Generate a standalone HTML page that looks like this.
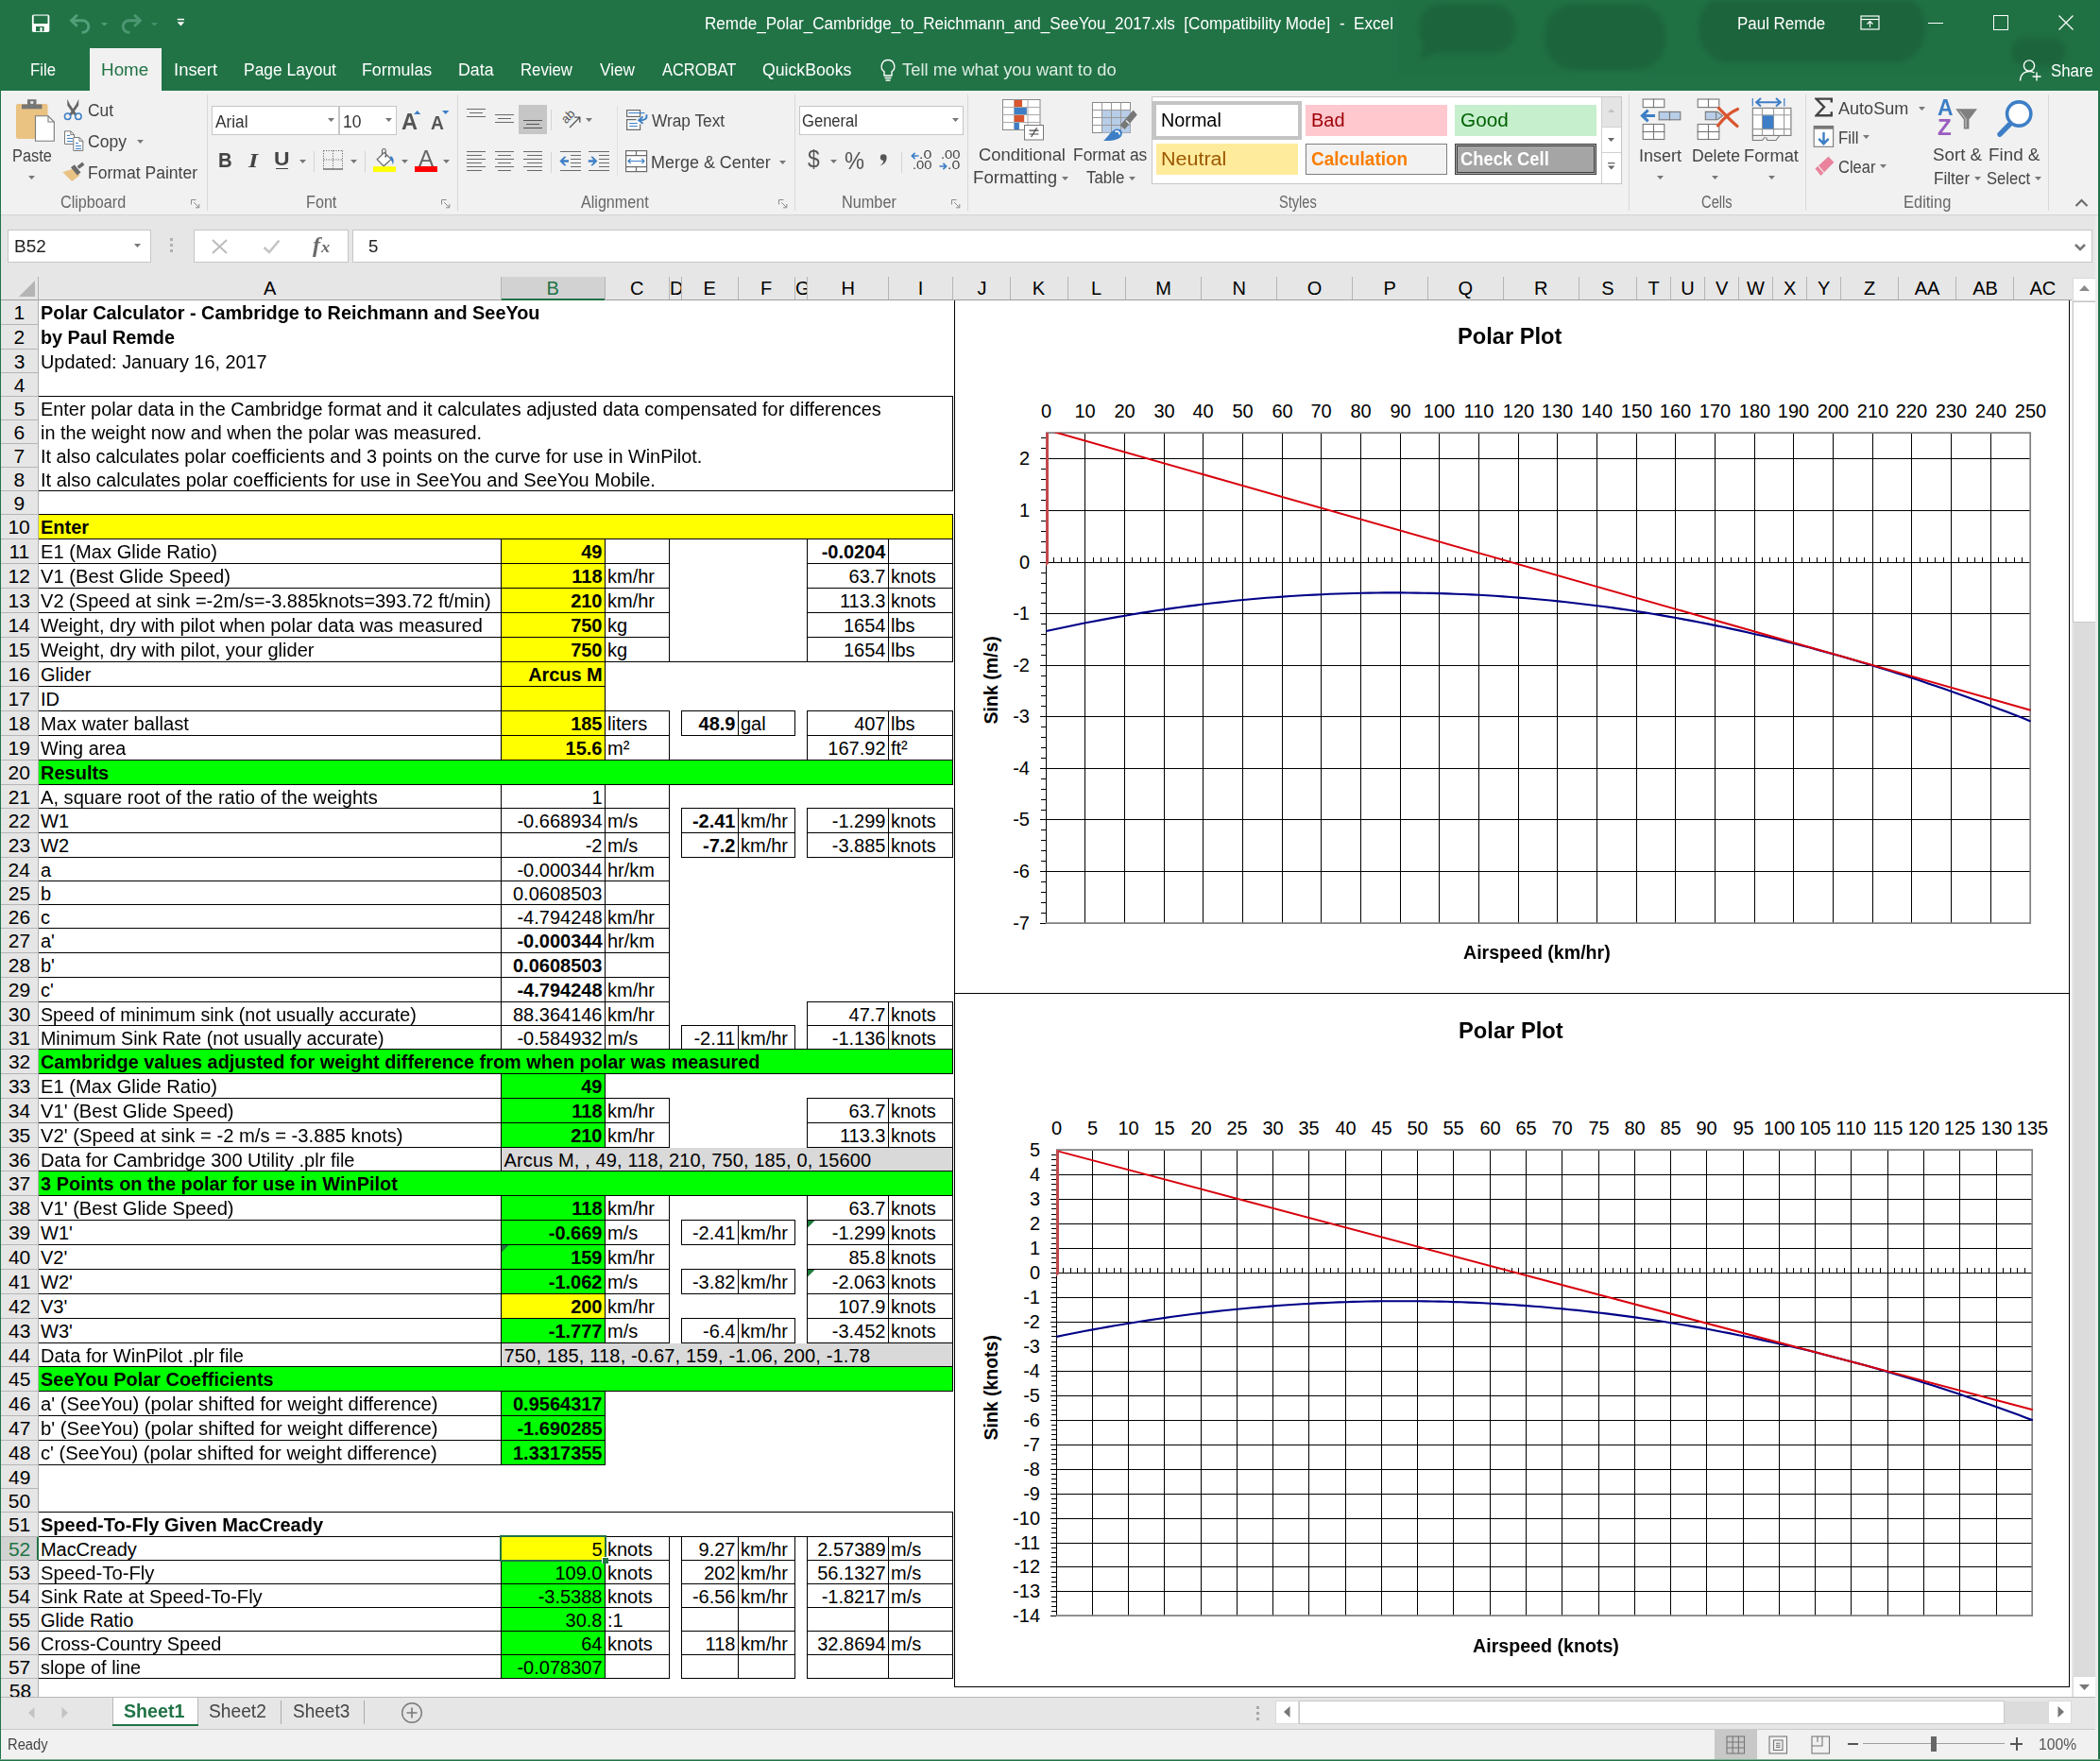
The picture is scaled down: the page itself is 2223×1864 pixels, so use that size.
<!DOCTYPE html><html><head><meta charset="utf-8"><title>Excel</title><style>html,body{margin:0;padding:0;background:#fff;}body{width:2223px;height:1864px;position:relative;overflow:hidden;font-family:'Liberation Sans',sans-serif;}body div,body span,body svg{position:absolute;display:block;}span{white-space:pre;}</style></head><body><div style="left:0px;top:0px;width:2223px;height:96px;background:#217346;"></div>
<svg style="left:1480px;top:0px;filter:blur(2.5px)" width="743" height="96" viewBox="0 0 743 96"><rect x="0" y="0" width="743" height="78" fill="#1d6a40" opacity="0.35"/><g fill="#1b5e38" opacity="0.6"><rect x="22" y="4" width="102" height="52" rx="24"/><path d="M30 40 L22 62 L55 52 Z"/><rect x="155" y="4" width="128" height="70" rx="32"/><rect x="318" y="-6" width="240" height="72" rx="34"/><rect x="650" y="40" width="56" height="30" rx="14"/></g></svg>
<div style="left:95px;top:51px;width:76px;height:46px;background:#f1f1f1;"></div>
<svg style="left:32px;top:14px;" width="22" height="21" viewBox="0 0 22 21"><rect x="1.9" y="1.5" width="18.4" height="18.4" rx="1.6" fill="#fff"/><rect x="3.7" y="2.6" width="14.8" height="8.4" fill="#217346"/><rect x="6" y="14" width="8.6" height="5.2" fill="#217346"/><rect x="10.4" y="15" width="2.2" height="4.2" fill="#fff"/></svg>
<svg style="left:72px;top:14px;" width="26" height="24" viewBox="0 0 26 24"><path d="M6 7.8 H15.5 a6.3 6.3 0 0 1 0 12.6 H14.6" fill="none" stroke="#52a07a" stroke-width="2.9"/><path d="M9.8 1.8 L3.6 7.8 L9.8 13.8" fill="none" stroke="#52a07a" stroke-width="2.9"/></svg>
<svg style="left:107px;top:23.5px;" width="7" height="3.8" viewBox="0 0 7 3.8"><path d="M0 0 L7 0 L3.5 3.8 Z" fill="#4f9b76"/></svg>
<svg style="left:126px;top:14px;" width="26" height="24" viewBox="0 0 26 24"><g transform="translate(26,0) scale(-1,1)"><path d="M6 7.8 H15.5 a6.3 6.3 0 0 1 0 12.6 H14.6" fill="none" stroke="#4d9873" stroke-width="2.9"/><path d="M9.8 1.8 L3.6 7.8 L9.8 13.8" fill="none" stroke="#4d9873" stroke-width="2.9"/></g></svg>
<svg style="left:160px;top:23.5px;" width="7" height="3.8" viewBox="0 0 7 3.8"><path d="M0 0 L7 0 L3.5 3.8 Z" fill="#468f6b"/></svg>
<svg style="left:187px;top:19px;" width="9" height="10" viewBox="0 0 9 10"><rect x="0.8" y="0.8" width="7.2" height="1.5" fill="#fff"/><path d="M0.6 4.3 H8.2 L4.4 8.5 Z" fill="#fff"/></svg>
<span style="top:17px;font:normal normal 17.6px/17.6px 'Liberation Sans',sans-serif;color:#fff;left:745.54px;transform:scaleX(0.9726);transform-origin:0 0;">Remde_Polar_Cambridge_to_Reichmann_and_SeeYou_2017.xls  [Compatibility Mode]  -  Excel</span>
<span style="top:17px;font:normal normal 17.6px/17.6px 'Liberation Sans',sans-serif;color:#fff;left:1838.56px;transform:scaleX(0.9630);transform-origin:0 0;">Paul Remde</span>
<svg style="left:1969px;top:16px;" width="21" height="16" viewBox="0 0 21 16"><rect x="1" y="1" width="19" height="14" fill="none" stroke="#fff" stroke-width="1.2"/><line x1="1" y1="4.5" x2="20" y2="4.5" stroke="#fff" stroke-width="1.2"/><path d="M10.5 13 V7 M7.5 9.5 L10.5 6.5 L13.5 9.5" fill="none" stroke="#fff" stroke-width="1.2"/></svg>
<div style="left:2041px;top:24px;width:16px;height:1px;background:#fff;"></div>
<div style="left:2110px;top:16px;width:14px;height:14px;border:1px solid #fff"></div>
<svg style="left:2178px;top:15px;" width="18" height="18" viewBox="0 0 18 18"><path d="M1.5 1.5 L16.5 16.5 M16.5 1.5 L1.5 16.5" stroke="#fff" stroke-width="1.3"/></svg>
<span style="top:66px;font:normal normal 17.6px/17.6px 'Liberation Sans',sans-serif;color:#fff;left:31.57px;transform:scaleX(0.9500);transform-origin:0 0;">File</span>
<span style="top:66px;font:normal normal 17.6px/17.6px 'Liberation Sans',sans-serif;color:#fff;left:184.43px;transform:scaleX(1.0485);transform-origin:0 0;">Insert</span>
<span style="top:66px;font:normal normal 17.6px/17.6px 'Liberation Sans',sans-serif;color:#fff;left:257.81px;transform:scaleX(0.9913);transform-origin:0 0;">Page Layout</span>
<span style="top:66px;font:normal normal 17.6px/17.6px 'Liberation Sans',sans-serif;color:#fff;left:382.68px;transform:scaleX(1.0119);transform-origin:0 0;">Formulas</span>
<span style="top:66px;font:normal normal 17.6px/17.6px 'Liberation Sans',sans-serif;color:#fff;left:484.88px;transform:scaleX(1.0126);transform-origin:0 0;">Data</span>
<span style="top:66px;font:normal normal 17.6px/17.6px 'Liberation Sans',sans-serif;color:#fff;left:550.97px;transform:scaleX(0.9529);transform-origin:0 0;">Review</span>
<span style="top:66px;font:normal normal 17.6px/17.6px 'Liberation Sans',sans-serif;color:#fff;left:635.00px;transform:scaleX(0.9775);transform-origin:0 0;">View</span>
<span style="top:66px;font:normal normal 17.6px/17.6px 'Liberation Sans',sans-serif;color:#fff;left:701.20px;transform:scaleX(0.9345);transform-origin:0 0;">ACROBAT</span>
<span style="top:66px;font:normal normal 17.6px/17.6px 'Liberation Sans',sans-serif;color:#fff;left:807.25px;transform:scaleX(1.0054);transform-origin:0 0;">QuickBooks</span>
<span style="top:66px;font:normal normal 17.6px/17.6px 'Liberation Sans',sans-serif;color:#217346;left:107.19px;transform:scaleX(1.0726);transform-origin:0 0;">Home</span>
<svg style="left:931px;top:62px;" width="18" height="26" viewBox="0 0 18 26"><path d="M9 1.5 a6.8 6.8 0 0 1 4 12.3 V18 H5 V13.8 A6.8 6.8 0 0 1 9 1.5 Z" fill="none" stroke="#fff" stroke-width="1.4"/><path d="M5.5 20.5 H12.5 M6.5 23 H11.5" stroke="#fff" stroke-width="1.4"/></svg>
<span style="top:66px;font:normal normal 17.6px/17.6px 'Liberation Sans',sans-serif;color:#dcebe2;left:955.24px;transform:scaleX(1.0440);transform-origin:0 0;">Tell me what you want to do</span>
<svg style="left:2137px;top:62px;" width="26" height="25" viewBox="0 0 26 25"><circle cx="11" cy="7.5" r="5.6" fill="none" stroke="#fff" stroke-width="1.4"/><path d="M1.5 23.5 C2 15 8 13.5 11 13.5 C13 13.5 15 14 16.5 15" fill="none" stroke="#fff" stroke-width="1.4"/><path d="M19 14.5 V23.5 M14.5 19 H23.5" stroke="#fff" stroke-width="1.4"/></svg>
<span style="top:67px;font:normal normal 17.6px/17.6px 'Liberation Sans',sans-serif;color:#fff;left:2170.78px;transform:scaleX(0.9560);transform-origin:0 0;">Share</span>
<div style="left:1px;top:96px;width:2221px;height:131px;background:#f1f1f1;"></div>
<div style="left:1px;top:227px;width:2221px;height:1px;background:#d4d4d4"></div>
<div style="left:219px;top:100px;width:1px;height:123px;background:#d8d8d8"></div>
<div style="left:484px;top:100px;width:1px;height:123px;background:#d8d8d8"></div>
<div style="left:841px;top:100px;width:1px;height:123px;background:#d8d8d8"></div>
<div style="left:1024px;top:100px;width:1px;height:123px;background:#d8d8d8"></div>
<div style="left:1724px;top:100px;width:1px;height:123px;background:#d8d8d8"></div>
<div style="left:1911px;top:100px;width:1px;height:123px;background:#d8d8d8"></div>
<div style="left:2168px;top:100px;width:1px;height:123px;background:#d8d8d8"></div>
<span style="top:206px;font:normal normal 17.6px/17.6px 'Liberation Sans',sans-serif;color:#666666;left:63.81px;transform:scaleX(0.9188);transform-origin:0 0;">Clipboard</span>
<span style="top:206px;font:normal normal 17.6px/17.6px 'Liberation Sans',sans-serif;color:#666666;left:324.12px;transform:scaleX(0.9194);transform-origin:0 0;">Font</span>
<span style="top:206px;font:normal normal 17.6px/17.6px 'Liberation Sans',sans-serif;color:#666666;left:615.40px;transform:scaleX(0.9154);transform-origin:0 0;">Alignment</span>
<span style="top:206px;font:normal normal 17.6px/17.6px 'Liberation Sans',sans-serif;color:#666666;left:891.41px;transform:scaleX(0.9251);transform-origin:0 0;">Number</span>
<span style="top:206px;font:normal normal 17.6px/17.6px 'Liberation Sans',sans-serif;color:#666666;left:1353.88px;transform:scaleX(0.8299);transform-origin:0 0;">Styles</span>
<span style="top:206px;font:normal normal 17.6px/17.6px 'Liberation Sans',sans-serif;color:#666666;left:1800.77px;transform:scaleX(0.8371);transform-origin:0 0;">Cells</span>
<span style="top:206px;font:normal normal 17.6px/17.6px 'Liberation Sans',sans-serif;color:#666666;left:2014.90px;transform:scaleX(0.9353);transform-origin:0 0;">Editing</span>
<svg style="left:202px;top:211px;" width="10" height="10" viewBox="0 0 10 10"><path d="M0.5 5.5 V0.5 H5.5" fill="none" stroke="#8a8a8a" stroke-width="1"/><path d="M3.2 3.2 L8.4 8.4 M8.8 5 V8.8 H5" fill="none" stroke="#8a8a8a" stroke-width="1"/></svg>
<svg style="left:467px;top:211px;" width="10" height="10" viewBox="0 0 10 10"><path d="M0.5 5.5 V0.5 H5.5" fill="none" stroke="#8a8a8a" stroke-width="1"/><path d="M3.2 3.2 L8.4 8.4 M8.8 5 V8.8 H5" fill="none" stroke="#8a8a8a" stroke-width="1"/></svg>
<svg style="left:824px;top:211px;" width="10" height="10" viewBox="0 0 10 10"><path d="M0.5 5.5 V0.5 H5.5" fill="none" stroke="#8a8a8a" stroke-width="1"/><path d="M3.2 3.2 L8.4 8.4 M8.8 5 V8.8 H5" fill="none" stroke="#8a8a8a" stroke-width="1"/></svg>
<svg style="left:1007px;top:211px;" width="10" height="10" viewBox="0 0 10 10"><path d="M0.5 5.5 V0.5 H5.5" fill="none" stroke="#8a8a8a" stroke-width="1"/><path d="M3.2 3.2 L8.4 8.4 M8.8 5 V8.8 H5" fill="none" stroke="#8a8a8a" stroke-width="1"/></svg>
<svg style="left:2196px;top:210px;" width="15" height="10" viewBox="0 0 15 10"><path d="M1.5 8 L7.5 2 L13.5 8" fill="none" stroke="#666" stroke-width="2"/></svg>
<svg style="left:16px;top:103px;" width="44" height="48" viewBox="0 0 44 48"><rect x="1" y="7" width="33.5" height="37" rx="2" fill="#eac282"/><path d="M7 7.5 H28.5 V12.3 H7 Z" fill="#767676"/><path d="M13 2.2 H22.5 V8 H13 Z" fill="#767676"/><rect x="16.3" y="4.2" width="3" height="2.6" fill="#f1f1f1"/><path d="M21.5 19.8 H35 L41.3 26 V46.2 H21.5 Z" fill="#fff" stroke="#7a7a7a" stroke-width="1.1"/><path d="M35 19.8 V26 H41.3" fill="none" stroke="#7a7a7a" stroke-width="1.1"/></svg>
<span style="top:156.5px;font:normal normal 17.6px/17.6px 'Liberation Sans',sans-serif;color:#444444;left:12.80px;transform:scaleX(0.9310);transform-origin:0 0;">Paste</span>
<svg style="left:30px;top:186px;" width="7" height="4" viewBox="0 0 7 4"><path d="M0 0 L7 0 L3.5 4 Z" fill="#777"/></svg>
<svg style="left:66px;top:104px;" width="24" height="25" viewBox="0 0 24 25"><path d="M5.2 0.8 L8 6.6 L15.6 17.4 L12.5 17.9 L5.3 7.6 Z" fill="#666"/><path d="M17.3 0.8 L14.5 6.6 L6.9 17.4 L10 17.9 L17.2 7.6 Z" fill="#666"/><circle cx="5.6" cy="19.3" r="3.2" fill="none" stroke="#3d7ec6" stroke-width="1.5"/><circle cx="16.9" cy="19.3" r="3.2" fill="none" stroke="#3d7ec6" stroke-width="1.5"/></svg>
<span style="top:108.8px;font:normal normal 17.6px/17.6px 'Liberation Sans',sans-serif;color:#444444;left:93.06px;transform:scaleX(0.9887);transform-origin:0 0;">Cut</span>
<svg style="left:66px;top:136px;" width="24" height="26" viewBox="0 0 24 26"><path d="M2.5 2.8 H8.8 L12.6 6.6 V16.5 H2.5 Z" fill="#fff" stroke="#777" stroke-width="1"/><path d="M8.8 2.8 V6.6 H12.6" fill="none" stroke="#777" stroke-width="1"/><path d="M4.5 7.5 H8 M4.5 10.5 H10.5 M4.5 13.5 H10.5" stroke="#3d7ec6" stroke-width="1" shape-rendering="crispEdges"/><path d="M11.8 9.5 H18 L21.8 13.3 V23.5 H11.8 Z" fill="#fff" stroke="#777" stroke-width="1"/><path d="M18 9.5 V13.3 H21.8" fill="none" stroke="#777" stroke-width="1"/><path d="M13.8 15.5 H17 M13.8 18.5 H19.8 M13.8 21.5 H19.8" stroke="#3d7ec6" stroke-width="1" shape-rendering="crispEdges"/></svg>
<span style="top:141.8px;font:normal normal 17.6px/17.6px 'Liberation Sans',sans-serif;color:#444444;left:93.05px;transform:scaleX(0.9963);transform-origin:0 0;">Copy</span>
<svg style="left:145.2px;top:148px;" width="7" height="4" viewBox="0 0 7 4"><path d="M0 0 L7 0 L3.5 4 Z" fill="#777"/></svg>
<svg style="left:65px;top:170px;" width="26" height="24" viewBox="0 0 26 24"><path d="M1.3 12.2 L12 8.8 L19.5 15.5 L11.2 22 Z" fill="#eac282"/><path d="M10 7.2 L13.8 4.2 L20.5 12.6 L16.8 15.6 Z" fill="#6a6a6a"/><path d="M16.6 6 L22.2 1.6 L24.4 4.4 L18.8 8.8 Z" fill="#6a6a6a"/></svg>
<span style="top:174.6px;font:normal normal 17.6px/17.6px 'Liberation Sans',sans-serif;color:#444444;left:92.50px;transform:scaleX(0.9974);transform-origin:0 0;">Format Painter</span>
<div style="left:224px;top:112px;width:133px;height:29px;border:1px solid #c6c6c6;background:#fff"></div>
<div style="left:359px;top:112px;width:59px;height:29px;border:1px solid #c6c6c6;background:#fff"></div>
<span style="top:120.69999999999999px;font:normal normal 17.6px/17.6px 'Liberation Sans',sans-serif;color:#333;left:228.00px;transform:scaleX(0.9824);transform-origin:0 0;">Arial</span>
<svg style="left:347px;top:125px;" width="7" height="4" viewBox="0 0 7 4"><path d="M0 0 L7 0 L3.5 4 Z" fill="#777"/></svg>
<span style="top:120.69999999999999px;font:normal normal 17.6px/17.6px 'Liberation Sans',sans-serif;color:#333;left:362.76px;transform:scaleX(0.9943);transform-origin:0 0;">10</span>
<svg style="left:408px;top:125px;" width="7" height="4" viewBox="0 0 7 4"><path d="M0 0 L7 0 L3.5 4 Z" fill="#777"/></svg>
<span style="top:117.6px;font:normal bold 23.5px/23.5px 'Liberation Sans',sans-serif;color:#555;left:424.80px;transform:scaleX(1.0032);transform-origin:0 0;">A</span>
<svg style="left:438px;top:117px;" width="8" height="4" viewBox="0 0 8 4"><path d="M0 4 L3.7 0 L7.4 4 Z" fill="#3d7ec6"/></svg>
<span style="top:120.6px;font:normal bold 19.5px/19.5px 'Liberation Sans',sans-serif;color:#555;left:455.51px;transform:scaleX(0.9846);transform-origin:0 0;">A</span>
<svg style="left:468px;top:117px;" width="8" height="4" viewBox="0 0 8 4"><path d="M0 0 L7.4 0 L3.7 4 Z" fill="#3d7ec6"/></svg>
<span style="top:158.9px;font:normal bold 22.5px/22.5px 'Liberation Sans',sans-serif;color:#444;left:231.25px;transform:scaleX(0.9018);transform-origin:0 0;">B</span>
<span style="top:158.9px;font:italic bold 22px/22px 'Liberation Serif',serif;color:#444;left:262.70px;transform:scaleX(1.1895);transform-origin:0 0;">I</span>
<span style="top:159px;font:normal bold 19.5px/19.5px 'Liberation Sans',sans-serif;color:#444;left:290.23px;transform:scaleX(1.1745);transform-origin:0 0;">U</span>
<div style="left:292px;top:177.5px;width:13px;height:1.5px;background:#444"></div>
<svg style="left:317px;top:169px;" width="7" height="4" viewBox="0 0 7 4"><path d="M0 0 L7 0 L3.5 4 Z" fill="#777"/></svg>
<div style="left:332px;top:160px;width:1px;height:22px;background:#d4d4d4"></div>
<svg style="left:341px;top:158px;" width="24" height="23" viewBox="0 0 24 23"><g stroke="#555" stroke-width="1" stroke-dasharray="1 1.6"><path d="M1.5 1.5 H21.5 M1.5 11 H21.5 M1.5 1.5 V20.5 M11.5 1.5 V20.5 M21.5 1.5 V20.5"/></g><path d="M1 21 H22" stroke="#666" stroke-width="1.4"/></svg>
<svg style="left:371px;top:169px;" width="7" height="4" viewBox="0 0 7 4"><path d="M0 0 L7 0 L3.5 4 Z" fill="#777"/></svg>
<div style="left:386px;top:160px;width:1px;height:22px;background:#d4d4d4"></div>
<svg style="left:394px;top:156px;" width="28" height="27" viewBox="0 0 28 27"><path d="M5.2 12.8 L12.8 5.4 L20 12.6 L12.2 19.8 Z" fill="#fff" stroke="#666" stroke-width="1.2"/><path d="M10.5 7.5 V3.4 a1.9 1.9 0 0 1 3.8 0 V9.2" fill="none" stroke="#666" stroke-width="1.1"/><circle cx="14.3" cy="9.6" r="1.1" fill="#666"/><path d="M19.6 9 C22.5 10.5 23.6 14 21.8 18.2 C21.3 15 20.2 13.4 18.8 12.2 Z" fill="#3d7ec6"/><rect x="1" y="20.2" width="24" height="5.7" fill="#ffff00"/></svg>
<svg style="left:425px;top:169px;" width="7" height="4" viewBox="0 0 7 4"><path d="M0 0 L7 0 L3.5 4 Z" fill="#777"/></svg>
<span style="top:157px;font:normal normal 23.5px/23.5px 'Liberation Sans',sans-serif;color:#666;left:443.00px;transform:scaleX(1.0258);transform-origin:0 0;">A</span>
<div style="left:439px;top:176.2px;width:24px;height:5.7px;background:#ff0000;"></div>
<svg style="left:469px;top:169px;" width="7" height="4" viewBox="0 0 7 4"><path d="M0 0 L7 0 L3.5 4 Z" fill="#777"/></svg>
<div style="left:494px;top:115px;width:20px;height:1px;background:#6a6a6a"></div>
<div style="left:497px;top:119px;width:14px;height:1px;background:#6a6a6a"></div>
<div style="left:494px;top:123px;width:20px;height:1px;background:#6a6a6a"></div>
<div style="left:524px;top:121px;width:20px;height:1px;background:#6a6a6a"></div>
<div style="left:527px;top:125px;width:14px;height:1px;background:#6a6a6a"></div>
<div style="left:524px;top:129px;width:20px;height:1px;background:#6a6a6a"></div>
<div style="left:549px;top:111px;width:30px;height:31px;background:#c6c6c6;"></div>
<div style="left:554px;top:127px;width:20px;height:1px;background:#555"></div>
<div style="left:557px;top:131px;width:14px;height:1px;background:#555"></div>
<div style="left:554px;top:135px;width:20px;height:1px;background:#555"></div>
<div style="left:583px;top:116px;width:1px;height:22px;background:#d4d4d4"></div>
<svg style="left:592px;top:114px;" width="26" height="26" viewBox="0 0 26 26"><g transform="translate(7.2,17.4) rotate(-45)"><text x="0" y="0" font-family="Liberation Sans" font-size="13" fill="#555">ab</text></g><path d="M11 21 L21.5 10.5 M16.2 10.2 H21.8 V15.8" fill="none" stroke="#555" stroke-width="1.3"/></svg>
<svg style="left:620px;top:125px;" width="7" height="4" viewBox="0 0 7 4"><path d="M0 0 L7 0 L3.5 4 Z" fill="#777"/></svg>
<div style="left:653px;top:112px;width:1px;height:75px;background:#dedede"></div>
<svg style="left:662px;top:115px;" width="26" height="24" viewBox="0 0 26 24"><rect x="1.6" y="1.6" width="14" height="6.8" fill="#fff" stroke="#6a6a6a" stroke-width="1.2"/><path d="M11.5 11.6 H1.6 V22.4 H15.6 V16.5" fill="#fff" stroke="#6a6a6a" stroke-width="1.2"/><path d="M4.2 15.5 H12.8 M4.2 18.5 H12.8" stroke="#3d7ec6" stroke-width="1.2"/><path d="M3.4 4.6 H20.5" stroke="#3d7ec6" stroke-width="1.1"/><path d="M22.3 6.2 C23.4 10.8 20.5 12.4 15 12.2" fill="none" stroke="#3d7ec6" stroke-width="1.9"/><path d="M18.6 8.4 L14.2 12.2 L18.6 15.8" fill="none" stroke="#3d7ec6" stroke-width="1.9"/></svg>
<span style="top:119.80000000000001px;font:normal normal 17.6px/17.6px 'Liberation Sans',sans-serif;color:#444444;left:689.90px;transform:scaleX(0.9822);transform-origin:0 0;">Wrap Text</span>
<div style="left:494px;top:160px;width:20px;height:1px;background:#6a6a6a"></div>
<div style="left:494px;top:164px;width:16px;height:1px;background:#6a6a6a"></div>
<div style="left:494px;top:168px;width:20px;height:1px;background:#6a6a6a"></div>
<div style="left:494px;top:172px;width:16px;height:1px;background:#6a6a6a"></div>
<div style="left:494px;top:176px;width:20px;height:1px;background:#6a6a6a"></div>
<div style="left:494px;top:180px;width:16px;height:1px;background:#6a6a6a"></div>
<div style="left:524px;top:160px;width:20px;height:1px;background:#6a6a6a"></div>
<div style="left:527px;top:164px;width:14px;height:1px;background:#6a6a6a"></div>
<div style="left:524px;top:168px;width:20px;height:1px;background:#6a6a6a"></div>
<div style="left:527px;top:172px;width:14px;height:1px;background:#6a6a6a"></div>
<div style="left:524px;top:176px;width:20px;height:1px;background:#6a6a6a"></div>
<div style="left:527px;top:180px;width:14px;height:1px;background:#6a6a6a"></div>
<div style="left:554px;top:160px;width:20px;height:1px;background:#6a6a6a"></div>
<div style="left:558px;top:164px;width:16px;height:1px;background:#6a6a6a"></div>
<div style="left:554px;top:168px;width:20px;height:1px;background:#6a6a6a"></div>
<div style="left:558px;top:172px;width:16px;height:1px;background:#6a6a6a"></div>
<div style="left:554px;top:176px;width:20px;height:1px;background:#6a6a6a"></div>
<div style="left:558px;top:180px;width:16px;height:1px;background:#6a6a6a"></div>
<div style="left:583px;top:161px;width:1px;height:22px;background:#d4d4d4"></div>
<div style="left:593px;top:160px;width:22px;height:1px;background:#6a6a6a"></div>
<div style="left:604px;top:164px;width:11px;height:1px;background:#6a6a6a"></div>
<div style="left:604px;top:168px;width:11px;height:1px;background:#6a6a6a"></div>
<div style="left:604px;top:172px;width:11px;height:1px;background:#6a6a6a"></div>
<div style="left:604px;top:176px;width:11px;height:1px;background:#6a6a6a"></div>
<div style="left:593px;top:180px;width:22px;height:1px;background:#6a6a6a"></div>
<svg style="left:592px;top:165px;" width="11" height="11" viewBox="0 0 11 11"><path d="M0.4 5.5 L5.2 0.8 H7.6 L4.4 4.2 H10 V6.8 H4.4 L7.6 10.2 H5.2 Z" fill="#3d7ec6"/></svg>
<div style="left:623px;top:160px;width:22px;height:1px;background:#6a6a6a"></div>
<div style="left:634px;top:164px;width:11px;height:1px;background:#6a6a6a"></div>
<div style="left:634px;top:168px;width:11px;height:1px;background:#6a6a6a"></div>
<div style="left:634px;top:172px;width:11px;height:1px;background:#6a6a6a"></div>
<div style="left:634px;top:176px;width:11px;height:1px;background:#6a6a6a"></div>
<div style="left:623px;top:180px;width:22px;height:1px;background:#6a6a6a"></div>
<svg style="left:622px;top:165px;" width="11" height="11" viewBox="0 0 11 11"><path d="M10.4 5.5 L5.6 0.8 H3.2 L6.4 4.2 H0.8 V6.8 H6.4 L3.2 10.2 H5.6 Z" fill="#3d7ec6"/></svg>
<svg style="left:661px;top:158px;" width="26" height="26" viewBox="0 0 26 26"><rect x="1.6" y="1.6" width="22" height="22" fill="#fff" stroke="#6a6a6a" stroke-width="1.2"/><path d="M1.6 6.6 H23.6 M1.6 18.6 H23.6 M12.5 1.6 V6.6 M12.5 18.6 V23.6" stroke="#6a6a6a" stroke-width="1.2"/><path d="M4 12.5 H21 M6.6 10 L4 12.5 L6.6 15 M18.4 10 L21 12.5 L18.4 15" fill="none" stroke="#3d7ec6" stroke-width="1.2"/></svg>
<span style="top:163.5px;font:normal normal 17.6px/17.6px 'Liberation Sans',sans-serif;color:#444444;left:688.67px;transform:scaleX(1.0209);transform-origin:0 0;">Merge &amp; Center</span>
<svg style="left:825px;top:170px;" width="7" height="4" viewBox="0 0 7 4"><path d="M0 0 L7 0 L3.5 4 Z" fill="#777"/></svg>
<div style="left:846px;top:112px;width:172px;height:29px;border:1px solid #c6c6c6;background:#fff"></div>
<span style="top:120.4px;font:normal normal 17.6px/17.6px 'Liberation Sans',sans-serif;color:#333;left:849.29px;transform:scaleX(0.9432);transform-origin:0 0;">General</span>
<svg style="left:1008px;top:125px;" width="7" height="4" viewBox="0 0 7 4"><path d="M0 0 L7 0 L3.5 4 Z" fill="#777"/></svg>
<span style="top:156.3px;font:normal normal 25px/25px 'Liberation Sans',sans-serif;color:#555;left:855.17px;transform:scaleX(0.9132);transform-origin:0 0;">$</span>
<svg style="left:879px;top:169px;" width="7" height="4" viewBox="0 0 7 4"><path d="M0 0 L7 0 L3.5 4 Z" fill="#777"/></svg>
<span style="top:158px;font:normal normal 25px/25px 'Liberation Sans',sans-serif;color:#555;left:894.49px;transform:scaleX(0.9463);transform-origin:0 0;">%</span>
<svg style="left:929px;top:162px;" width="12" height="15" viewBox="0 0 12 15"><path d="M6.2 1.2 a3.4 3.4 0 0 1 3.4 3.6 C9.6 9.5 6.5 12.5 2.2 13.6 C5 11.8 6.2 10 6.2 8 a3.4 3.4 0 0 1 0 -6.8 Z" fill="#555"/></svg>
<div style="left:954px;top:161px;width:1px;height:22px;background:#d4d4d4"></div>
<svg style="left:964px;top:161px;" width="9" height="8" viewBox="0 0 9 8"><path d="M8.5 4 H1.5 M4.6 0.8 L1.4 4 L4.6 7.2" fill="none" stroke="#3d7ec6" stroke-width="1.7"/></svg>
<span style="top:157px;font:normal normal 13px/13px 'Liberation Sans',sans-serif;color:#444;left:972.97px;transform:scaleX(1.2222);transform-origin:0 0;">.0</span>
<span style="top:168.3px;font:normal normal 13px/13px 'Liberation Sans',sans-serif;color:#444;left:965.58px;transform:scaleX(1.1385);transform-origin:0 0;">.00</span>
<span style="top:157px;font:normal normal 13px/13px 'Liberation Sans',sans-serif;color:#444;left:995.58px;transform:scaleX(1.1385);transform-origin:0 0;">.00</span>
<svg style="left:993.5px;top:172.3px;" width="9" height="8" viewBox="0 0 9 8"><path d="M0.5 4 H7.5 M4.4 0.8 L7.6 4 L4.4 7.2" fill="none" stroke="#3d7ec6" stroke-width="1.7"/></svg>
<span style="top:168.3px;font:normal normal 13px/13px 'Liberation Sans',sans-serif;color:#444;left:1002.97px;transform:scaleX(1.2222);transform-origin:0 0;">.0</span>
<svg style="left:1061px;top:105px;" width="46" height="45" viewBox="0 0 46 45"><rect x="0.5" y="0.5" width="39.5" height="32" fill="#fff" stroke="#888" stroke-width="1"/><path d="M12.7 0.5 V32.5" stroke="#aaa" stroke-width="1"/><path d="M27 0.5 V32.5" stroke="#aaa" stroke-width="1"/><path d="M0.5 8.5 H40" stroke="#aaa" stroke-width="1"/><path d="M0.5 16.5 H40" stroke="#aaa" stroke-width="1"/><path d="M0.5 24.5 H40" stroke="#aaa" stroke-width="1"/><rect x="12.7" y="1" width="8.3" height="7" fill="#d9552f"/><rect x="12.7" y="9" width="13.2" height="7" fill="#3d7ec6"/><rect x="12.7" y="17" width="10.5" height="7" fill="#d9552f"/><rect x="12.7" y="25" width="5.2" height="7" fill="#3d7ec6"/><rect x="23.5" y="27.5" width="20" height="15.5" fill="#fff" stroke="#777" stroke-width="1"/><path d="M28.5 33.2 H38.5 M28.5 37 H38.5 M36.6 30.2 L30.6 40" stroke="#444" stroke-width="1.2"/></svg>
<span style="top:156.2px;font:normal normal 17.6px/17.6px 'Liberation Sans',sans-serif;color:#444444;left:1035.92px;transform:scaleX(1.0446);transform-origin:0 0;">Conditional</span>
<span style="top:180.1px;font:normal normal 17.6px/17.6px 'Liberation Sans',sans-serif;color:#444444;left:1030.21px;transform:scaleX(1.0585);transform-origin:0 0;">Formatting</span>
<svg style="left:1124.2px;top:186.5px;" width="7" height="4" viewBox="0 0 7 4"><path d="M0 0 L7 0 L3.5 4 Z" fill="#777"/></svg>
<svg style="left:1156px;top:108px;" width="48" height="43" viewBox="0 0 48 43"><rect x="0.5" y="0.5" width="40" height="32" fill="#fff" stroke="#888" stroke-width="1"/><rect x="10.5" y="8.5" width="30" height="24" fill="#b7cde8"/><path d="M10.5 0.5 V32.5" stroke="#999" stroke-width="1"/><path d="M20.5 0.5 V32.5" stroke="#999" stroke-width="1"/><path d="M30.5 0.5 V32.5" stroke="#999" stroke-width="1"/><path d="M0.5 8.5 H40.5" stroke="#999" stroke-width="1"/><path d="M0.5 16.5 H40.5" stroke="#999" stroke-width="1"/><path d="M0.5 24.5 H40.5" stroke="#999" stroke-width="1"/><path d="M43.6 8.6 L47.8 13.6 L34.6 29 L29.6 24.6 Z" fill="#777"/><path d="M36 19.5 L39.5 23" stroke="#f1f1f1" stroke-width="1.3"/><path d="M12 41 C17 37 20 30 26 28.5 C30 28 33 31 31.5 35 C30 39.5 22 41.5 12 41 Z" fill="#3d7ec6"/><path d="M24.5 31.5 C27 30 29.5 31.5 29 34.5" fill="none" stroke="#fff" stroke-width="1.6"/></svg>
<span style="top:156.2px;font:normal normal 17.6px/17.6px 'Liberation Sans',sans-serif;color:#444444;left:1135.82px;transform:scaleX(0.9890);transform-origin:0 0;">Format as</span>
<span style="top:180.1px;font:normal normal 17.6px/17.6px 'Liberation Sans',sans-serif;color:#444444;left:1150.06px;transform:scaleX(0.9585);transform-origin:0 0;">Table</span>
<svg style="left:1195px;top:186.5px;" width="7" height="4" viewBox="0 0 7 4"><path d="M0 0 L7 0 L3.5 4 Z" fill="#777"/></svg>
<div style="left:1219px;top:102px;width:496px;height:91px;border:1px solid #c6c6c6;background:#fff"></div>
<div style="left:1696px;top:103px;width:20px;height:31px;background:#e4e4e4;"></div>
<div style="left:1695px;top:103px;width:1px;height:91px;background:#d0d0d0"></div>
<div style="left:1696px;top:134px;width:20px;height:1px;background:#d0d0d0"></div>
<div style="left:1696px;top:161px;width:20px;height:1px;background:#d0d0d0"></div>
<svg style="left:1702px;top:115px;" width="8" height="4" viewBox="0 0 8 4"><path d="M0 4 L3.7 0.3 L7.4 4 Z" fill="#c3c3c3"/></svg>
<svg style="left:1702px;top:146px;" width="7" height="4" viewBox="0 0 7 4"><path d="M0 0 L7 0 L3.5 4 Z" fill="#666"/></svg>
<svg style="left:1702px;top:172px;" width="8" height="9" viewBox="0 0 8 9"><rect x="0" y="0" width="7.4" height="1.3" fill="#666"/><path d="M0 3.5 H7.4 L3.7 7.5 Z" fill="#666"/></svg>
<div style="left:1220px;top:107px;width:150px;height:33px;border:4px solid #c4c4c4;background:#fff"></div>
<span style="top:117px;font:normal normal 20px/20px 'Liberation Sans',sans-serif;color:#000;left:1229.12px;transform:scaleX(0.9895);transform-origin:0 0;">Normal</span>
<div style="left:1382px;top:111px;width:150px;height:33px;background:#ffc7ce;"></div>
<span style="top:117px;font:normal normal 20px/20px 'Liberation Sans',sans-serif;color:#9c0006;left:1387.80px;transform:scaleX(0.9985);transform-origin:0 0;">Bad</span>
<div style="left:1540px;top:111px;width:150px;height:33px;background:#c6efce;"></div>
<span style="top:117px;font:normal normal 20px/20px 'Liberation Sans',sans-serif;color:#006100;left:1545.76px;transform:scaleX(1.0366);transform-origin:0 0;">Good</span>
<div style="left:1224px;top:152px;width:150px;height:33px;background:#ffeb9c;"></div>
<span style="top:157.5px;font:normal normal 20px/20px 'Liberation Sans',sans-serif;color:#9c5700;left:1229.39px;transform:scaleX(1.0753);transform-origin:0 0;">Neutral</span>
<div style="left:1382px;top:152px;width:148px;height:31px;border:1px solid #7f7f7f;background:#f2f2f2"></div>
<span style="top:157.5px;font:normal bold 20px/20px 'Liberation Sans',sans-serif;color:#fa7d00;left:1388.09px;transform:scaleX(0.9475);transform-origin:0 0;">Calculation</span>
<div style="left:1540px;top:152px;width:144px;height:27px;border:3px double #3f3f3f;background:#a5a5a5"></div>
<span style="top:157.5px;font:normal bold 20px/20px 'Liberation Sans',sans-serif;color:#fff;left:1546.11px;transform:scaleX(0.9167);transform-origin:0 0;">Check Cell</span>
<svg style="left:1736px;top:104px;" width="46" height="46" viewBox="0 0 46 46"><rect x="3.2" y="1" width="11.3" height="8.6" fill="#fff" stroke="#777" stroke-width="1.1"/><rect x="14.5" y="1" width="11.3" height="8.6" fill="#fff" stroke="#777" stroke-width="1.1"/><rect x="20.2" y="14.4" width="11.3" height="8.4" fill="#b7cde8" stroke="#777" stroke-width="1.1"/><rect x="31.5" y="14.4" width="11.3" height="8.4" fill="#b7cde8" stroke="#777" stroke-width="1.1"/><rect x="3.2" y="27.5" width="11.3" height="8" fill="#fff" stroke="#777" stroke-width="1.1"/><rect x="14.5" y="27.5" width="11.3" height="8" fill="#fff" stroke="#777" stroke-width="1.1"/><rect x="3.2" y="35.5" width="11.3" height="8" fill="#fff" stroke="#777" stroke-width="1.1"/><rect x="14.5" y="35.5" width="11.3" height="8" fill="#fff" stroke="#777" stroke-width="1.1"/><path d="M16 18.4 H3 M8.6 12.6 L2.4 18.4 L8.6 24.4" fill="none" stroke="#3d7ec6" stroke-width="3"/></svg>
<span style="top:156.7px;font:normal normal 17.6px/17.6px 'Liberation Sans',sans-serif;color:#444444;left:1735.27px;transform:scaleX(1.0225);transform-origin:0 0;">Insert</span>
<svg style="left:1754.2px;top:185.8px;" width="7" height="4" viewBox="0 0 7 4"><path d="M0 0 L7 0 L3.5 4 Z" fill="#777"/></svg>
<svg style="left:1796px;top:104px;" width="46" height="46" viewBox="0 0 46 46"><rect x="1.2" y="1" width="11.3" height="8.6" fill="#fff" stroke="#777" stroke-width="1.1"/><rect x="12.5" y="1" width="11.3" height="8.6" fill="#fff" stroke="#777" stroke-width="1.1"/><path d="M9.3 14.4 H22 L27.5 18.6 L22 22.8 H9.3 Z" fill="#b7cde8" stroke="#777" stroke-width="1.1"/><path d="M20.6 14.4 V22.8" stroke="#777" stroke-width="1.1"/><rect x="1.2" y="27.5" width="11.3" height="8" fill="#fff" stroke="#777" stroke-width="1.1"/><rect x="12.5" y="27.5" width="11.3" height="8" fill="#fff" stroke="#777" stroke-width="1.1"/><rect x="1.2" y="35.5" width="11.3" height="8" fill="#fff" stroke="#777" stroke-width="1.1"/><rect x="12.5" y="35.5" width="11.3" height="8" fill="#fff" stroke="#777" stroke-width="1.1"/><path d="M23.5 10.5 C28 15 36 24 43 29.5 M43.5 11.5 C35 15 28 22 22.5 29" fill="none" stroke="#d9552f" stroke-width="3.2" stroke-linecap="round"/></svg>
<span style="top:156.7px;font:normal normal 17.6px/17.6px 'Liberation Sans',sans-serif;color:#444444;left:1790.59px;transform:scaleX(1.0041);transform-origin:0 0;">Delete</span>
<svg style="left:1812px;top:185.8px;" width="7" height="4" viewBox="0 0 7 4"><path d="M0 0 L7 0 L3.5 4 Z" fill="#777"/></svg>
<svg style="left:1854px;top:103px;" width="44" height="48" viewBox="0 0 44 48"><path d="M1.3 1 V9.4 M34.8 1 V9.4" stroke="#3d7ec6" stroke-width="1.2"/><path d="M5.5 5.2 H30.5 M10 1 L5.2 5.2 L10 9.4 M26 1 L30.8 5.2 L26 9.4" fill="none" stroke="#3d7ec6" stroke-width="2"/><rect x="1.3" y="11.4" width="40.6" height="29" fill="#fff" stroke="#777" stroke-width="1.1"/><path d="M11.5 11.4 V40.4 M23.5 11.4 V40.4 M34.6 11.4 V40.4 M1.3 18.8 H41.9 M1.3 33.6 H41.9" stroke="#999" stroke-width="1.1"/><rect x="12" y="19.2" width="11.2" height="14" fill="#3d7ec6"/><path d="M1.3 40.4 V45.5 H11.5 L14.4 42 M15.5 42.5 L16.8 45.5 H26 L29.5 41" fill="none" stroke="#777" stroke-width="1.1"/></svg>
<span style="top:156.7px;font:normal normal 17.6px/17.6px 'Liberation Sans',sans-serif;color:#444444;left:1846.34px;transform:scaleX(1.0389);transform-origin:0 0;">Format</span>
<svg style="left:1872px;top:185.8px;" width="7" height="4" viewBox="0 0 7 4"><path d="M0 0 L7 0 L3.5 4 Z" fill="#777"/></svg>
<svg style="left:1921px;top:103px;" width="20" height="21" viewBox="0 0 20 21"><path d="M17.8 5.5 V1.6 H1.6 L10 10.2 L1.6 19.2 H17.8 V15.2" fill="none" stroke="#444" stroke-width="2.4" stroke-linejoin="miter"/></svg>
<span style="top:106.5px;font:normal normal 17.6px/17.6px 'Liberation Sans',sans-serif;color:#444444;left:1946.40px;transform:scaleX(1.0260);transform-origin:0 0;">AutoSum</span>
<svg style="left:2031px;top:113px;" width="7" height="4" viewBox="0 0 7 4"><path d="M0 0 L7 0 L3.5 4 Z" fill="#777"/></svg>
<svg style="left:1919px;top:132px;" width="23" height="25" viewBox="0 0 23 25"><rect x="1.2" y="1.5" width="20.4" height="21.8" fill="#fff" stroke="#777" stroke-width="1.1"/><rect x="1.2" y="1.5" width="20.4" height="3.2" fill="#777"/><path d="M11.5 8 V20 M6.3 14.8 L11.5 20.2 L16.7 14.8" fill="none" stroke="#3d7ec6" stroke-width="2.4"/></svg>
<span style="top:137.5px;font:normal normal 17.6px/17.6px 'Liberation Sans',sans-serif;color:#444444;left:1945.86px;transform:scaleX(0.9570);transform-origin:0 0;">Fill</span>
<svg style="left:1972.3px;top:143px;" width="7" height="4" viewBox="0 0 7 4"><path d="M0 0 L7 0 L3.5 4 Z" fill="#777"/></svg>
<svg style="left:1920px;top:164px;" width="24" height="24" viewBox="0 0 24 24"><path d="M1.5 14.5 L15.5 1.8 L21.4 7.8 L7.5 22 Z" fill="#e8839b"/><path d="M4.8 11.6 L10.6 18.6" stroke="#f1f1f1" stroke-width="1.1"/></svg>
<span style="top:168.6px;font:normal normal 17.6px/17.6px 'Liberation Sans',sans-serif;color:#444444;left:1946.20px;transform:scaleX(0.9366);transform-origin:0 0;">Clear</span>
<svg style="left:1990.3px;top:174px;" width="7" height="4" viewBox="0 0 7 4"><path d="M0 0 L7 0 L3.5 4 Z" fill="#777"/></svg>
<span style="top:101.5px;font:normal bold 24px/24px 'Liberation Sans',sans-serif;color:#3d7ec6;left:2050.82px;transform:scaleX(0.9538);transform-origin:0 0;">A</span>
<span style="top:122.6px;font:normal bold 24px/24px 'Liberation Sans',sans-serif;color:#9a5cc0;left:2051.25px;transform:scaleX(1.0038);transform-origin:0 0;">Z</span>
<svg style="left:2069px;top:113px;" width="26" height="26" viewBox="0 0 26 26"><path d="M1.2 2.2 H24 L15.4 13.4 V23.6 H9.8 V13.4 Z" fill="#808080"/><path d="M5.5 4.5 L12 12.8 V22" fill="none" stroke="#cfcfcf" stroke-width="1"/></svg>
<span style="top:156.4px;font:normal normal 17.6px/17.6px 'Liberation Sans',sans-serif;color:#444444;left:2046.20px;transform:scaleX(1.0646);transform-origin:0 0;">Sort &amp;</span>
<span style="top:180.6px;font:normal normal 17.6px/17.6px 'Liberation Sans',sans-serif;color:#444444;left:2046.74px;transform:scaleX(0.9745);transform-origin:0 0;">Filter</span>
<svg style="left:2090.3px;top:186.5px;" width="7" height="4" viewBox="0 0 7 4"><path d="M0 0 L7 0 L3.5 4 Z" fill="#777"/></svg>
<svg style="left:2110px;top:104px;" width="44" height="44" viewBox="0 0 44 44"><path d="M17.5 27.5 L7 38.2" stroke="#3d7ec6" stroke-width="5.4" stroke-linecap="round"/><circle cx="27.2" cy="16.5" r="12.6" fill="#fff" stroke="#3d7ec6" stroke-width="3.6"/></svg>
<span style="top:156.4px;font:normal normal 17.6px/17.6px 'Liberation Sans',sans-serif;color:#444444;left:2105.00px;transform:scaleX(1.0694);transform-origin:0 0;">Find &amp;</span>
<span style="top:180.6px;font:normal normal 17.6px/17.6px 'Liberation Sans',sans-serif;color:#444444;left:2103.19px;transform:scaleX(0.9417);transform-origin:0 0;">Select</span>
<svg style="left:2154.3px;top:186.5px;" width="7" height="4" viewBox="0 0 7 4"><path d="M0 0 L7 0 L3.5 4 Z" fill="#777"/></svg>
<div style="left:41px;top:318px;width:2153px;height:1478px;background:#fff;"></div>
<div style="left:1px;top:228px;width:2221px;height:90px;background:#e6e6e6;"></div>
<div style="left:1px;top:318px;width:40px;height:1478px;background:#e6e6e6;"></div>
<div style="left:531px;top:293px;width:109px;height:24px;background:#d2d2d2;"></div>
<div style="left:1px;top:317px;width:2192px;height:1px;background:#9f9f9f"></div>
<div style="left:531px;top:316px;width:109px;height:2px;background:#217346"></div>
<div style="left:530px;top:293px;width:1px;height:24px;background:#b5b5b5"></div>
<div style="left:640px;top:293px;width:1px;height:24px;background:#b5b5b5"></div>
<div style="left:708px;top:293px;width:1px;height:24px;background:#b5b5b5"></div>
<div style="left:721px;top:293px;width:1px;height:24px;background:#b5b5b5"></div>
<div style="left:781px;top:293px;width:1px;height:24px;background:#b5b5b5"></div>
<div style="left:841px;top:293px;width:1px;height:24px;background:#b5b5b5"></div>
<div style="left:854px;top:293px;width:1px;height:24px;background:#b5b5b5"></div>
<div style="left:940px;top:293px;width:1px;height:24px;background:#b5b5b5"></div>
<div style="left:1008px;top:293px;width:1px;height:24px;background:#b5b5b5"></div>
<div style="left:1069px;top:293px;width:1px;height:24px;background:#b5b5b5"></div>
<div style="left:1130px;top:293px;width:1px;height:24px;background:#b5b5b5"></div>
<div style="left:1191px;top:293px;width:1px;height:24px;background:#b5b5b5"></div>
<div style="left:1271px;top:293px;width:1px;height:24px;background:#b5b5b5"></div>
<div style="left:1351px;top:293px;width:1px;height:24px;background:#b5b5b5"></div>
<div style="left:1431px;top:293px;width:1px;height:24px;background:#b5b5b5"></div>
<div style="left:1511px;top:293px;width:1px;height:24px;background:#b5b5b5"></div>
<div style="left:1591px;top:293px;width:1px;height:24px;background:#b5b5b5"></div>
<div style="left:1671px;top:293px;width:1px;height:24px;background:#b5b5b5"></div>
<div style="left:1732px;top:293px;width:1px;height:24px;background:#b5b5b5"></div>
<div style="left:1768px;top:293px;width:1px;height:24px;background:#b5b5b5"></div>
<div style="left:1804px;top:293px;width:1px;height:24px;background:#b5b5b5"></div>
<div style="left:1840px;top:293px;width:1px;height:24px;background:#b5b5b5"></div>
<div style="left:1876px;top:293px;width:1px;height:24px;background:#b5b5b5"></div>
<div style="left:1912px;top:293px;width:1px;height:24px;background:#b5b5b5"></div>
<div style="left:1948px;top:293px;width:1px;height:24px;background:#b5b5b5"></div>
<div style="left:2009px;top:293px;width:1px;height:24px;background:#b5b5b5"></div>
<div style="left:2070px;top:293px;width:1px;height:24px;background:#b5b5b5"></div>
<div style="left:2131px;top:293px;width:1px;height:24px;background:#b5b5b5"></div>
<div style="left:40px;top:293px;width:1px;height:1503px;background:#b0b0b0"></div>
<span style="top:295px;font:normal normal 20px/20px 'Liberation Sans',sans-serif;color:#000;left:278.88px;">A</span>
<span style="top:295px;font:normal normal 20px/20px 'Liberation Sans',sans-serif;color:#217346;left:578.62px;">B</span>
<span style="top:295px;font:normal normal 20px/20px 'Liberation Sans',sans-serif;color:#000;left:667.12px;">C</span>
<div style="left:709px;top:294px;width:12px;height:23px;overflow:hidden"><span style="left:0px;top:1px;font:20px/20px 'Liberation Sans',sans-serif;color:#000">D</span></div>
<span style="top:295px;font:normal normal 20px/20px 'Liberation Sans',sans-serif;color:#000;left:744.50px;">E</span>
<span style="top:295px;font:normal normal 20px/20px 'Liberation Sans',sans-serif;color:#000;left:805.00px;">F</span>
<div style="left:842px;top:294px;width:12px;height:23px;overflow:hidden"><span style="left:0px;top:1px;font:20px/20px 'Liberation Sans',sans-serif;color:#000">G</span></div>
<span style="top:295px;font:normal normal 20px/20px 'Liberation Sans',sans-serif;color:#000;left:890.38px;">H</span>
<span style="top:295px;font:normal normal 20px/20px 'Liberation Sans',sans-serif;color:#000;left:971.75px;">I</span>
<span style="top:295px;font:normal normal 20px/20px 'Liberation Sans',sans-serif;color:#000;left:1034.62px;">J</span>
<span style="top:295px;font:normal normal 20px/20px 'Liberation Sans',sans-serif;color:#000;left:1092.75px;">K</span>
<span style="top:295px;font:normal normal 20px/20px 'Liberation Sans',sans-serif;color:#000;left:1155.00px;">L</span>
<span style="top:295px;font:normal normal 20px/20px 'Liberation Sans',sans-serif;color:#000;left:1223.25px;">M</span>
<span style="top:295px;font:normal normal 20px/20px 'Liberation Sans',sans-serif;color:#000;left:1304.38px;">N</span>
<span style="top:295px;font:normal normal 20px/20px 'Liberation Sans',sans-serif;color:#000;left:1383.75px;">O</span>
<span style="top:295px;font:normal normal 20px/20px 'Liberation Sans',sans-serif;color:#000;left:1464.62px;">P</span>
<span style="top:295px;font:normal normal 20px/20px 'Liberation Sans',sans-serif;color:#000;left:1543.62px;">Q</span>
<span style="top:295px;font:normal normal 20px/20px 'Liberation Sans',sans-serif;color:#000;left:1624.00px;">R</span>
<span style="top:295px;font:normal normal 20px/20px 'Liberation Sans',sans-serif;color:#000;left:1695.25px;">S</span>
<span style="top:295px;font:normal normal 20px/20px 'Liberation Sans',sans-serif;color:#000;left:1744.38px;">T</span>
<span style="top:295px;font:normal normal 20px/20px 'Liberation Sans',sans-serif;color:#000;left:1779.25px;">U</span>
<span style="top:295px;font:normal normal 20px/20px 'Liberation Sans',sans-serif;color:#000;left:1815.88px;">V</span>
<span style="top:295px;font:normal normal 20px/20px 'Liberation Sans',sans-serif;color:#000;left:1849.12px;">W</span>
<span style="top:295px;font:normal normal 20px/20px 'Liberation Sans',sans-serif;color:#000;left:1887.88px;">X</span>
<span style="top:295px;font:normal normal 20px/20px 'Liberation Sans',sans-serif;color:#000;left:1923.88px;">Y</span>
<span style="top:295px;font:normal normal 20px/20px 'Liberation Sans',sans-serif;color:#000;left:1973.00px;">Z</span>
<span style="top:295px;font:normal normal 20px/20px 'Liberation Sans',sans-serif;color:#000;left:2026.75px;">AA</span>
<span style="top:295px;font:normal normal 20px/20px 'Liberation Sans',sans-serif;color:#000;left:2088.25px;">AB</span>
<span style="top:295px;font:normal normal 20px/20px 'Liberation Sans',sans-serif;color:#000;left:2148.50px;">AC</span>
<svg style="left:20px;top:297px;" width="18" height="18" viewBox="0 0 18 18"><path d="M17 0 L17 17 L0 17 Z" fill="#b4b4b4"/></svg>
<div style="left:1px;top:343px;width:39px;height:1px;background:#b5b5b5"></div>
<span style="top:320px;font:normal normal 21px/21px 'Liberation Sans',sans-serif;color:#000;left:14.38px;">1</span>
<div style="left:1px;top:369px;width:39px;height:1px;background:#b5b5b5"></div>
<span style="top:346px;font:normal normal 21px/21px 'Liberation Sans',sans-serif;color:#000;left:14.62px;">2</span>
<div style="left:1px;top:394px;width:39px;height:1px;background:#b5b5b5"></div>
<span style="top:372px;font:normal normal 21px/21px 'Liberation Sans',sans-serif;color:#000;left:14.75px;">3</span>
<div style="left:1px;top:419px;width:39px;height:1px;background:#b5b5b5"></div>
<span style="top:397px;font:normal normal 21px/21px 'Liberation Sans',sans-serif;color:#000;left:14.75px;">4</span>
<div style="left:1px;top:444px;width:39px;height:1px;background:#b5b5b5"></div>
<span style="top:422px;font:normal normal 21px/21px 'Liberation Sans',sans-serif;color:#000;left:14.75px;">5</span>
<div style="left:1px;top:469px;width:39px;height:1px;background:#b5b5b5"></div>
<span style="top:447px;font:normal normal 21px/21px 'Liberation Sans',sans-serif;color:#000;left:14.62px;">6</span>
<div style="left:1px;top:494px;width:39px;height:1px;background:#b5b5b5"></div>
<span style="top:472px;font:normal normal 21px/21px 'Liberation Sans',sans-serif;color:#000;left:14.62px;">7</span>
<div style="left:1px;top:519px;width:39px;height:1px;background:#b5b5b5"></div>
<span style="top:497px;font:normal normal 21px/21px 'Liberation Sans',sans-serif;color:#000;left:14.62px;">8</span>
<div style="left:1px;top:544px;width:39px;height:1px;background:#b5b5b5"></div>
<span style="top:522px;font:normal normal 21px/21px 'Liberation Sans',sans-serif;color:#000;left:14.62px;">9</span>
<div style="left:1px;top:570px;width:39px;height:1px;background:#b5b5b5"></div>
<span style="top:547px;font:normal normal 21px/21px 'Liberation Sans',sans-serif;color:#000;left:8.38px;">10</span>
<div style="left:1px;top:596px;width:39px;height:1px;background:#b5b5b5"></div>
<span style="top:573px;font:normal normal 21px/21px 'Liberation Sans',sans-serif;color:#000;left:9.38px;">11</span>
<div style="left:1px;top:622px;width:39px;height:1px;background:#b5b5b5"></div>
<span style="top:599px;font:normal normal 21px/21px 'Liberation Sans',sans-serif;color:#000;left:8.50px;">12</span>
<div style="left:1px;top:648px;width:39px;height:1px;background:#b5b5b5"></div>
<span style="top:625px;font:normal normal 21px/21px 'Liberation Sans',sans-serif;color:#000;left:8.50px;">13</span>
<div style="left:1px;top:674px;width:39px;height:1px;background:#b5b5b5"></div>
<span style="top:651px;font:normal normal 21px/21px 'Liberation Sans',sans-serif;color:#000;left:8.38px;">14</span>
<div style="left:1px;top:700px;width:39px;height:1px;background:#b5b5b5"></div>
<span style="top:677px;font:normal normal 21px/21px 'Liberation Sans',sans-serif;color:#000;left:8.50px;">15</span>
<div style="left:1px;top:726px;width:39px;height:1px;background:#b5b5b5"></div>
<span style="top:703px;font:normal normal 21px/21px 'Liberation Sans',sans-serif;color:#000;left:8.50px;">16</span>
<div style="left:1px;top:752px;width:39px;height:1px;background:#b5b5b5"></div>
<span style="top:729px;font:normal normal 21px/21px 'Liberation Sans',sans-serif;color:#000;left:8.50px;">17</span>
<div style="left:1px;top:778px;width:39px;height:1px;background:#b5b5b5"></div>
<span style="top:755px;font:normal normal 21px/21px 'Liberation Sans',sans-serif;color:#000;left:8.50px;">18</span>
<div style="left:1px;top:804px;width:39px;height:1px;background:#b5b5b5"></div>
<span style="top:781px;font:normal normal 21px/21px 'Liberation Sans',sans-serif;color:#000;left:8.50px;">19</span>
<div style="left:1px;top:830px;width:39px;height:1px;background:#b5b5b5"></div>
<span style="top:807px;font:normal normal 21px/21px 'Liberation Sans',sans-serif;color:#000;left:8.62px;">20</span>
<div style="left:1px;top:855px;width:39px;height:1px;background:#b5b5b5"></div>
<span style="top:833px;font:normal normal 21px/21px 'Liberation Sans',sans-serif;color:#000;left:8.75px;">21</span>
<div style="left:1px;top:881px;width:39px;height:1px;background:#b5b5b5"></div>
<span style="top:858px;font:normal normal 21px/21px 'Liberation Sans',sans-serif;color:#000;left:8.75px;">22</span>
<div style="left:1px;top:907px;width:39px;height:1px;background:#b5b5b5"></div>
<span style="top:884px;font:normal normal 21px/21px 'Liberation Sans',sans-serif;color:#000;left:8.75px;">23</span>
<div style="left:1px;top:932px;width:39px;height:1px;background:#b5b5b5"></div>
<span style="top:910px;font:normal normal 21px/21px 'Liberation Sans',sans-serif;color:#000;left:8.62px;">24</span>
<div style="left:1px;top:957px;width:39px;height:1px;background:#b5b5b5"></div>
<span style="top:935px;font:normal normal 21px/21px 'Liberation Sans',sans-serif;color:#000;left:8.75px;">25</span>
<div style="left:1px;top:982px;width:39px;height:1px;background:#b5b5b5"></div>
<span style="top:960px;font:normal normal 21px/21px 'Liberation Sans',sans-serif;color:#000;left:8.75px;">26</span>
<div style="left:1px;top:1008px;width:39px;height:1px;background:#b5b5b5"></div>
<span style="top:985px;font:normal normal 21px/21px 'Liberation Sans',sans-serif;color:#000;left:8.75px;">27</span>
<div style="left:1px;top:1034px;width:39px;height:1px;background:#b5b5b5"></div>
<span style="top:1011px;font:normal normal 21px/21px 'Liberation Sans',sans-serif;color:#000;left:8.75px;">28</span>
<div style="left:1px;top:1060px;width:39px;height:1px;background:#b5b5b5"></div>
<span style="top:1037px;font:normal normal 21px/21px 'Liberation Sans',sans-serif;color:#000;left:8.75px;">29</span>
<div style="left:1px;top:1085px;width:39px;height:1px;background:#b5b5b5"></div>
<span style="top:1063px;font:normal normal 21px/21px 'Liberation Sans',sans-serif;color:#000;left:8.75px;">30</span>
<div style="left:1px;top:1110px;width:39px;height:1px;background:#b5b5b5"></div>
<span style="top:1088px;font:normal normal 21px/21px 'Liberation Sans',sans-serif;color:#000;left:8.88px;">31</span>
<div style="left:1px;top:1136px;width:39px;height:1px;background:#b5b5b5"></div>
<span style="top:1113px;font:normal normal 21px/21px 'Liberation Sans',sans-serif;color:#000;left:8.88px;">32</span>
<div style="left:1px;top:1162px;width:39px;height:1px;background:#b5b5b5"></div>
<span style="top:1139px;font:normal normal 21px/21px 'Liberation Sans',sans-serif;color:#000;left:8.88px;">33</span>
<div style="left:1px;top:1188px;width:39px;height:1px;background:#b5b5b5"></div>
<span style="top:1165px;font:normal normal 21px/21px 'Liberation Sans',sans-serif;color:#000;left:8.75px;">34</span>
<div style="left:1px;top:1214px;width:39px;height:1px;background:#b5b5b5"></div>
<span style="top:1191px;font:normal normal 21px/21px 'Liberation Sans',sans-serif;color:#000;left:8.88px;">35</span>
<div style="left:1px;top:1239px;width:39px;height:1px;background:#b5b5b5"></div>
<span style="top:1217px;font:normal normal 21px/21px 'Liberation Sans',sans-serif;color:#000;left:8.88px;">36</span>
<div style="left:1px;top:1265px;width:39px;height:1px;background:#b5b5b5"></div>
<span style="top:1242px;font:normal normal 21px/21px 'Liberation Sans',sans-serif;color:#000;left:8.88px;">37</span>
<div style="left:1px;top:1291px;width:39px;height:1px;background:#b5b5b5"></div>
<span style="top:1268px;font:normal normal 21px/21px 'Liberation Sans',sans-serif;color:#000;left:8.88px;">38</span>
<div style="left:1px;top:1317px;width:39px;height:1px;background:#b5b5b5"></div>
<span style="top:1294px;font:normal normal 21px/21px 'Liberation Sans',sans-serif;color:#000;left:8.88px;">39</span>
<div style="left:1px;top:1343px;width:39px;height:1px;background:#b5b5b5"></div>
<span style="top:1320px;font:normal normal 21px/21px 'Liberation Sans',sans-serif;color:#000;left:8.88px;">40</span>
<div style="left:1px;top:1369px;width:39px;height:1px;background:#b5b5b5"></div>
<span style="top:1346px;font:normal normal 21px/21px 'Liberation Sans',sans-serif;color:#000;left:9.00px;">41</span>
<div style="left:1px;top:1395px;width:39px;height:1px;background:#b5b5b5"></div>
<span style="top:1372px;font:normal normal 21px/21px 'Liberation Sans',sans-serif;color:#000;left:9.00px;">42</span>
<div style="left:1px;top:1421px;width:39px;height:1px;background:#b5b5b5"></div>
<span style="top:1398px;font:normal normal 21px/21px 'Liberation Sans',sans-serif;color:#000;left:9.00px;">43</span>
<div style="left:1px;top:1446px;width:39px;height:1px;background:#b5b5b5"></div>
<span style="top:1424px;font:normal normal 21px/21px 'Liberation Sans',sans-serif;color:#000;left:8.88px;">44</span>
<div style="left:1px;top:1472px;width:39px;height:1px;background:#b5b5b5"></div>
<span style="top:1449px;font:normal normal 21px/21px 'Liberation Sans',sans-serif;color:#000;left:9.00px;">45</span>
<div style="left:1px;top:1498px;width:39px;height:1px;background:#b5b5b5"></div>
<span style="top:1475px;font:normal normal 21px/21px 'Liberation Sans',sans-serif;color:#000;left:9.00px;">46</span>
<div style="left:1px;top:1524px;width:39px;height:1px;background:#b5b5b5"></div>
<span style="top:1501px;font:normal normal 21px/21px 'Liberation Sans',sans-serif;color:#000;left:9.00px;">47</span>
<div style="left:1px;top:1550px;width:39px;height:1px;background:#b5b5b5"></div>
<span style="top:1527px;font:normal normal 21px/21px 'Liberation Sans',sans-serif;color:#000;left:9.00px;">48</span>
<div style="left:1px;top:1575px;width:39px;height:1px;background:#b5b5b5"></div>
<span style="top:1553px;font:normal normal 21px/21px 'Liberation Sans',sans-serif;color:#000;left:9.00px;">49</span>
<div style="left:1px;top:1600px;width:39px;height:1px;background:#b5b5b5"></div>
<span style="top:1578px;font:normal normal 21px/21px 'Liberation Sans',sans-serif;color:#000;left:8.75px;">50</span>
<div style="left:1px;top:1626px;width:39px;height:1px;background:#b5b5b5"></div>
<span style="top:1603px;font:normal normal 21px/21px 'Liberation Sans',sans-serif;color:#000;left:8.88px;">51</span>
<div style="left:1px;top:1627px;width:39px;height:24px;background:#d2d2d2;"></div>
<div style="left:39px;top:1627px;width:2px;height:24px;background:#217346"></div>
<div style="left:1px;top:1651px;width:39px;height:1px;background:#b5b5b5"></div>
<span style="top:1629px;font:normal normal 21px/21px 'Liberation Sans',sans-serif;color:#217346;left:8.88px;">52</span>
<div style="left:1px;top:1676px;width:39px;height:1px;background:#b5b5b5"></div>
<span style="top:1654px;font:normal normal 21px/21px 'Liberation Sans',sans-serif;color:#000;left:8.88px;">53</span>
<div style="left:1px;top:1701px;width:39px;height:1px;background:#b5b5b5"></div>
<span style="top:1679px;font:normal normal 21px/21px 'Liberation Sans',sans-serif;color:#000;left:8.75px;">54</span>
<div style="left:1px;top:1726px;width:39px;height:1px;background:#b5b5b5"></div>
<span style="top:1704px;font:normal normal 21px/21px 'Liberation Sans',sans-serif;color:#000;left:8.88px;">55</span>
<div style="left:1px;top:1751px;width:39px;height:1px;background:#b5b5b5"></div>
<span style="top:1729px;font:normal normal 21px/21px 'Liberation Sans',sans-serif;color:#000;left:8.88px;">56</span>
<div style="left:1px;top:1776px;width:39px;height:1px;background:#b5b5b5"></div>
<span style="top:1754px;font:normal normal 21px/21px 'Liberation Sans',sans-serif;color:#000;left:8.88px;">57</span>
<div style="left:1px;top:1777px;width:39px;height:19px;overflow:hidden"><span style="left:0;width:41px;text-align:center;top:2px;font:21px/21px 'Liberation Sans',sans-serif;color:#000">58</span></div>
<div style="left:8px;top:243px;width:150px;height:33px;border:1px solid #c6c6c6;background:#fff"></div>
<span style="top:252px;font:normal normal 18.5px/18.5px 'Liberation Sans',sans-serif;color:#222;left:14.96px;transform:scaleX(1.0244);transform-origin:0 0;">B52</span>
<svg style="left:142px;top:258px;" width="7" height="4" viewBox="0 0 7 4"><path d="M0 0 L7 0 L3.5 4 Z" fill="#777"/></svg>
<div style="left:180px;top:252px;width:3px;height:3px;background:#b0b0b0;"></div>
<div style="left:180px;top:258px;width:3px;height:3px;background:#b0b0b0;"></div>
<div style="left:180px;top:264px;width:3px;height:3px;background:#b0b0b0;"></div>
<div style="left:205px;top:243px;width:162px;height:33px;border:1px solid #c6c6c6;background:#fff"></div>
<svg style="left:224px;top:253px;" width="17" height="16" viewBox="0 0 17 16"><path d="M1 1 L16 15 M16 1 L1 15" stroke="#b9b9b9" stroke-width="1.8"/></svg>
<svg style="left:278px;top:253px;" width="19" height="16" viewBox="0 0 19 16"><path d="M1.5 9 L7 14 L17.5 1.5" stroke="#c4c4c4" stroke-width="2.6" fill="none"/></svg>
<span style="top:247.5px;font:italic bold 23px/23px 'Liberation Serif',serif;color:#6a6a6a;left:331.00px;transform:scaleX(1.0526);transform-origin:0 0;">f</span>
<span style="top:252.5px;font:italic bold 17px/17px 'Liberation Serif',serif;color:#6a6a6a;left:340.27px;transform:scaleX(1.0909);transform-origin:0 0;">x</span>
<div style="left:373px;top:243px;width:1840px;height:33px;border:1px solid #c6c6c6;background:#fff"></div>
<span style="top:252px;font:normal normal 18.5px/18.5px 'Liberation Sans',sans-serif;color:#222;left:390.45px;transform:scaleX(1.0057);transform-origin:0 0;">5</span>
<svg style="left:2196px;top:258px;" width="12" height="8" viewBox="0 0 12 8"><path d="M1 1 L6 6 L11 1" fill="none" stroke="#777" stroke-width="2.6"/></svg>
<div style="left:41px;top:545px;width:967px;height:25px;background:#ffff00;"></div>
<div style="left:531px;top:571px;width:109px;height:233px;background:#ffff00;"></div>
<div style="left:41px;top:805px;width:967px;height:25px;background:#00ff00;"></div>
<div style="left:41px;top:1111px;width:967px;height:25px;background:#00ff00;"></div>
<div style="left:531px;top:1137px;width:109px;height:77px;background:#00ff00;"></div>
<div style="left:531px;top:1215px;width:477px;height:24px;background:#d9d9d9;"></div>
<div style="left:41px;top:1240px;width:967px;height:25px;background:#00ff00;"></div>
<div style="left:531px;top:1266px;width:109px;height:103px;background:#00ff00;"></div>
<div style="left:531px;top:1370px;width:109px;height:25px;background:#ffff00;"></div>
<div style="left:531px;top:1396px;width:109px;height:25px;background:#00ff00;"></div>
<div style="left:531px;top:1422px;width:477px;height:24px;background:#d9d9d9;"></div>
<div style="left:41px;top:1447px;width:967px;height:25px;background:#00ff00;"></div>
<div style="left:531px;top:1473px;width:109px;height:77px;background:#00ff00;"></div>
<div style="left:531px;top:1627px;width:109px;height:24px;background:#ffff00;"></div>
<div style="left:531px;top:1652px;width:109px;height:124px;background:#00ff00;"></div>
<div style="left:41px;top:419px;width:968px;height:1px;background:#000"></div>
<div style="left:41px;top:519px;width:968px;height:1px;background:#000"></div>
<div style="left:1008px;top:419px;width:1px;height:101px;background:#000"></div>
<div style="left:41px;top:544px;width:968px;height:1px;background:#000"></div>
<div style="left:41px;top:570px;width:968px;height:1px;background:#000"></div>
<div style="left:1008px;top:544px;width:1px;height:27px;background:#000"></div>
<div style="left:41px;top:570px;width:490px;height:1px;background:#000"></div>
<div style="left:41px;top:596px;width:490px;height:1px;background:#000"></div>
<div style="left:530px;top:570px;width:1px;height:27px;background:#000"></div>
<div style="left:530px;top:570px;width:111px;height:1px;background:#000"></div>
<div style="left:530px;top:596px;width:111px;height:1px;background:#000"></div>
<div style="left:530px;top:570px;width:1px;height:27px;background:#000"></div>
<div style="left:640px;top:570px;width:1px;height:27px;background:#000"></div>
<div style="left:41px;top:596px;width:490px;height:1px;background:#000"></div>
<div style="left:41px;top:622px;width:490px;height:1px;background:#000"></div>
<div style="left:530px;top:596px;width:1px;height:27px;background:#000"></div>
<div style="left:530px;top:596px;width:111px;height:1px;background:#000"></div>
<div style="left:530px;top:622px;width:111px;height:1px;background:#000"></div>
<div style="left:530px;top:596px;width:1px;height:27px;background:#000"></div>
<div style="left:640px;top:596px;width:1px;height:27px;background:#000"></div>
<div style="left:41px;top:622px;width:490px;height:1px;background:#000"></div>
<div style="left:41px;top:648px;width:490px;height:1px;background:#000"></div>
<div style="left:530px;top:622px;width:1px;height:27px;background:#000"></div>
<div style="left:530px;top:622px;width:111px;height:1px;background:#000"></div>
<div style="left:530px;top:648px;width:111px;height:1px;background:#000"></div>
<div style="left:530px;top:622px;width:1px;height:27px;background:#000"></div>
<div style="left:640px;top:622px;width:1px;height:27px;background:#000"></div>
<div style="left:41px;top:648px;width:490px;height:1px;background:#000"></div>
<div style="left:41px;top:674px;width:490px;height:1px;background:#000"></div>
<div style="left:530px;top:648px;width:1px;height:27px;background:#000"></div>
<div style="left:530px;top:648px;width:111px;height:1px;background:#000"></div>
<div style="left:530px;top:674px;width:111px;height:1px;background:#000"></div>
<div style="left:530px;top:648px;width:1px;height:27px;background:#000"></div>
<div style="left:640px;top:648px;width:1px;height:27px;background:#000"></div>
<div style="left:41px;top:674px;width:490px;height:1px;background:#000"></div>
<div style="left:41px;top:700px;width:490px;height:1px;background:#000"></div>
<div style="left:530px;top:674px;width:1px;height:27px;background:#000"></div>
<div style="left:530px;top:674px;width:111px;height:1px;background:#000"></div>
<div style="left:530px;top:700px;width:111px;height:1px;background:#000"></div>
<div style="left:530px;top:674px;width:1px;height:27px;background:#000"></div>
<div style="left:640px;top:674px;width:1px;height:27px;background:#000"></div>
<div style="left:41px;top:700px;width:490px;height:1px;background:#000"></div>
<div style="left:41px;top:726px;width:490px;height:1px;background:#000"></div>
<div style="left:530px;top:700px;width:1px;height:27px;background:#000"></div>
<div style="left:530px;top:700px;width:111px;height:1px;background:#000"></div>
<div style="left:530px;top:726px;width:111px;height:1px;background:#000"></div>
<div style="left:530px;top:700px;width:1px;height:27px;background:#000"></div>
<div style="left:640px;top:700px;width:1px;height:27px;background:#000"></div>
<div style="left:41px;top:726px;width:490px;height:1px;background:#000"></div>
<div style="left:41px;top:752px;width:490px;height:1px;background:#000"></div>
<div style="left:530px;top:726px;width:1px;height:27px;background:#000"></div>
<div style="left:530px;top:726px;width:111px;height:1px;background:#000"></div>
<div style="left:530px;top:752px;width:111px;height:1px;background:#000"></div>
<div style="left:530px;top:726px;width:1px;height:27px;background:#000"></div>
<div style="left:640px;top:726px;width:1px;height:27px;background:#000"></div>
<div style="left:41px;top:752px;width:490px;height:1px;background:#000"></div>
<div style="left:41px;top:778px;width:490px;height:1px;background:#000"></div>
<div style="left:530px;top:752px;width:1px;height:27px;background:#000"></div>
<div style="left:530px;top:752px;width:111px;height:1px;background:#000"></div>
<div style="left:530px;top:778px;width:111px;height:1px;background:#000"></div>
<div style="left:530px;top:752px;width:1px;height:27px;background:#000"></div>
<div style="left:640px;top:752px;width:1px;height:27px;background:#000"></div>
<div style="left:41px;top:778px;width:490px;height:1px;background:#000"></div>
<div style="left:41px;top:804px;width:490px;height:1px;background:#000"></div>
<div style="left:530px;top:778px;width:1px;height:27px;background:#000"></div>
<div style="left:530px;top:778px;width:111px;height:1px;background:#000"></div>
<div style="left:530px;top:804px;width:111px;height:1px;background:#000"></div>
<div style="left:530px;top:778px;width:1px;height:27px;background:#000"></div>
<div style="left:640px;top:778px;width:1px;height:27px;background:#000"></div>
<div style="left:640px;top:570px;width:69px;height:1px;background:#000"></div>
<div style="left:640px;top:596px;width:69px;height:1px;background:#000"></div>
<div style="left:640px;top:570px;width:1px;height:27px;background:#000"></div>
<div style="left:708px;top:570px;width:1px;height:27px;background:#000"></div>
<div style="left:640px;top:596px;width:69px;height:1px;background:#000"></div>
<div style="left:640px;top:622px;width:69px;height:1px;background:#000"></div>
<div style="left:640px;top:596px;width:1px;height:27px;background:#000"></div>
<div style="left:708px;top:596px;width:1px;height:27px;background:#000"></div>
<div style="left:640px;top:622px;width:69px;height:1px;background:#000"></div>
<div style="left:640px;top:648px;width:69px;height:1px;background:#000"></div>
<div style="left:640px;top:622px;width:1px;height:27px;background:#000"></div>
<div style="left:708px;top:622px;width:1px;height:27px;background:#000"></div>
<div style="left:640px;top:648px;width:69px;height:1px;background:#000"></div>
<div style="left:640px;top:674px;width:69px;height:1px;background:#000"></div>
<div style="left:640px;top:648px;width:1px;height:27px;background:#000"></div>
<div style="left:708px;top:648px;width:1px;height:27px;background:#000"></div>
<div style="left:640px;top:674px;width:69px;height:1px;background:#000"></div>
<div style="left:640px;top:700px;width:69px;height:1px;background:#000"></div>
<div style="left:640px;top:674px;width:1px;height:27px;background:#000"></div>
<div style="left:708px;top:674px;width:1px;height:27px;background:#000"></div>
<div style="left:640px;top:752px;width:69px;height:1px;background:#000"></div>
<div style="left:640px;top:778px;width:69px;height:1px;background:#000"></div>
<div style="left:640px;top:752px;width:1px;height:27px;background:#000"></div>
<div style="left:708px;top:752px;width:1px;height:27px;background:#000"></div>
<div style="left:640px;top:778px;width:69px;height:1px;background:#000"></div>
<div style="left:640px;top:804px;width:69px;height:1px;background:#000"></div>
<div style="left:640px;top:778px;width:1px;height:27px;background:#000"></div>
<div style="left:708px;top:778px;width:1px;height:27px;background:#000"></div>
<div style="left:854px;top:570px;width:87px;height:1px;background:#000"></div>
<div style="left:854px;top:596px;width:87px;height:1px;background:#000"></div>
<div style="left:854px;top:570px;width:1px;height:27px;background:#000"></div>
<div style="left:940px;top:570px;width:1px;height:27px;background:#000"></div>
<div style="left:940px;top:570px;width:69px;height:1px;background:#000"></div>
<div style="left:940px;top:596px;width:69px;height:1px;background:#000"></div>
<div style="left:940px;top:570px;width:1px;height:27px;background:#000"></div>
<div style="left:1008px;top:570px;width:1px;height:27px;background:#000"></div>
<div style="left:854px;top:596px;width:87px;height:1px;background:#000"></div>
<div style="left:854px;top:622px;width:87px;height:1px;background:#000"></div>
<div style="left:854px;top:596px;width:1px;height:27px;background:#000"></div>
<div style="left:940px;top:596px;width:1px;height:27px;background:#000"></div>
<div style="left:940px;top:596px;width:69px;height:1px;background:#000"></div>
<div style="left:940px;top:622px;width:69px;height:1px;background:#000"></div>
<div style="left:940px;top:596px;width:1px;height:27px;background:#000"></div>
<div style="left:1008px;top:596px;width:1px;height:27px;background:#000"></div>
<div style="left:854px;top:622px;width:87px;height:1px;background:#000"></div>
<div style="left:854px;top:648px;width:87px;height:1px;background:#000"></div>
<div style="left:854px;top:622px;width:1px;height:27px;background:#000"></div>
<div style="left:940px;top:622px;width:1px;height:27px;background:#000"></div>
<div style="left:940px;top:622px;width:69px;height:1px;background:#000"></div>
<div style="left:940px;top:648px;width:69px;height:1px;background:#000"></div>
<div style="left:940px;top:622px;width:1px;height:27px;background:#000"></div>
<div style="left:1008px;top:622px;width:1px;height:27px;background:#000"></div>
<div style="left:854px;top:648px;width:87px;height:1px;background:#000"></div>
<div style="left:854px;top:674px;width:87px;height:1px;background:#000"></div>
<div style="left:854px;top:648px;width:1px;height:27px;background:#000"></div>
<div style="left:940px;top:648px;width:1px;height:27px;background:#000"></div>
<div style="left:940px;top:648px;width:69px;height:1px;background:#000"></div>
<div style="left:940px;top:674px;width:69px;height:1px;background:#000"></div>
<div style="left:940px;top:648px;width:1px;height:27px;background:#000"></div>
<div style="left:1008px;top:648px;width:1px;height:27px;background:#000"></div>
<div style="left:854px;top:674px;width:87px;height:1px;background:#000"></div>
<div style="left:854px;top:700px;width:87px;height:1px;background:#000"></div>
<div style="left:854px;top:674px;width:1px;height:27px;background:#000"></div>
<div style="left:940px;top:674px;width:1px;height:27px;background:#000"></div>
<div style="left:940px;top:674px;width:69px;height:1px;background:#000"></div>
<div style="left:940px;top:700px;width:69px;height:1px;background:#000"></div>
<div style="left:940px;top:674px;width:1px;height:27px;background:#000"></div>
<div style="left:1008px;top:674px;width:1px;height:27px;background:#000"></div>
<div style="left:854px;top:752px;width:87px;height:1px;background:#000"></div>
<div style="left:854px;top:778px;width:87px;height:1px;background:#000"></div>
<div style="left:854px;top:752px;width:1px;height:27px;background:#000"></div>
<div style="left:940px;top:752px;width:1px;height:27px;background:#000"></div>
<div style="left:940px;top:752px;width:69px;height:1px;background:#000"></div>
<div style="left:940px;top:778px;width:69px;height:1px;background:#000"></div>
<div style="left:940px;top:752px;width:1px;height:27px;background:#000"></div>
<div style="left:1008px;top:752px;width:1px;height:27px;background:#000"></div>
<div style="left:854px;top:778px;width:87px;height:1px;background:#000"></div>
<div style="left:854px;top:804px;width:87px;height:1px;background:#000"></div>
<div style="left:854px;top:778px;width:1px;height:27px;background:#000"></div>
<div style="left:940px;top:778px;width:1px;height:27px;background:#000"></div>
<div style="left:940px;top:778px;width:69px;height:1px;background:#000"></div>
<div style="left:940px;top:804px;width:69px;height:1px;background:#000"></div>
<div style="left:940px;top:778px;width:1px;height:27px;background:#000"></div>
<div style="left:1008px;top:778px;width:1px;height:27px;background:#000"></div>
<div style="left:708px;top:700px;width:147px;height:1px;background:#000"></div>
<div style="left:721px;top:752px;width:61px;height:1px;background:#000"></div>
<div style="left:721px;top:778px;width:61px;height:1px;background:#000"></div>
<div style="left:721px;top:752px;width:1px;height:27px;background:#000"></div>
<div style="left:781px;top:752px;width:1px;height:27px;background:#000"></div>
<div style="left:781px;top:752px;width:61px;height:1px;background:#000"></div>
<div style="left:781px;top:778px;width:61px;height:1px;background:#000"></div>
<div style="left:781px;top:752px;width:1px;height:27px;background:#000"></div>
<div style="left:841px;top:752px;width:1px;height:27px;background:#000"></div>
<div style="left:41px;top:804px;width:968px;height:1px;background:#000"></div>
<div style="left:41px;top:830px;width:968px;height:1px;background:#000"></div>
<div style="left:1008px;top:804px;width:1px;height:27px;background:#000"></div>
<div style="left:41px;top:830px;width:490px;height:1px;background:#000"></div>
<div style="left:41px;top:855px;width:490px;height:1px;background:#000"></div>
<div style="left:530px;top:830px;width:1px;height:26px;background:#000"></div>
<div style="left:530px;top:830px;width:111px;height:1px;background:#000"></div>
<div style="left:530px;top:855px;width:111px;height:1px;background:#000"></div>
<div style="left:530px;top:830px;width:1px;height:26px;background:#000"></div>
<div style="left:640px;top:830px;width:1px;height:26px;background:#000"></div>
<div style="left:640px;top:830px;width:69px;height:1px;background:#000"></div>
<div style="left:640px;top:855px;width:69px;height:1px;background:#000"></div>
<div style="left:640px;top:830px;width:1px;height:26px;background:#000"></div>
<div style="left:708px;top:830px;width:1px;height:26px;background:#000"></div>
<div style="left:41px;top:855px;width:490px;height:1px;background:#000"></div>
<div style="left:41px;top:881px;width:490px;height:1px;background:#000"></div>
<div style="left:530px;top:855px;width:1px;height:27px;background:#000"></div>
<div style="left:530px;top:855px;width:111px;height:1px;background:#000"></div>
<div style="left:530px;top:881px;width:111px;height:1px;background:#000"></div>
<div style="left:530px;top:855px;width:1px;height:27px;background:#000"></div>
<div style="left:640px;top:855px;width:1px;height:27px;background:#000"></div>
<div style="left:640px;top:855px;width:69px;height:1px;background:#000"></div>
<div style="left:640px;top:881px;width:69px;height:1px;background:#000"></div>
<div style="left:640px;top:855px;width:1px;height:27px;background:#000"></div>
<div style="left:708px;top:855px;width:1px;height:27px;background:#000"></div>
<div style="left:41px;top:881px;width:490px;height:1px;background:#000"></div>
<div style="left:41px;top:907px;width:490px;height:1px;background:#000"></div>
<div style="left:530px;top:881px;width:1px;height:27px;background:#000"></div>
<div style="left:530px;top:881px;width:111px;height:1px;background:#000"></div>
<div style="left:530px;top:907px;width:111px;height:1px;background:#000"></div>
<div style="left:530px;top:881px;width:1px;height:27px;background:#000"></div>
<div style="left:640px;top:881px;width:1px;height:27px;background:#000"></div>
<div style="left:640px;top:881px;width:69px;height:1px;background:#000"></div>
<div style="left:640px;top:907px;width:69px;height:1px;background:#000"></div>
<div style="left:640px;top:881px;width:1px;height:27px;background:#000"></div>
<div style="left:708px;top:881px;width:1px;height:27px;background:#000"></div>
<div style="left:41px;top:907px;width:490px;height:1px;background:#000"></div>
<div style="left:41px;top:932px;width:490px;height:1px;background:#000"></div>
<div style="left:530px;top:907px;width:1px;height:26px;background:#000"></div>
<div style="left:530px;top:907px;width:111px;height:1px;background:#000"></div>
<div style="left:530px;top:932px;width:111px;height:1px;background:#000"></div>
<div style="left:530px;top:907px;width:1px;height:26px;background:#000"></div>
<div style="left:640px;top:907px;width:1px;height:26px;background:#000"></div>
<div style="left:640px;top:907px;width:69px;height:1px;background:#000"></div>
<div style="left:640px;top:932px;width:69px;height:1px;background:#000"></div>
<div style="left:640px;top:907px;width:1px;height:26px;background:#000"></div>
<div style="left:708px;top:907px;width:1px;height:26px;background:#000"></div>
<div style="left:41px;top:932px;width:490px;height:1px;background:#000"></div>
<div style="left:41px;top:957px;width:490px;height:1px;background:#000"></div>
<div style="left:530px;top:932px;width:1px;height:26px;background:#000"></div>
<div style="left:530px;top:932px;width:111px;height:1px;background:#000"></div>
<div style="left:530px;top:957px;width:111px;height:1px;background:#000"></div>
<div style="left:530px;top:932px;width:1px;height:26px;background:#000"></div>
<div style="left:640px;top:932px;width:1px;height:26px;background:#000"></div>
<div style="left:640px;top:932px;width:69px;height:1px;background:#000"></div>
<div style="left:640px;top:957px;width:69px;height:1px;background:#000"></div>
<div style="left:640px;top:932px;width:1px;height:26px;background:#000"></div>
<div style="left:708px;top:932px;width:1px;height:26px;background:#000"></div>
<div style="left:41px;top:957px;width:490px;height:1px;background:#000"></div>
<div style="left:41px;top:982px;width:490px;height:1px;background:#000"></div>
<div style="left:530px;top:957px;width:1px;height:26px;background:#000"></div>
<div style="left:530px;top:957px;width:111px;height:1px;background:#000"></div>
<div style="left:530px;top:982px;width:111px;height:1px;background:#000"></div>
<div style="left:530px;top:957px;width:1px;height:26px;background:#000"></div>
<div style="left:640px;top:957px;width:1px;height:26px;background:#000"></div>
<div style="left:640px;top:957px;width:69px;height:1px;background:#000"></div>
<div style="left:640px;top:982px;width:69px;height:1px;background:#000"></div>
<div style="left:640px;top:957px;width:1px;height:26px;background:#000"></div>
<div style="left:708px;top:957px;width:1px;height:26px;background:#000"></div>
<div style="left:41px;top:982px;width:490px;height:1px;background:#000"></div>
<div style="left:41px;top:1008px;width:490px;height:1px;background:#000"></div>
<div style="left:530px;top:982px;width:1px;height:27px;background:#000"></div>
<div style="left:530px;top:982px;width:111px;height:1px;background:#000"></div>
<div style="left:530px;top:1008px;width:111px;height:1px;background:#000"></div>
<div style="left:530px;top:982px;width:1px;height:27px;background:#000"></div>
<div style="left:640px;top:982px;width:1px;height:27px;background:#000"></div>
<div style="left:640px;top:982px;width:69px;height:1px;background:#000"></div>
<div style="left:640px;top:1008px;width:69px;height:1px;background:#000"></div>
<div style="left:640px;top:982px;width:1px;height:27px;background:#000"></div>
<div style="left:708px;top:982px;width:1px;height:27px;background:#000"></div>
<div style="left:41px;top:1008px;width:490px;height:1px;background:#000"></div>
<div style="left:41px;top:1034px;width:490px;height:1px;background:#000"></div>
<div style="left:530px;top:1008px;width:1px;height:27px;background:#000"></div>
<div style="left:530px;top:1008px;width:111px;height:1px;background:#000"></div>
<div style="left:530px;top:1034px;width:111px;height:1px;background:#000"></div>
<div style="left:530px;top:1008px;width:1px;height:27px;background:#000"></div>
<div style="left:640px;top:1008px;width:1px;height:27px;background:#000"></div>
<div style="left:640px;top:1008px;width:69px;height:1px;background:#000"></div>
<div style="left:640px;top:1034px;width:69px;height:1px;background:#000"></div>
<div style="left:640px;top:1008px;width:1px;height:27px;background:#000"></div>
<div style="left:708px;top:1008px;width:1px;height:27px;background:#000"></div>
<div style="left:41px;top:1034px;width:490px;height:1px;background:#000"></div>
<div style="left:41px;top:1060px;width:490px;height:1px;background:#000"></div>
<div style="left:530px;top:1034px;width:1px;height:27px;background:#000"></div>
<div style="left:530px;top:1034px;width:111px;height:1px;background:#000"></div>
<div style="left:530px;top:1060px;width:111px;height:1px;background:#000"></div>
<div style="left:530px;top:1034px;width:1px;height:27px;background:#000"></div>
<div style="left:640px;top:1034px;width:1px;height:27px;background:#000"></div>
<div style="left:640px;top:1034px;width:69px;height:1px;background:#000"></div>
<div style="left:640px;top:1060px;width:69px;height:1px;background:#000"></div>
<div style="left:640px;top:1034px;width:1px;height:27px;background:#000"></div>
<div style="left:708px;top:1034px;width:1px;height:27px;background:#000"></div>
<div style="left:41px;top:1060px;width:490px;height:1px;background:#000"></div>
<div style="left:41px;top:1085px;width:490px;height:1px;background:#000"></div>
<div style="left:530px;top:1060px;width:1px;height:26px;background:#000"></div>
<div style="left:530px;top:1060px;width:111px;height:1px;background:#000"></div>
<div style="left:530px;top:1085px;width:111px;height:1px;background:#000"></div>
<div style="left:530px;top:1060px;width:1px;height:26px;background:#000"></div>
<div style="left:640px;top:1060px;width:1px;height:26px;background:#000"></div>
<div style="left:640px;top:1060px;width:69px;height:1px;background:#000"></div>
<div style="left:640px;top:1085px;width:69px;height:1px;background:#000"></div>
<div style="left:640px;top:1060px;width:1px;height:26px;background:#000"></div>
<div style="left:708px;top:1060px;width:1px;height:26px;background:#000"></div>
<div style="left:41px;top:1085px;width:490px;height:1px;background:#000"></div>
<div style="left:41px;top:1110px;width:490px;height:1px;background:#000"></div>
<div style="left:530px;top:1085px;width:1px;height:26px;background:#000"></div>
<div style="left:530px;top:1085px;width:111px;height:1px;background:#000"></div>
<div style="left:530px;top:1110px;width:111px;height:1px;background:#000"></div>
<div style="left:530px;top:1085px;width:1px;height:26px;background:#000"></div>
<div style="left:640px;top:1085px;width:1px;height:26px;background:#000"></div>
<div style="left:640px;top:1085px;width:69px;height:1px;background:#000"></div>
<div style="left:640px;top:1110px;width:69px;height:1px;background:#000"></div>
<div style="left:640px;top:1085px;width:1px;height:26px;background:#000"></div>
<div style="left:708px;top:1085px;width:1px;height:26px;background:#000"></div>
<div style="left:721px;top:855px;width:61px;height:1px;background:#000"></div>
<div style="left:721px;top:881px;width:61px;height:1px;background:#000"></div>
<div style="left:721px;top:855px;width:1px;height:27px;background:#000"></div>
<div style="left:781px;top:855px;width:1px;height:27px;background:#000"></div>
<div style="left:781px;top:855px;width:61px;height:1px;background:#000"></div>
<div style="left:781px;top:881px;width:61px;height:1px;background:#000"></div>
<div style="left:781px;top:855px;width:1px;height:27px;background:#000"></div>
<div style="left:841px;top:855px;width:1px;height:27px;background:#000"></div>
<div style="left:721px;top:881px;width:61px;height:1px;background:#000"></div>
<div style="left:721px;top:907px;width:61px;height:1px;background:#000"></div>
<div style="left:721px;top:881px;width:1px;height:27px;background:#000"></div>
<div style="left:781px;top:881px;width:1px;height:27px;background:#000"></div>
<div style="left:781px;top:881px;width:61px;height:1px;background:#000"></div>
<div style="left:781px;top:907px;width:61px;height:1px;background:#000"></div>
<div style="left:781px;top:881px;width:1px;height:27px;background:#000"></div>
<div style="left:841px;top:881px;width:1px;height:27px;background:#000"></div>
<div style="left:854px;top:855px;width:87px;height:1px;background:#000"></div>
<div style="left:854px;top:881px;width:87px;height:1px;background:#000"></div>
<div style="left:854px;top:855px;width:1px;height:27px;background:#000"></div>
<div style="left:940px;top:855px;width:1px;height:27px;background:#000"></div>
<div style="left:940px;top:855px;width:69px;height:1px;background:#000"></div>
<div style="left:940px;top:881px;width:69px;height:1px;background:#000"></div>
<div style="left:940px;top:855px;width:1px;height:27px;background:#000"></div>
<div style="left:1008px;top:855px;width:1px;height:27px;background:#000"></div>
<div style="left:854px;top:881px;width:87px;height:1px;background:#000"></div>
<div style="left:854px;top:907px;width:87px;height:1px;background:#000"></div>
<div style="left:854px;top:881px;width:1px;height:27px;background:#000"></div>
<div style="left:940px;top:881px;width:1px;height:27px;background:#000"></div>
<div style="left:940px;top:881px;width:69px;height:1px;background:#000"></div>
<div style="left:940px;top:907px;width:69px;height:1px;background:#000"></div>
<div style="left:940px;top:881px;width:1px;height:27px;background:#000"></div>
<div style="left:1008px;top:881px;width:1px;height:27px;background:#000"></div>
<div style="left:854px;top:1060px;width:87px;height:1px;background:#000"></div>
<div style="left:854px;top:1085px;width:87px;height:1px;background:#000"></div>
<div style="left:854px;top:1060px;width:1px;height:26px;background:#000"></div>
<div style="left:940px;top:1060px;width:1px;height:26px;background:#000"></div>
<div style="left:940px;top:1060px;width:69px;height:1px;background:#000"></div>
<div style="left:940px;top:1085px;width:69px;height:1px;background:#000"></div>
<div style="left:940px;top:1060px;width:1px;height:26px;background:#000"></div>
<div style="left:1008px;top:1060px;width:1px;height:26px;background:#000"></div>
<div style="left:854px;top:1085px;width:87px;height:1px;background:#000"></div>
<div style="left:854px;top:1110px;width:87px;height:1px;background:#000"></div>
<div style="left:854px;top:1085px;width:1px;height:26px;background:#000"></div>
<div style="left:940px;top:1085px;width:1px;height:26px;background:#000"></div>
<div style="left:940px;top:1085px;width:69px;height:1px;background:#000"></div>
<div style="left:940px;top:1110px;width:69px;height:1px;background:#000"></div>
<div style="left:940px;top:1085px;width:1px;height:26px;background:#000"></div>
<div style="left:1008px;top:1085px;width:1px;height:26px;background:#000"></div>
<div style="left:721px;top:1085px;width:61px;height:1px;background:#000"></div>
<div style="left:721px;top:1110px;width:61px;height:1px;background:#000"></div>
<div style="left:721px;top:1085px;width:1px;height:26px;background:#000"></div>
<div style="left:781px;top:1085px;width:1px;height:26px;background:#000"></div>
<div style="left:781px;top:1085px;width:61px;height:1px;background:#000"></div>
<div style="left:781px;top:1110px;width:61px;height:1px;background:#000"></div>
<div style="left:781px;top:1085px;width:1px;height:26px;background:#000"></div>
<div style="left:841px;top:1085px;width:1px;height:26px;background:#000"></div>
<div style="left:41px;top:1110px;width:968px;height:1px;background:#000"></div>
<div style="left:41px;top:1136px;width:968px;height:1px;background:#000"></div>
<div style="left:1008px;top:1110px;width:1px;height:27px;background:#000"></div>
<div style="left:41px;top:1136px;width:490px;height:1px;background:#000"></div>
<div style="left:41px;top:1162px;width:490px;height:1px;background:#000"></div>
<div style="left:530px;top:1136px;width:1px;height:27px;background:#000"></div>
<div style="left:530px;top:1136px;width:111px;height:1px;background:#000"></div>
<div style="left:530px;top:1162px;width:111px;height:1px;background:#000"></div>
<div style="left:530px;top:1136px;width:1px;height:27px;background:#000"></div>
<div style="left:640px;top:1136px;width:1px;height:27px;background:#000"></div>
<div style="left:41px;top:1162px;width:490px;height:1px;background:#000"></div>
<div style="left:41px;top:1188px;width:490px;height:1px;background:#000"></div>
<div style="left:530px;top:1162px;width:1px;height:27px;background:#000"></div>
<div style="left:530px;top:1162px;width:111px;height:1px;background:#000"></div>
<div style="left:530px;top:1188px;width:111px;height:1px;background:#000"></div>
<div style="left:530px;top:1162px;width:1px;height:27px;background:#000"></div>
<div style="left:640px;top:1162px;width:1px;height:27px;background:#000"></div>
<div style="left:41px;top:1188px;width:490px;height:1px;background:#000"></div>
<div style="left:41px;top:1214px;width:490px;height:1px;background:#000"></div>
<div style="left:530px;top:1188px;width:1px;height:27px;background:#000"></div>
<div style="left:530px;top:1188px;width:111px;height:1px;background:#000"></div>
<div style="left:530px;top:1214px;width:111px;height:1px;background:#000"></div>
<div style="left:530px;top:1188px;width:1px;height:27px;background:#000"></div>
<div style="left:640px;top:1188px;width:1px;height:27px;background:#000"></div>
<div style="left:640px;top:1162px;width:69px;height:1px;background:#000"></div>
<div style="left:640px;top:1188px;width:69px;height:1px;background:#000"></div>
<div style="left:640px;top:1162px;width:1px;height:27px;background:#000"></div>
<div style="left:708px;top:1162px;width:1px;height:27px;background:#000"></div>
<div style="left:640px;top:1188px;width:69px;height:1px;background:#000"></div>
<div style="left:640px;top:1214px;width:69px;height:1px;background:#000"></div>
<div style="left:640px;top:1188px;width:1px;height:27px;background:#000"></div>
<div style="left:708px;top:1188px;width:1px;height:27px;background:#000"></div>
<div style="left:854px;top:1162px;width:87px;height:1px;background:#000"></div>
<div style="left:854px;top:1188px;width:87px;height:1px;background:#000"></div>
<div style="left:854px;top:1162px;width:1px;height:27px;background:#000"></div>
<div style="left:940px;top:1162px;width:1px;height:27px;background:#000"></div>
<div style="left:940px;top:1162px;width:69px;height:1px;background:#000"></div>
<div style="left:940px;top:1188px;width:69px;height:1px;background:#000"></div>
<div style="left:940px;top:1162px;width:1px;height:27px;background:#000"></div>
<div style="left:1008px;top:1162px;width:1px;height:27px;background:#000"></div>
<div style="left:854px;top:1188px;width:87px;height:1px;background:#000"></div>
<div style="left:854px;top:1214px;width:87px;height:1px;background:#000"></div>
<div style="left:854px;top:1188px;width:1px;height:27px;background:#000"></div>
<div style="left:940px;top:1188px;width:1px;height:27px;background:#000"></div>
<div style="left:940px;top:1188px;width:69px;height:1px;background:#000"></div>
<div style="left:940px;top:1214px;width:69px;height:1px;background:#000"></div>
<div style="left:940px;top:1188px;width:1px;height:27px;background:#000"></div>
<div style="left:1008px;top:1188px;width:1px;height:27px;background:#000"></div>
<div style="left:41px;top:1214px;width:490px;height:1px;background:#000"></div>
<div style="left:41px;top:1239px;width:490px;height:1px;background:#000"></div>
<div style="left:530px;top:1214px;width:1px;height:26px;background:#000"></div>
<div style="left:530px;top:1239px;width:479px;height:1px;background:#000"></div>
<div style="left:530px;top:1214px;width:1px;height:26px;background:#000"></div>
<div style="left:1008px;top:1214px;width:1px;height:26px;background:#000"></div>
<div style="left:41px;top:1239px;width:968px;height:1px;background:#000"></div>
<div style="left:41px;top:1265px;width:968px;height:1px;background:#000"></div>
<div style="left:1008px;top:1239px;width:1px;height:27px;background:#000"></div>
<div style="left:41px;top:1265px;width:490px;height:1px;background:#000"></div>
<div style="left:41px;top:1291px;width:490px;height:1px;background:#000"></div>
<div style="left:530px;top:1265px;width:1px;height:27px;background:#000"></div>
<div style="left:530px;top:1265px;width:111px;height:1px;background:#000"></div>
<div style="left:530px;top:1291px;width:111px;height:1px;background:#000"></div>
<div style="left:530px;top:1265px;width:1px;height:27px;background:#000"></div>
<div style="left:640px;top:1265px;width:1px;height:27px;background:#000"></div>
<div style="left:640px;top:1265px;width:69px;height:1px;background:#000"></div>
<div style="left:640px;top:1291px;width:69px;height:1px;background:#000"></div>
<div style="left:640px;top:1265px;width:1px;height:27px;background:#000"></div>
<div style="left:708px;top:1265px;width:1px;height:27px;background:#000"></div>
<div style="left:854px;top:1265px;width:87px;height:1px;background:#000"></div>
<div style="left:854px;top:1291px;width:87px;height:1px;background:#000"></div>
<div style="left:854px;top:1265px;width:1px;height:27px;background:#000"></div>
<div style="left:940px;top:1265px;width:1px;height:27px;background:#000"></div>
<div style="left:940px;top:1265px;width:69px;height:1px;background:#000"></div>
<div style="left:940px;top:1291px;width:69px;height:1px;background:#000"></div>
<div style="left:940px;top:1265px;width:1px;height:27px;background:#000"></div>
<div style="left:1008px;top:1265px;width:1px;height:27px;background:#000"></div>
<div style="left:41px;top:1291px;width:490px;height:1px;background:#000"></div>
<div style="left:41px;top:1317px;width:490px;height:1px;background:#000"></div>
<div style="left:530px;top:1291px;width:1px;height:27px;background:#000"></div>
<div style="left:530px;top:1291px;width:111px;height:1px;background:#000"></div>
<div style="left:530px;top:1317px;width:111px;height:1px;background:#000"></div>
<div style="left:530px;top:1291px;width:1px;height:27px;background:#000"></div>
<div style="left:640px;top:1291px;width:1px;height:27px;background:#000"></div>
<div style="left:640px;top:1291px;width:69px;height:1px;background:#000"></div>
<div style="left:640px;top:1317px;width:69px;height:1px;background:#000"></div>
<div style="left:640px;top:1291px;width:1px;height:27px;background:#000"></div>
<div style="left:708px;top:1291px;width:1px;height:27px;background:#000"></div>
<div style="left:854px;top:1291px;width:87px;height:1px;background:#000"></div>
<div style="left:854px;top:1317px;width:87px;height:1px;background:#000"></div>
<div style="left:854px;top:1291px;width:1px;height:27px;background:#000"></div>
<div style="left:940px;top:1291px;width:1px;height:27px;background:#000"></div>
<div style="left:940px;top:1291px;width:69px;height:1px;background:#000"></div>
<div style="left:940px;top:1317px;width:69px;height:1px;background:#000"></div>
<div style="left:940px;top:1291px;width:1px;height:27px;background:#000"></div>
<div style="left:1008px;top:1291px;width:1px;height:27px;background:#000"></div>
<div style="left:41px;top:1317px;width:490px;height:1px;background:#000"></div>
<div style="left:41px;top:1343px;width:490px;height:1px;background:#000"></div>
<div style="left:530px;top:1317px;width:1px;height:27px;background:#000"></div>
<div style="left:530px;top:1317px;width:111px;height:1px;background:#000"></div>
<div style="left:530px;top:1343px;width:111px;height:1px;background:#000"></div>
<div style="left:530px;top:1317px;width:1px;height:27px;background:#000"></div>
<div style="left:640px;top:1317px;width:1px;height:27px;background:#000"></div>
<div style="left:640px;top:1317px;width:69px;height:1px;background:#000"></div>
<div style="left:640px;top:1343px;width:69px;height:1px;background:#000"></div>
<div style="left:640px;top:1317px;width:1px;height:27px;background:#000"></div>
<div style="left:708px;top:1317px;width:1px;height:27px;background:#000"></div>
<div style="left:854px;top:1317px;width:87px;height:1px;background:#000"></div>
<div style="left:854px;top:1343px;width:87px;height:1px;background:#000"></div>
<div style="left:854px;top:1317px;width:1px;height:27px;background:#000"></div>
<div style="left:940px;top:1317px;width:1px;height:27px;background:#000"></div>
<div style="left:940px;top:1317px;width:69px;height:1px;background:#000"></div>
<div style="left:940px;top:1343px;width:69px;height:1px;background:#000"></div>
<div style="left:940px;top:1317px;width:1px;height:27px;background:#000"></div>
<div style="left:1008px;top:1317px;width:1px;height:27px;background:#000"></div>
<div style="left:41px;top:1343px;width:490px;height:1px;background:#000"></div>
<div style="left:41px;top:1369px;width:490px;height:1px;background:#000"></div>
<div style="left:530px;top:1343px;width:1px;height:27px;background:#000"></div>
<div style="left:530px;top:1343px;width:111px;height:1px;background:#000"></div>
<div style="left:530px;top:1369px;width:111px;height:1px;background:#000"></div>
<div style="left:530px;top:1343px;width:1px;height:27px;background:#000"></div>
<div style="left:640px;top:1343px;width:1px;height:27px;background:#000"></div>
<div style="left:640px;top:1343px;width:69px;height:1px;background:#000"></div>
<div style="left:640px;top:1369px;width:69px;height:1px;background:#000"></div>
<div style="left:640px;top:1343px;width:1px;height:27px;background:#000"></div>
<div style="left:708px;top:1343px;width:1px;height:27px;background:#000"></div>
<div style="left:854px;top:1343px;width:87px;height:1px;background:#000"></div>
<div style="left:854px;top:1369px;width:87px;height:1px;background:#000"></div>
<div style="left:854px;top:1343px;width:1px;height:27px;background:#000"></div>
<div style="left:940px;top:1343px;width:1px;height:27px;background:#000"></div>
<div style="left:940px;top:1343px;width:69px;height:1px;background:#000"></div>
<div style="left:940px;top:1369px;width:69px;height:1px;background:#000"></div>
<div style="left:940px;top:1343px;width:1px;height:27px;background:#000"></div>
<div style="left:1008px;top:1343px;width:1px;height:27px;background:#000"></div>
<div style="left:41px;top:1369px;width:490px;height:1px;background:#000"></div>
<div style="left:41px;top:1395px;width:490px;height:1px;background:#000"></div>
<div style="left:530px;top:1369px;width:1px;height:27px;background:#000"></div>
<div style="left:530px;top:1369px;width:111px;height:1px;background:#000"></div>
<div style="left:530px;top:1395px;width:111px;height:1px;background:#000"></div>
<div style="left:530px;top:1369px;width:1px;height:27px;background:#000"></div>
<div style="left:640px;top:1369px;width:1px;height:27px;background:#000"></div>
<div style="left:640px;top:1369px;width:69px;height:1px;background:#000"></div>
<div style="left:640px;top:1395px;width:69px;height:1px;background:#000"></div>
<div style="left:640px;top:1369px;width:1px;height:27px;background:#000"></div>
<div style="left:708px;top:1369px;width:1px;height:27px;background:#000"></div>
<div style="left:854px;top:1369px;width:87px;height:1px;background:#000"></div>
<div style="left:854px;top:1395px;width:87px;height:1px;background:#000"></div>
<div style="left:854px;top:1369px;width:1px;height:27px;background:#000"></div>
<div style="left:940px;top:1369px;width:1px;height:27px;background:#000"></div>
<div style="left:940px;top:1369px;width:69px;height:1px;background:#000"></div>
<div style="left:940px;top:1395px;width:69px;height:1px;background:#000"></div>
<div style="left:940px;top:1369px;width:1px;height:27px;background:#000"></div>
<div style="left:1008px;top:1369px;width:1px;height:27px;background:#000"></div>
<div style="left:41px;top:1395px;width:490px;height:1px;background:#000"></div>
<div style="left:41px;top:1421px;width:490px;height:1px;background:#000"></div>
<div style="left:530px;top:1395px;width:1px;height:27px;background:#000"></div>
<div style="left:530px;top:1395px;width:111px;height:1px;background:#000"></div>
<div style="left:530px;top:1421px;width:111px;height:1px;background:#000"></div>
<div style="left:530px;top:1395px;width:1px;height:27px;background:#000"></div>
<div style="left:640px;top:1395px;width:1px;height:27px;background:#000"></div>
<div style="left:640px;top:1395px;width:69px;height:1px;background:#000"></div>
<div style="left:640px;top:1421px;width:69px;height:1px;background:#000"></div>
<div style="left:640px;top:1395px;width:1px;height:27px;background:#000"></div>
<div style="left:708px;top:1395px;width:1px;height:27px;background:#000"></div>
<div style="left:854px;top:1395px;width:87px;height:1px;background:#000"></div>
<div style="left:854px;top:1421px;width:87px;height:1px;background:#000"></div>
<div style="left:854px;top:1395px;width:1px;height:27px;background:#000"></div>
<div style="left:940px;top:1395px;width:1px;height:27px;background:#000"></div>
<div style="left:940px;top:1395px;width:69px;height:1px;background:#000"></div>
<div style="left:940px;top:1421px;width:69px;height:1px;background:#000"></div>
<div style="left:940px;top:1395px;width:1px;height:27px;background:#000"></div>
<div style="left:1008px;top:1395px;width:1px;height:27px;background:#000"></div>
<div style="left:721px;top:1291px;width:61px;height:1px;background:#000"></div>
<div style="left:721px;top:1317px;width:61px;height:1px;background:#000"></div>
<div style="left:721px;top:1291px;width:1px;height:27px;background:#000"></div>
<div style="left:781px;top:1291px;width:1px;height:27px;background:#000"></div>
<div style="left:781px;top:1291px;width:61px;height:1px;background:#000"></div>
<div style="left:781px;top:1317px;width:61px;height:1px;background:#000"></div>
<div style="left:781px;top:1291px;width:1px;height:27px;background:#000"></div>
<div style="left:841px;top:1291px;width:1px;height:27px;background:#000"></div>
<div style="left:721px;top:1343px;width:61px;height:1px;background:#000"></div>
<div style="left:721px;top:1369px;width:61px;height:1px;background:#000"></div>
<div style="left:721px;top:1343px;width:1px;height:27px;background:#000"></div>
<div style="left:781px;top:1343px;width:1px;height:27px;background:#000"></div>
<div style="left:781px;top:1343px;width:61px;height:1px;background:#000"></div>
<div style="left:781px;top:1369px;width:61px;height:1px;background:#000"></div>
<div style="left:781px;top:1343px;width:1px;height:27px;background:#000"></div>
<div style="left:841px;top:1343px;width:1px;height:27px;background:#000"></div>
<div style="left:721px;top:1395px;width:61px;height:1px;background:#000"></div>
<div style="left:721px;top:1421px;width:61px;height:1px;background:#000"></div>
<div style="left:721px;top:1395px;width:1px;height:27px;background:#000"></div>
<div style="left:781px;top:1395px;width:1px;height:27px;background:#000"></div>
<div style="left:781px;top:1395px;width:61px;height:1px;background:#000"></div>
<div style="left:781px;top:1421px;width:61px;height:1px;background:#000"></div>
<div style="left:781px;top:1395px;width:1px;height:27px;background:#000"></div>
<div style="left:841px;top:1395px;width:1px;height:27px;background:#000"></div>
<div style="left:41px;top:1421px;width:490px;height:1px;background:#000"></div>
<div style="left:41px;top:1446px;width:490px;height:1px;background:#000"></div>
<div style="left:530px;top:1421px;width:1px;height:26px;background:#000"></div>
<div style="left:530px;top:1446px;width:479px;height:1px;background:#000"></div>
<div style="left:530px;top:1421px;width:1px;height:26px;background:#000"></div>
<div style="left:1008px;top:1421px;width:1px;height:26px;background:#000"></div>
<div style="left:41px;top:1446px;width:968px;height:1px;background:#000"></div>
<div style="left:41px;top:1472px;width:968px;height:1px;background:#000"></div>
<div style="left:1008px;top:1446px;width:1px;height:27px;background:#000"></div>
<div style="left:41px;top:1472px;width:490px;height:1px;background:#000"></div>
<div style="left:41px;top:1498px;width:490px;height:1px;background:#000"></div>
<div style="left:530px;top:1472px;width:1px;height:27px;background:#000"></div>
<div style="left:530px;top:1472px;width:111px;height:1px;background:#000"></div>
<div style="left:530px;top:1498px;width:111px;height:1px;background:#000"></div>
<div style="left:530px;top:1472px;width:1px;height:27px;background:#000"></div>
<div style="left:640px;top:1472px;width:1px;height:27px;background:#000"></div>
<div style="left:41px;top:1498px;width:490px;height:1px;background:#000"></div>
<div style="left:41px;top:1524px;width:490px;height:1px;background:#000"></div>
<div style="left:530px;top:1498px;width:1px;height:27px;background:#000"></div>
<div style="left:530px;top:1498px;width:111px;height:1px;background:#000"></div>
<div style="left:530px;top:1524px;width:111px;height:1px;background:#000"></div>
<div style="left:530px;top:1498px;width:1px;height:27px;background:#000"></div>
<div style="left:640px;top:1498px;width:1px;height:27px;background:#000"></div>
<div style="left:41px;top:1524px;width:490px;height:1px;background:#000"></div>
<div style="left:41px;top:1550px;width:490px;height:1px;background:#000"></div>
<div style="left:530px;top:1524px;width:1px;height:27px;background:#000"></div>
<div style="left:530px;top:1524px;width:111px;height:1px;background:#000"></div>
<div style="left:530px;top:1550px;width:111px;height:1px;background:#000"></div>
<div style="left:530px;top:1524px;width:1px;height:27px;background:#000"></div>
<div style="left:640px;top:1524px;width:1px;height:27px;background:#000"></div>
<div style="left:41px;top:1600px;width:968px;height:1px;background:#000"></div>
<div style="left:41px;top:1626px;width:968px;height:1px;background:#000"></div>
<div style="left:1008px;top:1600px;width:1px;height:27px;background:#000"></div>
<div style="left:41px;top:1626px;width:490px;height:1px;background:#000"></div>
<div style="left:41px;top:1651px;width:490px;height:1px;background:#000"></div>
<div style="left:530px;top:1626px;width:1px;height:26px;background:#000"></div>
<div style="left:530px;top:1626px;width:111px;height:1px;background:#000"></div>
<div style="left:530px;top:1651px;width:111px;height:1px;background:#000"></div>
<div style="left:530px;top:1626px;width:1px;height:26px;background:#000"></div>
<div style="left:640px;top:1626px;width:1px;height:26px;background:#000"></div>
<div style="left:640px;top:1626px;width:69px;height:1px;background:#000"></div>
<div style="left:640px;top:1651px;width:69px;height:1px;background:#000"></div>
<div style="left:640px;top:1626px;width:1px;height:26px;background:#000"></div>
<div style="left:708px;top:1626px;width:1px;height:26px;background:#000"></div>
<div style="left:721px;top:1626px;width:61px;height:1px;background:#000"></div>
<div style="left:721px;top:1651px;width:61px;height:1px;background:#000"></div>
<div style="left:721px;top:1626px;width:1px;height:26px;background:#000"></div>
<div style="left:781px;top:1626px;width:1px;height:26px;background:#000"></div>
<div style="left:781px;top:1626px;width:61px;height:1px;background:#000"></div>
<div style="left:781px;top:1651px;width:61px;height:1px;background:#000"></div>
<div style="left:781px;top:1626px;width:1px;height:26px;background:#000"></div>
<div style="left:841px;top:1626px;width:1px;height:26px;background:#000"></div>
<div style="left:854px;top:1626px;width:87px;height:1px;background:#000"></div>
<div style="left:854px;top:1651px;width:87px;height:1px;background:#000"></div>
<div style="left:854px;top:1626px;width:1px;height:26px;background:#000"></div>
<div style="left:940px;top:1626px;width:1px;height:26px;background:#000"></div>
<div style="left:940px;top:1626px;width:69px;height:1px;background:#000"></div>
<div style="left:940px;top:1651px;width:69px;height:1px;background:#000"></div>
<div style="left:940px;top:1626px;width:1px;height:26px;background:#000"></div>
<div style="left:1008px;top:1626px;width:1px;height:26px;background:#000"></div>
<div style="left:41px;top:1651px;width:490px;height:1px;background:#000"></div>
<div style="left:41px;top:1676px;width:490px;height:1px;background:#000"></div>
<div style="left:530px;top:1651px;width:1px;height:26px;background:#000"></div>
<div style="left:530px;top:1651px;width:111px;height:1px;background:#000"></div>
<div style="left:530px;top:1676px;width:111px;height:1px;background:#000"></div>
<div style="left:530px;top:1651px;width:1px;height:26px;background:#000"></div>
<div style="left:640px;top:1651px;width:1px;height:26px;background:#000"></div>
<div style="left:640px;top:1651px;width:69px;height:1px;background:#000"></div>
<div style="left:640px;top:1676px;width:69px;height:1px;background:#000"></div>
<div style="left:640px;top:1651px;width:1px;height:26px;background:#000"></div>
<div style="left:708px;top:1651px;width:1px;height:26px;background:#000"></div>
<div style="left:721px;top:1651px;width:61px;height:1px;background:#000"></div>
<div style="left:721px;top:1676px;width:61px;height:1px;background:#000"></div>
<div style="left:721px;top:1651px;width:1px;height:26px;background:#000"></div>
<div style="left:781px;top:1651px;width:1px;height:26px;background:#000"></div>
<div style="left:781px;top:1651px;width:61px;height:1px;background:#000"></div>
<div style="left:781px;top:1676px;width:61px;height:1px;background:#000"></div>
<div style="left:781px;top:1651px;width:1px;height:26px;background:#000"></div>
<div style="left:841px;top:1651px;width:1px;height:26px;background:#000"></div>
<div style="left:854px;top:1651px;width:87px;height:1px;background:#000"></div>
<div style="left:854px;top:1676px;width:87px;height:1px;background:#000"></div>
<div style="left:854px;top:1651px;width:1px;height:26px;background:#000"></div>
<div style="left:940px;top:1651px;width:1px;height:26px;background:#000"></div>
<div style="left:940px;top:1651px;width:69px;height:1px;background:#000"></div>
<div style="left:940px;top:1676px;width:69px;height:1px;background:#000"></div>
<div style="left:940px;top:1651px;width:1px;height:26px;background:#000"></div>
<div style="left:1008px;top:1651px;width:1px;height:26px;background:#000"></div>
<div style="left:41px;top:1676px;width:490px;height:1px;background:#000"></div>
<div style="left:41px;top:1701px;width:490px;height:1px;background:#000"></div>
<div style="left:530px;top:1676px;width:1px;height:26px;background:#000"></div>
<div style="left:530px;top:1676px;width:111px;height:1px;background:#000"></div>
<div style="left:530px;top:1701px;width:111px;height:1px;background:#000"></div>
<div style="left:530px;top:1676px;width:1px;height:26px;background:#000"></div>
<div style="left:640px;top:1676px;width:1px;height:26px;background:#000"></div>
<div style="left:640px;top:1676px;width:69px;height:1px;background:#000"></div>
<div style="left:640px;top:1701px;width:69px;height:1px;background:#000"></div>
<div style="left:640px;top:1676px;width:1px;height:26px;background:#000"></div>
<div style="left:708px;top:1676px;width:1px;height:26px;background:#000"></div>
<div style="left:721px;top:1676px;width:61px;height:1px;background:#000"></div>
<div style="left:721px;top:1701px;width:61px;height:1px;background:#000"></div>
<div style="left:721px;top:1676px;width:1px;height:26px;background:#000"></div>
<div style="left:781px;top:1676px;width:1px;height:26px;background:#000"></div>
<div style="left:781px;top:1676px;width:61px;height:1px;background:#000"></div>
<div style="left:781px;top:1701px;width:61px;height:1px;background:#000"></div>
<div style="left:781px;top:1676px;width:1px;height:26px;background:#000"></div>
<div style="left:841px;top:1676px;width:1px;height:26px;background:#000"></div>
<div style="left:854px;top:1676px;width:87px;height:1px;background:#000"></div>
<div style="left:854px;top:1701px;width:87px;height:1px;background:#000"></div>
<div style="left:854px;top:1676px;width:1px;height:26px;background:#000"></div>
<div style="left:940px;top:1676px;width:1px;height:26px;background:#000"></div>
<div style="left:940px;top:1676px;width:69px;height:1px;background:#000"></div>
<div style="left:940px;top:1701px;width:69px;height:1px;background:#000"></div>
<div style="left:940px;top:1676px;width:1px;height:26px;background:#000"></div>
<div style="left:1008px;top:1676px;width:1px;height:26px;background:#000"></div>
<div style="left:41px;top:1701px;width:490px;height:1px;background:#000"></div>
<div style="left:41px;top:1726px;width:490px;height:1px;background:#000"></div>
<div style="left:530px;top:1701px;width:1px;height:26px;background:#000"></div>
<div style="left:530px;top:1701px;width:111px;height:1px;background:#000"></div>
<div style="left:530px;top:1726px;width:111px;height:1px;background:#000"></div>
<div style="left:530px;top:1701px;width:1px;height:26px;background:#000"></div>
<div style="left:640px;top:1701px;width:1px;height:26px;background:#000"></div>
<div style="left:640px;top:1701px;width:69px;height:1px;background:#000"></div>
<div style="left:640px;top:1726px;width:69px;height:1px;background:#000"></div>
<div style="left:640px;top:1701px;width:1px;height:26px;background:#000"></div>
<div style="left:708px;top:1701px;width:1px;height:26px;background:#000"></div>
<div style="left:721px;top:1701px;width:61px;height:1px;background:#000"></div>
<div style="left:721px;top:1726px;width:61px;height:1px;background:#000"></div>
<div style="left:721px;top:1701px;width:1px;height:26px;background:#000"></div>
<div style="left:781px;top:1701px;width:1px;height:26px;background:#000"></div>
<div style="left:781px;top:1701px;width:61px;height:1px;background:#000"></div>
<div style="left:781px;top:1726px;width:61px;height:1px;background:#000"></div>
<div style="left:781px;top:1701px;width:1px;height:26px;background:#000"></div>
<div style="left:841px;top:1701px;width:1px;height:26px;background:#000"></div>
<div style="left:854px;top:1701px;width:87px;height:1px;background:#000"></div>
<div style="left:854px;top:1726px;width:87px;height:1px;background:#000"></div>
<div style="left:854px;top:1701px;width:1px;height:26px;background:#000"></div>
<div style="left:940px;top:1701px;width:1px;height:26px;background:#000"></div>
<div style="left:940px;top:1701px;width:69px;height:1px;background:#000"></div>
<div style="left:940px;top:1726px;width:69px;height:1px;background:#000"></div>
<div style="left:940px;top:1701px;width:1px;height:26px;background:#000"></div>
<div style="left:1008px;top:1701px;width:1px;height:26px;background:#000"></div>
<div style="left:41px;top:1726px;width:490px;height:1px;background:#000"></div>
<div style="left:41px;top:1751px;width:490px;height:1px;background:#000"></div>
<div style="left:530px;top:1726px;width:1px;height:26px;background:#000"></div>
<div style="left:530px;top:1726px;width:111px;height:1px;background:#000"></div>
<div style="left:530px;top:1751px;width:111px;height:1px;background:#000"></div>
<div style="left:530px;top:1726px;width:1px;height:26px;background:#000"></div>
<div style="left:640px;top:1726px;width:1px;height:26px;background:#000"></div>
<div style="left:640px;top:1726px;width:69px;height:1px;background:#000"></div>
<div style="left:640px;top:1751px;width:69px;height:1px;background:#000"></div>
<div style="left:640px;top:1726px;width:1px;height:26px;background:#000"></div>
<div style="left:708px;top:1726px;width:1px;height:26px;background:#000"></div>
<div style="left:721px;top:1726px;width:61px;height:1px;background:#000"></div>
<div style="left:721px;top:1751px;width:61px;height:1px;background:#000"></div>
<div style="left:721px;top:1726px;width:1px;height:26px;background:#000"></div>
<div style="left:781px;top:1726px;width:1px;height:26px;background:#000"></div>
<div style="left:781px;top:1726px;width:61px;height:1px;background:#000"></div>
<div style="left:781px;top:1751px;width:61px;height:1px;background:#000"></div>
<div style="left:781px;top:1726px;width:1px;height:26px;background:#000"></div>
<div style="left:841px;top:1726px;width:1px;height:26px;background:#000"></div>
<div style="left:854px;top:1726px;width:87px;height:1px;background:#000"></div>
<div style="left:854px;top:1751px;width:87px;height:1px;background:#000"></div>
<div style="left:854px;top:1726px;width:1px;height:26px;background:#000"></div>
<div style="left:940px;top:1726px;width:1px;height:26px;background:#000"></div>
<div style="left:940px;top:1726px;width:69px;height:1px;background:#000"></div>
<div style="left:940px;top:1751px;width:69px;height:1px;background:#000"></div>
<div style="left:940px;top:1726px;width:1px;height:26px;background:#000"></div>
<div style="left:1008px;top:1726px;width:1px;height:26px;background:#000"></div>
<div style="left:41px;top:1751px;width:490px;height:1px;background:#000"></div>
<div style="left:41px;top:1776px;width:490px;height:1px;background:#000"></div>
<div style="left:530px;top:1751px;width:1px;height:26px;background:#000"></div>
<div style="left:530px;top:1751px;width:111px;height:1px;background:#000"></div>
<div style="left:530px;top:1776px;width:111px;height:1px;background:#000"></div>
<div style="left:530px;top:1751px;width:1px;height:26px;background:#000"></div>
<div style="left:640px;top:1751px;width:1px;height:26px;background:#000"></div>
<div style="left:640px;top:1751px;width:69px;height:1px;background:#000"></div>
<div style="left:640px;top:1776px;width:69px;height:1px;background:#000"></div>
<div style="left:640px;top:1751px;width:1px;height:26px;background:#000"></div>
<div style="left:708px;top:1751px;width:1px;height:26px;background:#000"></div>
<div style="left:721px;top:1751px;width:61px;height:1px;background:#000"></div>
<div style="left:721px;top:1776px;width:61px;height:1px;background:#000"></div>
<div style="left:721px;top:1751px;width:1px;height:26px;background:#000"></div>
<div style="left:781px;top:1751px;width:1px;height:26px;background:#000"></div>
<div style="left:781px;top:1751px;width:61px;height:1px;background:#000"></div>
<div style="left:781px;top:1776px;width:61px;height:1px;background:#000"></div>
<div style="left:781px;top:1751px;width:1px;height:26px;background:#000"></div>
<div style="left:841px;top:1751px;width:1px;height:26px;background:#000"></div>
<div style="left:854px;top:1751px;width:87px;height:1px;background:#000"></div>
<div style="left:854px;top:1776px;width:87px;height:1px;background:#000"></div>
<div style="left:854px;top:1751px;width:1px;height:26px;background:#000"></div>
<div style="left:940px;top:1751px;width:1px;height:26px;background:#000"></div>
<div style="left:940px;top:1751px;width:69px;height:1px;background:#000"></div>
<div style="left:940px;top:1776px;width:69px;height:1px;background:#000"></div>
<div style="left:940px;top:1751px;width:1px;height:26px;background:#000"></div>
<div style="left:1008px;top:1751px;width:1px;height:26px;background:#000"></div>
<span style="top:321px;font:normal bold 20px/20px 'Liberation Sans',sans-serif;color:#000;left:43.01px;transform:scaleX(0.9935);transform-origin:0 0;">Polar Calculator - Cambridge to Reichmann and SeeYou</span>
<span style="top:347px;font:normal bold 20px/20px 'Liberation Sans',sans-serif;color:#000;left:43.01px;transform:scaleX(0.9898);transform-origin:0 0;">by Paul Remde</span>
<span style="top:373px;font:normal normal 20px/20px 'Liberation Sans',sans-serif;color:#000;left:43.01px;transform:scaleX(0.9933);transform-origin:0 0;">Updated: January 16, 2017</span>
<span style="top:423px;font:normal normal 20px/20px 'Liberation Sans',sans-serif;color:#000;left:43.01px;transform:scaleX(0.9946);transform-origin:0 0;">Enter polar data in the Cambridge format and it calculates adjusted data compensated for differences</span>
<span style="top:448px;font:normal normal 20px/20px 'Liberation Sans',sans-serif;color:#000;left:43.01px;transform:scaleX(0.9909);transform-origin:0 0;">in the weight now and when the polar was measured.</span>
<span style="top:473px;font:normal normal 20px/20px 'Liberation Sans',sans-serif;color:#000;left:43.01px;transform:scaleX(0.9925);transform-origin:0 0;">It also calculates polar coefficients and 3 points on the curve for use in WinPilot.</span>
<span style="top:498px;font:normal normal 20px/20px 'Liberation Sans',sans-serif;color:#000;left:43.00px;transform:scaleX(1.0019);transform-origin:0 0;">It also calculates polar coefficients for use in SeeYou and SeeYou Mobile.</span>
<span style="left:43px;top:548px;font:bold 20px/20px 'Liberation Sans',sans-serif;color:#000;">Enter</span>
<span style="top:574px;font:normal normal 20px/20px 'Liberation Sans',sans-serif;color:#000;left:42.99px;transform:scaleX(1.0077);transform-origin:0 0;">E1 (Max Glide Ratio)</span>
<span style="top:600px;font:normal normal 20px/20px 'Liberation Sans',sans-serif;color:#000;left:43.00px;transform:scaleX(1.0094);transform-origin:0 0;">V1 (Best Glide Speed)</span>
<span style="top:626px;font:normal normal 20px/20px 'Liberation Sans',sans-serif;color:#000;left:43.00px;transform:scaleX(1.0028);transform-origin:0 0;">V2 (Speed at sink =-2m/s=-3.885knots=393.72 ft/min)</span>
<span style="top:652px;font:normal normal 20px/20px 'Liberation Sans',sans-serif;color:#000;left:43.00px;transform:scaleX(1.0005);transform-origin:0 0;">Weight, dry with pilot when polar data was measured</span>
<span style="top:678px;font:normal normal 20px/20px 'Liberation Sans',sans-serif;color:#000;left:43.00px;transform:scaleX(1.0029);transform-origin:0 0;">Weight, dry with pilot, your glider</span>
<span style="left:43px;top:704px;font:normal 20px/20px 'Liberation Sans',sans-serif;color:#000;">Glider</span>
<span style="left:43px;top:730px;font:normal 20px/20px 'Liberation Sans',sans-serif;color:#000;">ID</span>
<span style="top:756px;font:normal normal 20px/20px 'Liberation Sans',sans-serif;color:#000;left:42.99px;transform:scaleX(1.0078);transform-origin:0 0;">Max water ballast</span>
<span style="top:782px;font:normal normal 20px/20px 'Liberation Sans',sans-serif;color:#000;left:43.00px;transform:scaleX(0.9907);transform-origin:0 0;">Wing area</span>
<span style="left:43px;top:808px;font:bold 20px/20px 'Liberation Sans',sans-serif;color:#000;">Results</span>
<span style="top:834px;font:normal normal 20px/20px 'Liberation Sans',sans-serif;color:#000;left:43.00px;transform:scaleX(1.0059);transform-origin:0 0;">A, square root of the ratio of the weights</span>
<span style="left:43px;top:859px;font:normal 20px/20px 'Liberation Sans',sans-serif;color:#000;">W1</span>
<span style="left:43px;top:885px;font:normal 20px/20px 'Liberation Sans',sans-serif;color:#000;">W2</span>
<span style="left:43px;top:911px;font:normal 20px/20px 'Liberation Sans',sans-serif;color:#000;">a</span>
<span style="left:43px;top:936px;font:normal 20px/20px 'Liberation Sans',sans-serif;color:#000;">b</span>
<span style="left:43px;top:961px;font:normal 20px/20px 'Liberation Sans',sans-serif;color:#000;">c</span>
<span style="left:43px;top:986px;font:normal 20px/20px 'Liberation Sans',sans-serif;color:#000;">a'</span>
<span style="left:43px;top:1012px;font:normal 20px/20px 'Liberation Sans',sans-serif;color:#000;">b'</span>
<span style="left:43px;top:1038px;font:normal 20px/20px 'Liberation Sans',sans-serif;color:#000;">c'</span>
<span style="top:1064px;font:normal normal 20px/20px 'Liberation Sans',sans-serif;color:#000;left:43.02px;transform:scaleX(0.9831);transform-origin:0 0;">Speed of minimum sink (not usually accurate)</span>
<span style="top:1089px;font:normal normal 20px/20px 'Liberation Sans',sans-serif;color:#000;left:43.03px;transform:scaleX(0.9820);transform-origin:0 0;">Minimum Sink Rate (not usually accurate)</span>
<span style="top:1114px;font:normal bold 20px/20px 'Liberation Sans',sans-serif;color:#000;left:43.01px;transform:scaleX(0.9930);transform-origin:0 0;">Cambridge values adjusted for weight difference from when polar was measured</span>
<span style="top:1140px;font:normal normal 20px/20px 'Liberation Sans',sans-serif;color:#000;left:42.99px;transform:scaleX(1.0077);transform-origin:0 0;">E1 (Max Glide Ratio)</span>
<span style="top:1166px;font:normal normal 20px/20px 'Liberation Sans',sans-serif;color:#000;left:43.00px;transform:scaleX(1.0087);transform-origin:0 0;">V1' (Best Glide Speed)</span>
<span style="top:1192px;font:normal normal 20px/20px 'Liberation Sans',sans-serif;color:#000;left:43.00px;transform:scaleX(1.0106);transform-origin:0 0;">V2' (Speed at sink = -2 m/s = -3.885 knots)</span>
<span style="top:1218px;font:normal normal 20px/20px 'Liberation Sans',sans-serif;color:#000;left:43.00px;transform:scaleX(1.0003);transform-origin:0 0;">Data for Cambridge 300 Utility .plr file</span>
<span style="top:1243px;font:normal bold 20px/20px 'Liberation Sans',sans-serif;color:#000;left:43.00px;transform:scaleX(0.9978);transform-origin:0 0;">3 Points on the polar for use in WinPilot</span>
<span style="top:1269px;font:normal normal 20px/20px 'Liberation Sans',sans-serif;color:#000;left:43.00px;transform:scaleX(1.0087);transform-origin:0 0;">V1' (Best Glide Speed)</span>
<span style="left:43px;top:1295px;font:normal 20px/20px 'Liberation Sans',sans-serif;color:#000;">W1'</span>
<span style="left:43px;top:1321px;font:normal 20px/20px 'Liberation Sans',sans-serif;color:#000;">V2'</span>
<span style="left:43px;top:1347px;font:normal 20px/20px 'Liberation Sans',sans-serif;color:#000;">W2'</span>
<span style="left:43px;top:1373px;font:normal 20px/20px 'Liberation Sans',sans-serif;color:#000;">V3'</span>
<span style="left:43px;top:1399px;font:normal 20px/20px 'Liberation Sans',sans-serif;color:#000;">W3'</span>
<span style="top:1425px;font:normal normal 20px/20px 'Liberation Sans',sans-serif;color:#000;left:43.00px;transform:scaleX(1.0021);transform-origin:0 0;">Data for WinPilot .plr file</span>
<span style="top:1450px;font:normal bold 20px/20px 'Liberation Sans',sans-serif;color:#000;left:43.00px;transform:scaleX(0.9965);transform-origin:0 0;">SeeYou Polar Coefficients</span>
<span style="top:1476px;font:normal normal 20px/20px 'Liberation Sans',sans-serif;color:#000;left:42.99px;transform:scaleX(1.0103);transform-origin:0 0;">a' (SeeYou) (polar shifted for weight difference)</span>
<span style="top:1502px;font:normal normal 20px/20px 'Liberation Sans',sans-serif;color:#000;left:42.99px;transform:scaleX(1.0103);transform-origin:0 0;">b' (SeeYou) (polar shifted for weight difference)</span>
<span style="top:1528px;font:normal normal 20px/20px 'Liberation Sans',sans-serif;color:#000;left:42.99px;transform:scaleX(1.0109);transform-origin:0 0;">c' (SeeYou) (polar shifted for weight difference)</span>
<span style="top:1604px;font:normal bold 20px/20px 'Liberation Sans',sans-serif;color:#000;left:43.00px;transform:scaleX(1.0017);transform-origin:0 0;">Speed-To-Fly Given MacCready</span>
<span style="left:43px;top:1630px;font:normal 20px/20px 'Liberation Sans',sans-serif;color:#000;letter-spacing:-0.055px;">MacCready</span>
<span style="top:1655px;font:normal normal 20px/20px 'Liberation Sans',sans-serif;color:#000;left:42.99px;transform:scaleX(1.0127);transform-origin:0 0;">Speed-To-Fly</span>
<span style="top:1680px;font:normal normal 20px/20px 'Liberation Sans',sans-serif;color:#000;left:42.99px;transform:scaleX(1.0052);transform-origin:0 0;">Sink Rate at Speed-To-Fly</span>
<span style="left:43px;top:1705px;font:normal 20px/20px 'Liberation Sans',sans-serif;color:#000;letter-spacing:-0.055px;">Glide Ratio</span>
<span style="top:1730px;font:normal normal 20px/20px 'Liberation Sans',sans-serif;color:#000;left:43.00px;transform:scaleX(0.9953);transform-origin:0 0;">Cross-Country Speed</span>
<span style="top:1755px;font:normal normal 20px/20px 'Liberation Sans',sans-serif;color:#000;left:43.00px;transform:scaleX(0.9943);transform-origin:0 0;">slope of line</span>
<span style="left:37.5px;width:600px;text-align:right;top:574px;font:bold 20px/20px 'Liberation Sans',sans-serif;color:#000;">49</span>
<span style="left:37.5px;width:600px;text-align:right;top:600px;font:bold 20px/20px 'Liberation Sans',sans-serif;color:#000;">118</span>
<span style="left:37.5px;width:600px;text-align:right;top:626px;font:bold 20px/20px 'Liberation Sans',sans-serif;color:#000;">210</span>
<span style="left:37.5px;width:600px;text-align:right;top:652px;font:bold 20px/20px 'Liberation Sans',sans-serif;color:#000;">750</span>
<span style="left:37.5px;width:600px;text-align:right;top:678px;font:bold 20px/20px 'Liberation Sans',sans-serif;color:#000;">750</span>
<span style="left:37.5px;width:600px;text-align:right;top:704px;font:bold 20px/20px 'Liberation Sans',sans-serif;color:#000;letter-spacing:-0.078px;">Arcus M</span>
<span style="left:37.5px;width:600px;text-align:right;top:756px;font:bold 20px/20px 'Liberation Sans',sans-serif;color:#000;">185</span>
<span style="left:37.5px;width:600px;text-align:right;top:782px;font:bold 20px/20px 'Liberation Sans',sans-serif;color:#000;">15.6</span>
<span style="left:37.5px;width:600px;text-align:right;top:834px;font:normal 20px/20px 'Liberation Sans',sans-serif;color:#000;">1</span>
<span style="left:37.5px;width:600px;text-align:right;top:859px;font:normal 20px/20px 'Liberation Sans',sans-serif;color:#000;">-0.668934</span>
<span style="left:37.5px;width:600px;text-align:right;top:885px;font:normal 20px/20px 'Liberation Sans',sans-serif;color:#000;">-2</span>
<span style="left:37.5px;width:600px;text-align:right;top:911px;font:normal 20px/20px 'Liberation Sans',sans-serif;color:#000;">-0.000344</span>
<span style="left:37.5px;width:600px;text-align:right;top:936px;font:normal 20px/20px 'Liberation Sans',sans-serif;color:#000;">0.0608503</span>
<span style="left:37.5px;width:600px;text-align:right;top:961px;font:normal 20px/20px 'Liberation Sans',sans-serif;color:#000;">-4.794248</span>
<span style="left:37.5px;width:600px;text-align:right;top:986px;font:bold 20px/20px 'Liberation Sans',sans-serif;color:#000;">-0.000344</span>
<span style="left:37.5px;width:600px;text-align:right;top:1012px;font:bold 20px/20px 'Liberation Sans',sans-serif;color:#000;">0.0608503</span>
<span style="left:37.5px;width:600px;text-align:right;top:1038px;font:bold 20px/20px 'Liberation Sans',sans-serif;color:#000;">-4.794248</span>
<span style="left:37.5px;width:600px;text-align:right;top:1064px;font:normal 20px/20px 'Liberation Sans',sans-serif;color:#000;">88.364146</span>
<span style="left:37.5px;width:600px;text-align:right;top:1089px;font:normal 20px/20px 'Liberation Sans',sans-serif;color:#000;">-0.584932</span>
<span style="left:37.5px;width:600px;text-align:right;top:1140px;font:bold 20px/20px 'Liberation Sans',sans-serif;color:#000;">49</span>
<span style="left:37.5px;width:600px;text-align:right;top:1166px;font:bold 20px/20px 'Liberation Sans',sans-serif;color:#000;">118</span>
<span style="left:37.5px;width:600px;text-align:right;top:1192px;font:bold 20px/20px 'Liberation Sans',sans-serif;color:#000;">210</span>
<span style="left:37.5px;width:600px;text-align:right;top:1269px;font:bold 20px/20px 'Liberation Sans',sans-serif;color:#000;">118</span>
<span style="left:37.5px;width:600px;text-align:right;top:1295px;font:bold 20px/20px 'Liberation Sans',sans-serif;color:#000;">-0.669</span>
<span style="left:37.5px;width:600px;text-align:right;top:1321px;font:bold 20px/20px 'Liberation Sans',sans-serif;color:#000;">159</span>
<span style="left:37.5px;width:600px;text-align:right;top:1347px;font:bold 20px/20px 'Liberation Sans',sans-serif;color:#000;">-1.062</span>
<span style="left:37.5px;width:600px;text-align:right;top:1373px;font:bold 20px/20px 'Liberation Sans',sans-serif;color:#000;">200</span>
<span style="left:37.5px;width:600px;text-align:right;top:1399px;font:bold 20px/20px 'Liberation Sans',sans-serif;color:#000;">-1.777</span>
<span style="left:37.5px;width:600px;text-align:right;top:1476px;font:bold 20px/20px 'Liberation Sans',sans-serif;color:#000;">0.9564317</span>
<span style="left:37.5px;width:600px;text-align:right;top:1502px;font:bold 20px/20px 'Liberation Sans',sans-serif;color:#000;">-1.690285</span>
<span style="left:37.5px;width:600px;text-align:right;top:1528px;font:bold 20px/20px 'Liberation Sans',sans-serif;color:#000;">1.3317355</span>
<span style="left:37.5px;width:600px;text-align:right;top:1630px;font:normal 20px/20px 'Liberation Sans',sans-serif;color:#000;">5</span>
<span style="left:37.5px;width:600px;text-align:right;top:1655px;font:normal 20px/20px 'Liberation Sans',sans-serif;color:#000;">109.0</span>
<span style="left:37.5px;width:600px;text-align:right;top:1680px;font:normal 20px/20px 'Liberation Sans',sans-serif;color:#000;">-3.5388</span>
<span style="left:37.5px;width:600px;text-align:right;top:1705px;font:normal 20px/20px 'Liberation Sans',sans-serif;color:#000;">30.8</span>
<span style="left:37.5px;width:600px;text-align:right;top:1730px;font:normal 20px/20px 'Liberation Sans',sans-serif;color:#000;">64</span>
<span style="left:37.5px;width:600px;text-align:right;top:1755px;font:normal 20px/20px 'Liberation Sans',sans-serif;color:#000;">-0.078307</span>
<span style="left:533.5px;top:1218px;font:normal 20px/20px 'Liberation Sans',sans-serif;color:#000;letter-spacing:0.131px;">Arcus M, , 49, 118, 210, 750, 185, 0, 15600</span>
<span style="left:533.5px;top:1425px;font:normal 20px/20px 'Liberation Sans',sans-serif;color:#000;letter-spacing:0.177px;">750, 185, 118, -0.67, 159, -1.06, 200, -1.78</span>
<span style="left:643px;top:600px;font:normal 20px/20px 'Liberation Sans',sans-serif;color:#000;">km/hr</span>
<span style="left:643px;top:626px;font:normal 20px/20px 'Liberation Sans',sans-serif;color:#000;">km/hr</span>
<span style="left:643px;top:652px;font:normal 20px/20px 'Liberation Sans',sans-serif;color:#000;">kg</span>
<span style="left:643px;top:678px;font:normal 20px/20px 'Liberation Sans',sans-serif;color:#000;">kg</span>
<span style="left:643px;top:756px;font:normal 20px/20px 'Liberation Sans',sans-serif;color:#000;">liters</span>
<span style="left:643px;top:782px;font:normal 20px/20px 'Liberation Sans',sans-serif;color:#000;">m²</span>
<span style="left:643px;top:859px;font:normal 20px/20px 'Liberation Sans',sans-serif;color:#000;">m/s</span>
<span style="left:643px;top:885px;font:normal 20px/20px 'Liberation Sans',sans-serif;color:#000;">m/s</span>
<span style="left:643px;top:911px;font:normal 20px/20px 'Liberation Sans',sans-serif;color:#000;">hr/km</span>
<span style="left:643px;top:961px;font:normal 20px/20px 'Liberation Sans',sans-serif;color:#000;">km/hr</span>
<span style="left:643px;top:986px;font:normal 20px/20px 'Liberation Sans',sans-serif;color:#000;">hr/km</span>
<span style="left:643px;top:1038px;font:normal 20px/20px 'Liberation Sans',sans-serif;color:#000;">km/hr</span>
<span style="left:643px;top:1064px;font:normal 20px/20px 'Liberation Sans',sans-serif;color:#000;">km/hr</span>
<span style="left:643px;top:1089px;font:normal 20px/20px 'Liberation Sans',sans-serif;color:#000;">m/s</span>
<span style="left:643px;top:1166px;font:normal 20px/20px 'Liberation Sans',sans-serif;color:#000;">km/hr</span>
<span style="left:643px;top:1192px;font:normal 20px/20px 'Liberation Sans',sans-serif;color:#000;">km/hr</span>
<span style="left:643px;top:1269px;font:normal 20px/20px 'Liberation Sans',sans-serif;color:#000;">km/hr</span>
<span style="left:643px;top:1295px;font:normal 20px/20px 'Liberation Sans',sans-serif;color:#000;">m/s</span>
<span style="left:643px;top:1321px;font:normal 20px/20px 'Liberation Sans',sans-serif;color:#000;">km/hr</span>
<span style="left:643px;top:1347px;font:normal 20px/20px 'Liberation Sans',sans-serif;color:#000;">m/s</span>
<span style="left:643px;top:1373px;font:normal 20px/20px 'Liberation Sans',sans-serif;color:#000;">km/hr</span>
<span style="left:643px;top:1399px;font:normal 20px/20px 'Liberation Sans',sans-serif;color:#000;">m/s</span>
<span style="left:643px;top:1630px;font:normal 20px/20px 'Liberation Sans',sans-serif;color:#000;">knots</span>
<span style="left:643px;top:1655px;font:normal 20px/20px 'Liberation Sans',sans-serif;color:#000;">knots</span>
<span style="left:643px;top:1680px;font:normal 20px/20px 'Liberation Sans',sans-serif;color:#000;">knots</span>
<span style="left:643px;top:1705px;font:normal 20px/20px 'Liberation Sans',sans-serif;color:#000;">:1</span>
<span style="left:643px;top:1730px;font:normal 20px/20px 'Liberation Sans',sans-serif;color:#000;">knots</span>
<span style="left:178.5px;width:600px;text-align:right;top:756px;font:bold 20px/20px 'Liberation Sans',sans-serif;color:#000;">48.9</span>
<span style="left:178.5px;width:600px;text-align:right;top:859px;font:bold 20px/20px 'Liberation Sans',sans-serif;color:#000;">-2.41</span>
<span style="left:178.5px;width:600px;text-align:right;top:885px;font:bold 20px/20px 'Liberation Sans',sans-serif;color:#000;">-7.2</span>
<span style="left:178.5px;width:600px;text-align:right;top:1089px;font:normal 20px/20px 'Liberation Sans',sans-serif;color:#000;">-2.11</span>
<span style="left:178.5px;width:600px;text-align:right;top:1295px;font:normal 20px/20px 'Liberation Sans',sans-serif;color:#000;">-2.41</span>
<span style="left:178.5px;width:600px;text-align:right;top:1347px;font:normal 20px/20px 'Liberation Sans',sans-serif;color:#000;">-3.82</span>
<span style="left:178.5px;width:600px;text-align:right;top:1399px;font:normal 20px/20px 'Liberation Sans',sans-serif;color:#000;">-6.4</span>
<span style="left:178.5px;width:600px;text-align:right;top:1630px;font:normal 20px/20px 'Liberation Sans',sans-serif;color:#000;">9.27</span>
<span style="left:178.5px;width:600px;text-align:right;top:1655px;font:normal 20px/20px 'Liberation Sans',sans-serif;color:#000;">202</span>
<span style="left:178.5px;width:600px;text-align:right;top:1680px;font:normal 20px/20px 'Liberation Sans',sans-serif;color:#000;">-6.56</span>
<span style="left:178.5px;width:600px;text-align:right;top:1730px;font:normal 20px/20px 'Liberation Sans',sans-serif;color:#000;">118</span>
<span style="left:784px;top:756px;font:normal 20px/20px 'Liberation Sans',sans-serif;color:#000;">gal</span>
<span style="left:784px;top:859px;font:normal 20px/20px 'Liberation Sans',sans-serif;color:#000;">km/hr</span>
<span style="left:784px;top:885px;font:normal 20px/20px 'Liberation Sans',sans-serif;color:#000;">km/hr</span>
<span style="left:784px;top:1089px;font:normal 20px/20px 'Liberation Sans',sans-serif;color:#000;">km/hr</span>
<span style="left:784px;top:1295px;font:normal 20px/20px 'Liberation Sans',sans-serif;color:#000;">km/hr</span>
<span style="left:784px;top:1347px;font:normal 20px/20px 'Liberation Sans',sans-serif;color:#000;">km/hr</span>
<span style="left:784px;top:1399px;font:normal 20px/20px 'Liberation Sans',sans-serif;color:#000;">km/hr</span>
<span style="left:784px;top:1630px;font:normal 20px/20px 'Liberation Sans',sans-serif;color:#000;">km/hr</span>
<span style="left:784px;top:1655px;font:normal 20px/20px 'Liberation Sans',sans-serif;color:#000;">km/hr</span>
<span style="left:784px;top:1680px;font:normal 20px/20px 'Liberation Sans',sans-serif;color:#000;">km/hr</span>
<span style="left:784px;top:1730px;font:normal 20px/20px 'Liberation Sans',sans-serif;color:#000;">km/hr</span>
<span style="left:337.5px;width:600px;text-align:right;top:574px;font:bold 20px/20px 'Liberation Sans',sans-serif;color:#000;">-0.0204</span>
<span style="left:337.5px;width:600px;text-align:right;top:600px;font:normal 20px/20px 'Liberation Sans',sans-serif;color:#000;">63.7</span>
<span style="left:337.5px;width:600px;text-align:right;top:626px;font:normal 20px/20px 'Liberation Sans',sans-serif;color:#000;">113.3</span>
<span style="left:337.5px;width:600px;text-align:right;top:652px;font:normal 20px/20px 'Liberation Sans',sans-serif;color:#000;">1654</span>
<span style="left:337.5px;width:600px;text-align:right;top:678px;font:normal 20px/20px 'Liberation Sans',sans-serif;color:#000;">1654</span>
<span style="left:337.5px;width:600px;text-align:right;top:756px;font:normal 20px/20px 'Liberation Sans',sans-serif;color:#000;">407</span>
<span style="left:337.5px;width:600px;text-align:right;top:782px;font:normal 20px/20px 'Liberation Sans',sans-serif;color:#000;">167.92</span>
<span style="left:337.5px;width:600px;text-align:right;top:859px;font:normal 20px/20px 'Liberation Sans',sans-serif;color:#000;">-1.299</span>
<span style="left:337.5px;width:600px;text-align:right;top:885px;font:normal 20px/20px 'Liberation Sans',sans-serif;color:#000;">-3.885</span>
<span style="left:337.5px;width:600px;text-align:right;top:1064px;font:normal 20px/20px 'Liberation Sans',sans-serif;color:#000;">47.7</span>
<span style="left:337.5px;width:600px;text-align:right;top:1089px;font:normal 20px/20px 'Liberation Sans',sans-serif;color:#000;">-1.136</span>
<span style="left:337.5px;width:600px;text-align:right;top:1166px;font:normal 20px/20px 'Liberation Sans',sans-serif;color:#000;">63.7</span>
<span style="left:337.5px;width:600px;text-align:right;top:1192px;font:normal 20px/20px 'Liberation Sans',sans-serif;color:#000;">113.3</span>
<span style="left:337.5px;width:600px;text-align:right;top:1269px;font:normal 20px/20px 'Liberation Sans',sans-serif;color:#000;">63.7</span>
<span style="left:337.5px;width:600px;text-align:right;top:1295px;font:normal 20px/20px 'Liberation Sans',sans-serif;color:#000;">-1.299</span>
<span style="left:337.5px;width:600px;text-align:right;top:1321px;font:normal 20px/20px 'Liberation Sans',sans-serif;color:#000;">85.8</span>
<span style="left:337.5px;width:600px;text-align:right;top:1347px;font:normal 20px/20px 'Liberation Sans',sans-serif;color:#000;">-2.063</span>
<span style="left:337.5px;width:600px;text-align:right;top:1373px;font:normal 20px/20px 'Liberation Sans',sans-serif;color:#000;">107.9</span>
<span style="left:337.5px;width:600px;text-align:right;top:1399px;font:normal 20px/20px 'Liberation Sans',sans-serif;color:#000;">-3.452</span>
<span style="left:337.5px;width:600px;text-align:right;top:1630px;font:normal 20px/20px 'Liberation Sans',sans-serif;color:#000;">2.57389</span>
<span style="left:337.5px;width:600px;text-align:right;top:1655px;font:normal 20px/20px 'Liberation Sans',sans-serif;color:#000;">56.1327</span>
<span style="left:337.5px;width:600px;text-align:right;top:1680px;font:normal 20px/20px 'Liberation Sans',sans-serif;color:#000;">-1.8217</span>
<span style="left:337.5px;width:600px;text-align:right;top:1730px;font:normal 20px/20px 'Liberation Sans',sans-serif;color:#000;">32.8694</span>
<span style="left:943px;top:600px;font:normal 20px/20px 'Liberation Sans',sans-serif;color:#000;">knots</span>
<span style="left:943px;top:626px;font:normal 20px/20px 'Liberation Sans',sans-serif;color:#000;">knots</span>
<span style="left:943px;top:652px;font:normal 20px/20px 'Liberation Sans',sans-serif;color:#000;">lbs</span>
<span style="left:943px;top:678px;font:normal 20px/20px 'Liberation Sans',sans-serif;color:#000;">lbs</span>
<span style="left:943px;top:756px;font:normal 20px/20px 'Liberation Sans',sans-serif;color:#000;">lbs</span>
<span style="left:943px;top:782px;font:normal 20px/20px 'Liberation Sans',sans-serif;color:#000;">ft²</span>
<span style="left:943px;top:859px;font:normal 20px/20px 'Liberation Sans',sans-serif;color:#000;">knots</span>
<span style="left:943px;top:885px;font:normal 20px/20px 'Liberation Sans',sans-serif;color:#000;">knots</span>
<span style="left:943px;top:1064px;font:normal 20px/20px 'Liberation Sans',sans-serif;color:#000;">knots</span>
<span style="left:943px;top:1089px;font:normal 20px/20px 'Liberation Sans',sans-serif;color:#000;">knots</span>
<span style="left:943px;top:1166px;font:normal 20px/20px 'Liberation Sans',sans-serif;color:#000;">knots</span>
<span style="left:943px;top:1192px;font:normal 20px/20px 'Liberation Sans',sans-serif;color:#000;">knots</span>
<span style="left:943px;top:1269px;font:normal 20px/20px 'Liberation Sans',sans-serif;color:#000;">knots</span>
<span style="left:943px;top:1295px;font:normal 20px/20px 'Liberation Sans',sans-serif;color:#000;">knots</span>
<span style="left:943px;top:1321px;font:normal 20px/20px 'Liberation Sans',sans-serif;color:#000;">knots</span>
<span style="left:943px;top:1347px;font:normal 20px/20px 'Liberation Sans',sans-serif;color:#000;">knots</span>
<span style="left:943px;top:1373px;font:normal 20px/20px 'Liberation Sans',sans-serif;color:#000;">knots</span>
<span style="left:943px;top:1399px;font:normal 20px/20px 'Liberation Sans',sans-serif;color:#000;">knots</span>
<span style="left:943px;top:1630px;font:normal 20px/20px 'Liberation Sans',sans-serif;color:#000;">m/s</span>
<span style="left:943px;top:1655px;font:normal 20px/20px 'Liberation Sans',sans-serif;color:#000;">m/s</span>
<span style="left:943px;top:1680px;font:normal 20px/20px 'Liberation Sans',sans-serif;color:#000;">m/s</span>
<span style="left:943px;top:1730px;font:normal 20px/20px 'Liberation Sans',sans-serif;color:#000;">m/s</span>
<svg style="left:531px;top:1318px;" width="8" height="8" viewBox="0 0 8 8"><path d="M0 0 L7.5 0 L0 7.5 Z" fill="#1f7a3c"/></svg>
<svg style="left:855px;top:1292px;" width="8" height="8" viewBox="0 0 8 8"><path d="M0 0 L7.5 0 L0 7.5 Z" fill="#1f7a3c"/></svg>
<svg style="left:855px;top:1344px;" width="8" height="8" viewBox="0 0 8 8"><path d="M0 0 L7.5 0 L0 7.5 Z" fill="#1f7a3c"/></svg>
<div style="left:529px;top:1625px;width:109px;height:24px;border:2px solid #217346;background:transparent"></div>
<div style="left:637px;top:1648px;width:7px;height:7px;background:#fff;"></div>
<div style="left:638px;top:1649px;width:6px;height:6px;background:#217346;"></div>
<svg style="left:1010px;top:318px" width="1182" height="1469" viewBox="1010 318 1182 1469"><rect x="1010" y="318" width="1182" height="1469" fill="#fff"/><g shape-rendering="crispEdges" stroke="#000" stroke-width="1"><line x1="1010.5" y1="318" x2="1010.5" y2="1786"/><line x1="2190.5" y1="318" x2="2190.5" y2="1786"/><line x1="1010" y1="1051.5" x2="2191" y2="1051.5"/><line x1="1010" y1="1785.5" x2="2191" y2="1785.5"/></g><g shape-rendering="crispEdges" stroke="#000" stroke-width="1"><line x1="1107.5" y1="458.6" x2="1107.5" y2="977.2"/><line x1="1148.5" y1="458.6" x2="1148.5" y2="977.2"/><line x1="1190.5" y1="458.6" x2="1190.5" y2="977.2"/><line x1="1232.5" y1="458.6" x2="1232.5" y2="977.2"/><line x1="1273.5" y1="458.6" x2="1273.5" y2="977.2"/><line x1="1315.5" y1="458.6" x2="1315.5" y2="977.2"/><line x1="1357.5" y1="458.6" x2="1357.5" y2="977.2"/><line x1="1398.5" y1="458.6" x2="1398.5" y2="977.2"/><line x1="1440.5" y1="458.6" x2="1440.5" y2="977.2"/><line x1="1482.5" y1="458.6" x2="1482.5" y2="977.2"/><line x1="1523.5" y1="458.6" x2="1523.5" y2="977.2"/><line x1="1565.5" y1="458.6" x2="1565.5" y2="977.2"/><line x1="1607.5" y1="458.6" x2="1607.5" y2="977.2"/><line x1="1648.5" y1="458.6" x2="1648.5" y2="977.2"/><line x1="1690.5" y1="458.6" x2="1690.5" y2="977.2"/><line x1="1732.5" y1="458.6" x2="1732.5" y2="977.2"/><line x1="1773.5" y1="458.6" x2="1773.5" y2="977.2"/><line x1="1815.5" y1="458.6" x2="1815.5" y2="977.2"/><line x1="1857.5" y1="458.6" x2="1857.5" y2="977.2"/><line x1="1898.5" y1="458.6" x2="1898.5" y2="977.2"/><line x1="1940.5" y1="458.6" x2="1940.5" y2="977.2"/><line x1="1982.5" y1="458.6" x2="1982.5" y2="977.2"/><line x1="2023.5" y1="458.6" x2="2023.5" y2="977.2"/><line x1="2065.5" y1="458.6" x2="2065.5" y2="977.2"/><line x1="2107.5" y1="458.6" x2="2107.5" y2="977.2"/><line x1="1101" y1="485.5" x2="2149.0" y2="485.5"/><line x1="1101" y1="540.5" x2="2149.0" y2="540.5"/><line x1="1101" y1="595.5" x2="2149.0" y2="595.5"/><line x1="1101" y1="649.5" x2="2149.0" y2="649.5"/><line x1="1101" y1="704.5" x2="2149.0" y2="704.5"/><line x1="1101" y1="758.5" x2="2149.0" y2="758.5"/><line x1="1101" y1="813.5" x2="2149.0" y2="813.5"/><line x1="1101" y1="867.5" x2="2149.0" y2="867.5"/><line x1="1101" y1="922.5" x2="2149.0" y2="922.5"/><line x1="1102" y1="463.5" x2="1107" y2="463.5"/><line x1="1102" y1="474.5" x2="1107" y2="474.5"/><line x1="1102" y1="485.5" x2="1107" y2="485.5"/><line x1="1102" y1="496.5" x2="1107" y2="496.5"/><line x1="1102" y1="507.5" x2="1107" y2="507.5"/><line x1="1102" y1="518.5" x2="1107" y2="518.5"/><line x1="1102" y1="529.5" x2="1107" y2="529.5"/><line x1="1102" y1="540.5" x2="1107" y2="540.5"/><line x1="1102" y1="551.5" x2="1107" y2="551.5"/><line x1="1102" y1="562.5" x2="1107" y2="562.5"/><line x1="1102" y1="573.5" x2="1107" y2="573.5"/><line x1="1102" y1="584.5" x2="1107" y2="584.5"/><line x1="1102" y1="595.5" x2="1107" y2="595.5"/><line x1="1102" y1="606.5" x2="1107" y2="606.5"/><line x1="1102" y1="617.5" x2="1107" y2="617.5"/><line x1="1102" y1="627.5" x2="1107" y2="627.5"/><line x1="1102" y1="638.5" x2="1107" y2="638.5"/><line x1="1102" y1="649.5" x2="1107" y2="649.5"/><line x1="1102" y1="660.5" x2="1107" y2="660.5"/><line x1="1102" y1="671.5" x2="1107" y2="671.5"/><line x1="1102" y1="682.5" x2="1107" y2="682.5"/><line x1="1102" y1="693.5" x2="1107" y2="693.5"/><line x1="1102" y1="704.5" x2="1107" y2="704.5"/><line x1="1102" y1="715.5" x2="1107" y2="715.5"/><line x1="1102" y1="726.5" x2="1107" y2="726.5"/><line x1="1102" y1="736.5" x2="1107" y2="736.5"/><line x1="1102" y1="747.5" x2="1107" y2="747.5"/><line x1="1102" y1="758.5" x2="1107" y2="758.5"/><line x1="1102" y1="769.5" x2="1107" y2="769.5"/><line x1="1102" y1="780.5" x2="1107" y2="780.5"/><line x1="1102" y1="791.5" x2="1107" y2="791.5"/><line x1="1102" y1="802.5" x2="1107" y2="802.5"/><line x1="1102" y1="813.5" x2="1107" y2="813.5"/><line x1="1102" y1="824.5" x2="1107" y2="824.5"/><line x1="1102" y1="835.5" x2="1107" y2="835.5"/><line x1="1102" y1="846.5" x2="1107" y2="846.5"/><line x1="1102" y1="857.5" x2="1107" y2="857.5"/><line x1="1102" y1="867.5" x2="1107" y2="867.5"/><line x1="1102" y1="878.5" x2="1107" y2="878.5"/><line x1="1102" y1="889.5" x2="1107" y2="889.5"/><line x1="1102" y1="900.5" x2="1107" y2="900.5"/><line x1="1102" y1="911.5" x2="1107" y2="911.5"/><line x1="1102" y1="922.5" x2="1107" y2="922.5"/><line x1="1102" y1="933.5" x2="1107" y2="933.5"/><line x1="1102" y1="944.5" x2="1107" y2="944.5"/><line x1="1102" y1="955.5" x2="1107" y2="955.5"/><line x1="1102" y1="966.5" x2="1107" y2="966.5"/><line x1="1102" y1="977.5" x2="1107" y2="977.5"/><line x1="1115.5" y1="590" x2="1115.5" y2="595"/><line x1="1123.5" y1="590" x2="1123.5" y2="595"/><line x1="1132.5" y1="590" x2="1132.5" y2="595"/><line x1="1140.5" y1="590" x2="1140.5" y2="595"/><line x1="1148.5" y1="590" x2="1148.5" y2="595"/><line x1="1157.5" y1="590" x2="1157.5" y2="595"/><line x1="1165.5" y1="590" x2="1165.5" y2="595"/><line x1="1173.5" y1="590" x2="1173.5" y2="595"/><line x1="1182.5" y1="590" x2="1182.5" y2="595"/><line x1="1190.5" y1="590" x2="1190.5" y2="595"/><line x1="1198.5" y1="590" x2="1198.5" y2="595"/><line x1="1207.5" y1="590" x2="1207.5" y2="595"/><line x1="1215.5" y1="590" x2="1215.5" y2="595"/><line x1="1223.5" y1="590" x2="1223.5" y2="595"/><line x1="1232.5" y1="590" x2="1232.5" y2="595"/><line x1="1240.5" y1="590" x2="1240.5" y2="595"/><line x1="1248.5" y1="590" x2="1248.5" y2="595"/><line x1="1257.5" y1="590" x2="1257.5" y2="595"/><line x1="1265.5" y1="590" x2="1265.5" y2="595"/><line x1="1273.5" y1="590" x2="1273.5" y2="595"/><line x1="1282.5" y1="590" x2="1282.5" y2="595"/><line x1="1290.5" y1="590" x2="1290.5" y2="595"/><line x1="1298.5" y1="590" x2="1298.5" y2="595"/><line x1="1307.5" y1="590" x2="1307.5" y2="595"/><line x1="1315.5" y1="590" x2="1315.5" y2="595"/><line x1="1323.5" y1="590" x2="1323.5" y2="595"/><line x1="1332.5" y1="590" x2="1332.5" y2="595"/><line x1="1340.5" y1="590" x2="1340.5" y2="595"/><line x1="1348.5" y1="590" x2="1348.5" y2="595"/><line x1="1357.5" y1="590" x2="1357.5" y2="595"/><line x1="1365.5" y1="590" x2="1365.5" y2="595"/><line x1="1373.5" y1="590" x2="1373.5" y2="595"/><line x1="1382.5" y1="590" x2="1382.5" y2="595"/><line x1="1390.5" y1="590" x2="1390.5" y2="595"/><line x1="1398.5" y1="590" x2="1398.5" y2="595"/><line x1="1407.5" y1="590" x2="1407.5" y2="595"/><line x1="1415.5" y1="590" x2="1415.5" y2="595"/><line x1="1423.5" y1="590" x2="1423.5" y2="595"/><line x1="1432.5" y1="590" x2="1432.5" y2="595"/><line x1="1440.5" y1="590" x2="1440.5" y2="595"/><line x1="1448.5" y1="590" x2="1448.5" y2="595"/><line x1="1457.5" y1="590" x2="1457.5" y2="595"/><line x1="1465.5" y1="590" x2="1465.5" y2="595"/><line x1="1473.5" y1="590" x2="1473.5" y2="595"/><line x1="1482.5" y1="590" x2="1482.5" y2="595"/><line x1="1490.5" y1="590" x2="1490.5" y2="595"/><line x1="1498.5" y1="590" x2="1498.5" y2="595"/><line x1="1507.5" y1="590" x2="1507.5" y2="595"/><line x1="1515.5" y1="590" x2="1515.5" y2="595"/><line x1="1523.5" y1="590" x2="1523.5" y2="595"/><line x1="1532.5" y1="590" x2="1532.5" y2="595"/><line x1="1540.5" y1="590" x2="1540.5" y2="595"/><line x1="1548.5" y1="590" x2="1548.5" y2="595"/><line x1="1557.5" y1="590" x2="1557.5" y2="595"/><line x1="1565.5" y1="590" x2="1565.5" y2="595"/><line x1="1573.5" y1="590" x2="1573.5" y2="595"/><line x1="1582.5" y1="590" x2="1582.5" y2="595"/><line x1="1590.5" y1="590" x2="1590.5" y2="595"/><line x1="1598.5" y1="590" x2="1598.5" y2="595"/><line x1="1607.5" y1="590" x2="1607.5" y2="595"/><line x1="1615.5" y1="590" x2="1615.5" y2="595"/><line x1="1623.5" y1="590" x2="1623.5" y2="595"/><line x1="1632.5" y1="590" x2="1632.5" y2="595"/><line x1="1640.5" y1="590" x2="1640.5" y2="595"/><line x1="1648.5" y1="590" x2="1648.5" y2="595"/><line x1="1657.5" y1="590" x2="1657.5" y2="595"/><line x1="1665.5" y1="590" x2="1665.5" y2="595"/><line x1="1673.5" y1="590" x2="1673.5" y2="595"/><line x1="1682.5" y1="590" x2="1682.5" y2="595"/><line x1="1690.5" y1="590" x2="1690.5" y2="595"/><line x1="1698.5" y1="590" x2="1698.5" y2="595"/><line x1="1707.5" y1="590" x2="1707.5" y2="595"/><line x1="1715.5" y1="590" x2="1715.5" y2="595"/><line x1="1723.5" y1="590" x2="1723.5" y2="595"/><line x1="1732.5" y1="590" x2="1732.5" y2="595"/><line x1="1740.5" y1="590" x2="1740.5" y2="595"/><line x1="1748.5" y1="590" x2="1748.5" y2="595"/><line x1="1757.5" y1="590" x2="1757.5" y2="595"/><line x1="1765.5" y1="590" x2="1765.5" y2="595"/><line x1="1773.5" y1="590" x2="1773.5" y2="595"/><line x1="1782.5" y1="590" x2="1782.5" y2="595"/><line x1="1790.5" y1="590" x2="1790.5" y2="595"/><line x1="1798.5" y1="590" x2="1798.5" y2="595"/><line x1="1807.5" y1="590" x2="1807.5" y2="595"/><line x1="1815.5" y1="590" x2="1815.5" y2="595"/><line x1="1823.5" y1="590" x2="1823.5" y2="595"/><line x1="1832.5" y1="590" x2="1832.5" y2="595"/><line x1="1840.5" y1="590" x2="1840.5" y2="595"/><line x1="1848.5" y1="590" x2="1848.5" y2="595"/><line x1="1857.5" y1="590" x2="1857.5" y2="595"/><line x1="1865.5" y1="590" x2="1865.5" y2="595"/><line x1="1873.5" y1="590" x2="1873.5" y2="595"/><line x1="1882.5" y1="590" x2="1882.5" y2="595"/><line x1="1890.5" y1="590" x2="1890.5" y2="595"/><line x1="1898.5" y1="590" x2="1898.5" y2="595"/><line x1="1907.5" y1="590" x2="1907.5" y2="595"/><line x1="1915.5" y1="590" x2="1915.5" y2="595"/><line x1="1923.5" y1="590" x2="1923.5" y2="595"/><line x1="1932.5" y1="590" x2="1932.5" y2="595"/><line x1="1940.5" y1="590" x2="1940.5" y2="595"/><line x1="1948.5" y1="590" x2="1948.5" y2="595"/><line x1="1957.5" y1="590" x2="1957.5" y2="595"/><line x1="1965.5" y1="590" x2="1965.5" y2="595"/><line x1="1973.5" y1="590" x2="1973.5" y2="595"/><line x1="1982.5" y1="590" x2="1982.5" y2="595"/><line x1="1990.5" y1="590" x2="1990.5" y2="595"/><line x1="1998.5" y1="590" x2="1998.5" y2="595"/><line x1="2007.5" y1="590" x2="2007.5" y2="595"/><line x1="2015.5" y1="590" x2="2015.5" y2="595"/><line x1="2023.5" y1="590" x2="2023.5" y2="595"/><line x1="2032.5" y1="590" x2="2032.5" y2="595"/><line x1="2040.5" y1="590" x2="2040.5" y2="595"/><line x1="2048.5" y1="590" x2="2048.5" y2="595"/><line x1="2057.5" y1="590" x2="2057.5" y2="595"/><line x1="2065.5" y1="590" x2="2065.5" y2="595"/><line x1="2073.5" y1="590" x2="2073.5" y2="595"/><line x1="2082.5" y1="590" x2="2082.5" y2="595"/><line x1="2090.5" y1="590" x2="2090.5" y2="595"/><line x1="2098.5" y1="590" x2="2098.5" y2="595"/><line x1="2107.5" y1="590" x2="2107.5" y2="595"/><line x1="2115.5" y1="590" x2="2115.5" y2="595"/><line x1="2123.5" y1="590" x2="2123.5" y2="595"/><line x1="2132.5" y1="590" x2="2132.5" y2="595"/><line x1="2140.5" y1="590" x2="2140.5" y2="595"/><line x1="2149.5" y1="590" x2="2149.5" y2="595"/></g><g stroke="#808080" stroke-width="1.7" fill="none"><path d="M1107 458.2 L2149.2 458.2 L2149.2 977.2 L1107 977.2"/></g><g shape-rendering="crispEdges" stroke="#000"><line x1="1101" y1="977.5" x2="1107" y2="977.5"/></g><polyline points="1107.5,668.1 1115.8,666.2 1124.2,664.5 1132.5,662.7 1140.8,661.0 1149.2,659.3 1157.5,657.7 1165.9,656.1 1174.2,654.6 1182.5,653.1 1190.9,651.7 1199.2,650.2 1207.5,648.9 1215.9,647.6 1224.2,646.3 1232.5,645.1 1240.9,643.9 1249.2,642.7 1257.5,641.6 1265.9,640.6 1274.2,639.5 1282.6,638.5 1290.9,637.6 1299.2,636.7 1307.6,635.8 1315.9,635.0 1324.2,634.3 1332.6,633.5 1340.9,632.8 1349.2,632.2 1357.6,631.6 1365.9,631.0 1374.3,630.5 1382.6,630.0 1390.9,629.6 1399.3,629.2 1407.6,628.8 1415.9,628.5 1424.3,628.2 1432.6,628.0 1440.9,627.8 1449.3,627.6 1457.6,627.5 1465.9,627.4 1474.3,627.4 1482.6,627.4 1491.0,627.5 1499.3,627.6 1507.6,627.7 1516.0,627.9 1524.3,628.1 1532.6,628.4 1541.0,628.7 1549.3,629.0 1557.6,629.4 1566.0,629.8 1574.3,630.3 1582.7,630.8 1591.0,631.4 1599.3,632.0 1607.7,632.6 1616.0,633.3 1624.3,634.0 1632.7,634.7 1641.0,635.5 1649.3,636.4 1657.7,637.3 1666.0,638.2 1674.3,639.2 1682.7,640.2 1691.0,641.2 1699.4,642.3 1707.7,643.4 1716.0,644.6 1724.4,645.8 1732.7,647.1 1741.0,648.4 1749.4,649.7 1757.7,651.1 1766.0,652.6 1774.4,654.0 1782.7,655.6 1791.1,657.1 1799.4,658.7 1807.7,660.4 1816.1,662.1 1824.4,663.8 1832.7,665.6 1841.1,667.4 1849.4,669.3 1857.7,671.2 1866.1,673.1 1874.4,675.1 1882.7,677.1 1891.1,679.2 1899.4,681.3 1907.8,683.4 1916.1,685.6 1924.4,687.9 1932.8,690.2 1941.1,692.5 1949.4,694.8 1957.8,697.2 1966.1,699.7 1974.4,702.2 1982.8,704.7 1991.1,707.2 1999.5,709.8 2007.8,712.4 2016.1,715.1 2024.5,717.8 2032.8,720.6 2041.1,723.4 2049.5,726.2 2057.8,729.1 2066.1,732.0 2074.5,734.9 2082.8,737.9 2091.1,741.0 2099.5,744.1 2107.8,747.2 2116.2,750.4 2124.5,753.6 2132.8,756.8 2141.2,760.1 2149.5,763.5" fill="none" stroke="#000088" stroke-width="2.1"/><clipPath id="cp1"><rect x="1107" y="458" width="1043" height="520"/></clipPath><line clip-path="url(#cp1)" x1="1107.5" y1="454.8" x2="2149.5" y2="751.7" stroke="#d8000c" stroke-width="2"/><path d="M1107 458 H1110 V596.5 L1107 599 Z" fill="#c1494c"/><g shape-rendering="crispEdges" stroke="#000" stroke-width="1"><line x1="1118.5" y1="1217.5" x2="1118.5" y2="1710.9"/><line x1="1156.5" y1="1217.5" x2="1156.5" y2="1710.9"/><line x1="1194.5" y1="1217.5" x2="1194.5" y2="1710.9"/><line x1="1232.5" y1="1217.5" x2="1232.5" y2="1710.9"/><line x1="1271.5" y1="1217.5" x2="1271.5" y2="1710.9"/><line x1="1309.5" y1="1217.5" x2="1309.5" y2="1710.9"/><line x1="1347.5" y1="1217.5" x2="1347.5" y2="1710.9"/><line x1="1385.5" y1="1217.5" x2="1385.5" y2="1710.9"/><line x1="1424.5" y1="1217.5" x2="1424.5" y2="1710.9"/><line x1="1462.5" y1="1217.5" x2="1462.5" y2="1710.9"/><line x1="1500.5" y1="1217.5" x2="1500.5" y2="1710.9"/><line x1="1538.5" y1="1217.5" x2="1538.5" y2="1710.9"/><line x1="1577.5" y1="1217.5" x2="1577.5" y2="1710.9"/><line x1="1615.5" y1="1217.5" x2="1615.5" y2="1710.9"/><line x1="1653.5" y1="1217.5" x2="1653.5" y2="1710.9"/><line x1="1692.5" y1="1217.5" x2="1692.5" y2="1710.9"/><line x1="1730.5" y1="1217.5" x2="1730.5" y2="1710.9"/><line x1="1768.5" y1="1217.5" x2="1768.5" y2="1710.9"/><line x1="1806.5" y1="1217.5" x2="1806.5" y2="1710.9"/><line x1="1845.5" y1="1217.5" x2="1845.5" y2="1710.9"/><line x1="1883.5" y1="1217.5" x2="1883.5" y2="1710.9"/><line x1="1921.5" y1="1217.5" x2="1921.5" y2="1710.9"/><line x1="1959.5" y1="1217.5" x2="1959.5" y2="1710.9"/><line x1="1998.5" y1="1217.5" x2="1998.5" y2="1710.9"/><line x1="2036.5" y1="1217.5" x2="2036.5" y2="1710.9"/><line x1="2074.5" y1="1217.5" x2="2074.5" y2="1710.9"/><line x1="2113.5" y1="1217.5" x2="2113.5" y2="1710.9"/><line x1="1112" y1="1243.5" x2="2151.3" y2="1243.5"/><line x1="1112" y1="1269.5" x2="2151.3" y2="1269.5"/><line x1="1112" y1="1295.5" x2="2151.3" y2="1295.5"/><line x1="1112" y1="1321.5" x2="2151.3" y2="1321.5"/><line x1="1112" y1="1347.5" x2="2151.3" y2="1347.5"/><line x1="1112" y1="1373.5" x2="2151.3" y2="1373.5"/><line x1="1112" y1="1399.5" x2="2151.3" y2="1399.5"/><line x1="1112" y1="1425.5" x2="2151.3" y2="1425.5"/><line x1="1112" y1="1451.5" x2="2151.3" y2="1451.5"/><line x1="1112" y1="1477.5" x2="2151.3" y2="1477.5"/><line x1="1112" y1="1503.5" x2="2151.3" y2="1503.5"/><line x1="1112" y1="1529.5" x2="2151.3" y2="1529.5"/><line x1="1112" y1="1555.5" x2="2151.3" y2="1555.5"/><line x1="1112" y1="1581.5" x2="2151.3" y2="1581.5"/><line x1="1112" y1="1607.5" x2="2151.3" y2="1607.5"/><line x1="1112" y1="1633.5" x2="2151.3" y2="1633.5"/><line x1="1112" y1="1658.5" x2="2151.3" y2="1658.5"/><line x1="1112" y1="1684.5" x2="2151.3" y2="1684.5"/><line x1="1113" y1="1222.5" x2="1118" y2="1222.5"/><line x1="1113" y1="1227.5" x2="1118" y2="1227.5"/><line x1="1113" y1="1233.5" x2="1118" y2="1233.5"/><line x1="1113" y1="1238.5" x2="1118" y2="1238.5"/><line x1="1113" y1="1243.5" x2="1118" y2="1243.5"/><line x1="1113" y1="1248.5" x2="1118" y2="1248.5"/><line x1="1113" y1="1253.5" x2="1118" y2="1253.5"/><line x1="1113" y1="1259.5" x2="1118" y2="1259.5"/><line x1="1113" y1="1264.5" x2="1118" y2="1264.5"/><line x1="1113" y1="1269.5" x2="1118" y2="1269.5"/><line x1="1113" y1="1274.5" x2="1118" y2="1274.5"/><line x1="1113" y1="1279.5" x2="1118" y2="1279.5"/><line x1="1113" y1="1285.5" x2="1118" y2="1285.5"/><line x1="1113" y1="1290.5" x2="1118" y2="1290.5"/><line x1="1113" y1="1295.5" x2="1118" y2="1295.5"/><line x1="1113" y1="1300.5" x2="1118" y2="1300.5"/><line x1="1113" y1="1305.5" x2="1118" y2="1305.5"/><line x1="1113" y1="1310.5" x2="1118" y2="1310.5"/><line x1="1113" y1="1316.5" x2="1118" y2="1316.5"/><line x1="1113" y1="1321.5" x2="1118" y2="1321.5"/><line x1="1113" y1="1326.5" x2="1118" y2="1326.5"/><line x1="1113" y1="1331.5" x2="1118" y2="1331.5"/><line x1="1113" y1="1336.5" x2="1118" y2="1336.5"/><line x1="1113" y1="1342.5" x2="1118" y2="1342.5"/><line x1="1113" y1="1347.5" x2="1118" y2="1347.5"/><line x1="1113" y1="1352.5" x2="1118" y2="1352.5"/><line x1="1113" y1="1357.5" x2="1118" y2="1357.5"/><line x1="1113" y1="1362.5" x2="1118" y2="1362.5"/><line x1="1113" y1="1368.5" x2="1118" y2="1368.5"/><line x1="1113" y1="1373.5" x2="1118" y2="1373.5"/><line x1="1113" y1="1378.5" x2="1118" y2="1378.5"/><line x1="1113" y1="1383.5" x2="1118" y2="1383.5"/><line x1="1113" y1="1388.5" x2="1118" y2="1388.5"/><line x1="1113" y1="1394.5" x2="1118" y2="1394.5"/><line x1="1113" y1="1399.5" x2="1118" y2="1399.5"/><line x1="1113" y1="1404.5" x2="1118" y2="1404.5"/><line x1="1113" y1="1409.5" x2="1118" y2="1409.5"/><line x1="1113" y1="1414.5" x2="1118" y2="1414.5"/><line x1="1113" y1="1420.5" x2="1118" y2="1420.5"/><line x1="1113" y1="1425.5" x2="1118" y2="1425.5"/><line x1="1113" y1="1430.5" x2="1118" y2="1430.5"/><line x1="1113" y1="1435.5" x2="1118" y2="1435.5"/><line x1="1113" y1="1440.5" x2="1118" y2="1440.5"/><line x1="1113" y1="1446.5" x2="1118" y2="1446.5"/><line x1="1113" y1="1451.5" x2="1118" y2="1451.5"/><line x1="1113" y1="1456.5" x2="1118" y2="1456.5"/><line x1="1113" y1="1461.5" x2="1118" y2="1461.5"/><line x1="1113" y1="1466.5" x2="1118" y2="1466.5"/><line x1="1113" y1="1472.5" x2="1118" y2="1472.5"/><line x1="1113" y1="1477.5" x2="1118" y2="1477.5"/><line x1="1113" y1="1482.5" x2="1118" y2="1482.5"/><line x1="1113" y1="1487.5" x2="1118" y2="1487.5"/><line x1="1113" y1="1492.5" x2="1118" y2="1492.5"/><line x1="1113" y1="1497.5" x2="1118" y2="1497.5"/><line x1="1113" y1="1503.5" x2="1118" y2="1503.5"/><line x1="1113" y1="1508.5" x2="1118" y2="1508.5"/><line x1="1113" y1="1513.5" x2="1118" y2="1513.5"/><line x1="1113" y1="1518.5" x2="1118" y2="1518.5"/><line x1="1113" y1="1523.5" x2="1118" y2="1523.5"/><line x1="1113" y1="1529.5" x2="1118" y2="1529.5"/><line x1="1113" y1="1534.5" x2="1118" y2="1534.5"/><line x1="1113" y1="1539.5" x2="1118" y2="1539.5"/><line x1="1113" y1="1544.5" x2="1118" y2="1544.5"/><line x1="1113" y1="1549.5" x2="1118" y2="1549.5"/><line x1="1113" y1="1555.5" x2="1118" y2="1555.5"/><line x1="1113" y1="1560.5" x2="1118" y2="1560.5"/><line x1="1113" y1="1565.5" x2="1118" y2="1565.5"/><line x1="1113" y1="1570.5" x2="1118" y2="1570.5"/><line x1="1113" y1="1575.5" x2="1118" y2="1575.5"/><line x1="1113" y1="1581.5" x2="1118" y2="1581.5"/><line x1="1113" y1="1586.5" x2="1118" y2="1586.5"/><line x1="1113" y1="1591.5" x2="1118" y2="1591.5"/><line x1="1113" y1="1596.5" x2="1118" y2="1596.5"/><line x1="1113" y1="1601.5" x2="1118" y2="1601.5"/><line x1="1113" y1="1607.5" x2="1118" y2="1607.5"/><line x1="1113" y1="1612.5" x2="1118" y2="1612.5"/><line x1="1113" y1="1617.5" x2="1118" y2="1617.5"/><line x1="1113" y1="1622.5" x2="1118" y2="1622.5"/><line x1="1113" y1="1627.5" x2="1118" y2="1627.5"/><line x1="1113" y1="1633.5" x2="1118" y2="1633.5"/><line x1="1113" y1="1638.5" x2="1118" y2="1638.5"/><line x1="1113" y1="1643.5" x2="1118" y2="1643.5"/><line x1="1113" y1="1648.5" x2="1118" y2="1648.5"/><line x1="1113" y1="1653.5" x2="1118" y2="1653.5"/><line x1="1113" y1="1658.5" x2="1118" y2="1658.5"/><line x1="1113" y1="1664.5" x2="1118" y2="1664.5"/><line x1="1113" y1="1669.5" x2="1118" y2="1669.5"/><line x1="1113" y1="1674.5" x2="1118" y2="1674.5"/><line x1="1113" y1="1679.5" x2="1118" y2="1679.5"/><line x1="1113" y1="1684.5" x2="1118" y2="1684.5"/><line x1="1113" y1="1690.5" x2="1118" y2="1690.5"/><line x1="1113" y1="1695.5" x2="1118" y2="1695.5"/><line x1="1113" y1="1700.5" x2="1118" y2="1700.5"/><line x1="1113" y1="1705.5" x2="1118" y2="1705.5"/><line x1="1113" y1="1710.5" x2="1118" y2="1710.5"/><line x1="1125.5" y1="1342" x2="1125.5" y2="1347"/><line x1="1133.5" y1="1342" x2="1133.5" y2="1347"/><line x1="1140.5" y1="1342" x2="1140.5" y2="1347"/><line x1="1148.5" y1="1342" x2="1148.5" y2="1347"/><line x1="1156.5" y1="1342" x2="1156.5" y2="1347"/><line x1="1163.5" y1="1342" x2="1163.5" y2="1347"/><line x1="1171.5" y1="1342" x2="1171.5" y2="1347"/><line x1="1179.5" y1="1342" x2="1179.5" y2="1347"/><line x1="1186.5" y1="1342" x2="1186.5" y2="1347"/><line x1="1194.5" y1="1342" x2="1194.5" y2="1347"/><line x1="1202.5" y1="1342" x2="1202.5" y2="1347"/><line x1="1209.5" y1="1342" x2="1209.5" y2="1347"/><line x1="1217.5" y1="1342" x2="1217.5" y2="1347"/><line x1="1225.5" y1="1342" x2="1225.5" y2="1347"/><line x1="1232.5" y1="1342" x2="1232.5" y2="1347"/><line x1="1240.5" y1="1342" x2="1240.5" y2="1347"/><line x1="1248.5" y1="1342" x2="1248.5" y2="1347"/><line x1="1255.5" y1="1342" x2="1255.5" y2="1347"/><line x1="1263.5" y1="1342" x2="1263.5" y2="1347"/><line x1="1271.5" y1="1342" x2="1271.5" y2="1347"/><line x1="1278.5" y1="1342" x2="1278.5" y2="1347"/><line x1="1286.5" y1="1342" x2="1286.5" y2="1347"/><line x1="1294.5" y1="1342" x2="1294.5" y2="1347"/><line x1="1301.5" y1="1342" x2="1301.5" y2="1347"/><line x1="1309.5" y1="1342" x2="1309.5" y2="1347"/><line x1="1317.5" y1="1342" x2="1317.5" y2="1347"/><line x1="1324.5" y1="1342" x2="1324.5" y2="1347"/><line x1="1332.5" y1="1342" x2="1332.5" y2="1347"/><line x1="1339.5" y1="1342" x2="1339.5" y2="1347"/><line x1="1347.5" y1="1342" x2="1347.5" y2="1347"/><line x1="1355.5" y1="1342" x2="1355.5" y2="1347"/><line x1="1362.5" y1="1342" x2="1362.5" y2="1347"/><line x1="1370.5" y1="1342" x2="1370.5" y2="1347"/><line x1="1378.5" y1="1342" x2="1378.5" y2="1347"/><line x1="1385.5" y1="1342" x2="1385.5" y2="1347"/><line x1="1393.5" y1="1342" x2="1393.5" y2="1347"/><line x1="1401.5" y1="1342" x2="1401.5" y2="1347"/><line x1="1408.5" y1="1342" x2="1408.5" y2="1347"/><line x1="1416.5" y1="1342" x2="1416.5" y2="1347"/><line x1="1424.5" y1="1342" x2="1424.5" y2="1347"/><line x1="1431.5" y1="1342" x2="1431.5" y2="1347"/><line x1="1439.5" y1="1342" x2="1439.5" y2="1347"/><line x1="1447.5" y1="1342" x2="1447.5" y2="1347"/><line x1="1454.5" y1="1342" x2="1454.5" y2="1347"/><line x1="1462.5" y1="1342" x2="1462.5" y2="1347"/><line x1="1470.5" y1="1342" x2="1470.5" y2="1347"/><line x1="1477.5" y1="1342" x2="1477.5" y2="1347"/><line x1="1485.5" y1="1342" x2="1485.5" y2="1347"/><line x1="1493.5" y1="1342" x2="1493.5" y2="1347"/><line x1="1500.5" y1="1342" x2="1500.5" y2="1347"/><line x1="1508.5" y1="1342" x2="1508.5" y2="1347"/><line x1="1516.5" y1="1342" x2="1516.5" y2="1347"/><line x1="1523.5" y1="1342" x2="1523.5" y2="1347"/><line x1="1531.5" y1="1342" x2="1531.5" y2="1347"/><line x1="1538.5" y1="1342" x2="1538.5" y2="1347"/><line x1="1546.5" y1="1342" x2="1546.5" y2="1347"/><line x1="1554.5" y1="1342" x2="1554.5" y2="1347"/><line x1="1561.5" y1="1342" x2="1561.5" y2="1347"/><line x1="1569.5" y1="1342" x2="1569.5" y2="1347"/><line x1="1577.5" y1="1342" x2="1577.5" y2="1347"/><line x1="1584.5" y1="1342" x2="1584.5" y2="1347"/><line x1="1592.5" y1="1342" x2="1592.5" y2="1347"/><line x1="1600.5" y1="1342" x2="1600.5" y2="1347"/><line x1="1607.5" y1="1342" x2="1607.5" y2="1347"/><line x1="1615.5" y1="1342" x2="1615.5" y2="1347"/><line x1="1623.5" y1="1342" x2="1623.5" y2="1347"/><line x1="1630.5" y1="1342" x2="1630.5" y2="1347"/><line x1="1638.5" y1="1342" x2="1638.5" y2="1347"/><line x1="1646.5" y1="1342" x2="1646.5" y2="1347"/><line x1="1653.5" y1="1342" x2="1653.5" y2="1347"/><line x1="1661.5" y1="1342" x2="1661.5" y2="1347"/><line x1="1669.5" y1="1342" x2="1669.5" y2="1347"/><line x1="1676.5" y1="1342" x2="1676.5" y2="1347"/><line x1="1684.5" y1="1342" x2="1684.5" y2="1347"/><line x1="1692.5" y1="1342" x2="1692.5" y2="1347"/><line x1="1699.5" y1="1342" x2="1699.5" y2="1347"/><line x1="1707.5" y1="1342" x2="1707.5" y2="1347"/><line x1="1715.5" y1="1342" x2="1715.5" y2="1347"/><line x1="1722.5" y1="1342" x2="1722.5" y2="1347"/><line x1="1730.5" y1="1342" x2="1730.5" y2="1347"/><line x1="1737.5" y1="1342" x2="1737.5" y2="1347"/><line x1="1745.5" y1="1342" x2="1745.5" y2="1347"/><line x1="1753.5" y1="1342" x2="1753.5" y2="1347"/><line x1="1760.5" y1="1342" x2="1760.5" y2="1347"/><line x1="1768.5" y1="1342" x2="1768.5" y2="1347"/><line x1="1776.5" y1="1342" x2="1776.5" y2="1347"/><line x1="1783.5" y1="1342" x2="1783.5" y2="1347"/><line x1="1791.5" y1="1342" x2="1791.5" y2="1347"/><line x1="1799.5" y1="1342" x2="1799.5" y2="1347"/><line x1="1806.5" y1="1342" x2="1806.5" y2="1347"/><line x1="1814.5" y1="1342" x2="1814.5" y2="1347"/><line x1="1822.5" y1="1342" x2="1822.5" y2="1347"/><line x1="1829.5" y1="1342" x2="1829.5" y2="1347"/><line x1="1837.5" y1="1342" x2="1837.5" y2="1347"/><line x1="1845.5" y1="1342" x2="1845.5" y2="1347"/><line x1="1852.5" y1="1342" x2="1852.5" y2="1347"/><line x1="1860.5" y1="1342" x2="1860.5" y2="1347"/><line x1="1868.5" y1="1342" x2="1868.5" y2="1347"/><line x1="1875.5" y1="1342" x2="1875.5" y2="1347"/><line x1="1883.5" y1="1342" x2="1883.5" y2="1347"/><line x1="1891.5" y1="1342" x2="1891.5" y2="1347"/><line x1="1898.5" y1="1342" x2="1898.5" y2="1347"/><line x1="1906.5" y1="1342" x2="1906.5" y2="1347"/><line x1="1914.5" y1="1342" x2="1914.5" y2="1347"/><line x1="1921.5" y1="1342" x2="1921.5" y2="1347"/><line x1="1929.5" y1="1342" x2="1929.5" y2="1347"/><line x1="1936.5" y1="1342" x2="1936.5" y2="1347"/><line x1="1944.5" y1="1342" x2="1944.5" y2="1347"/><line x1="1952.5" y1="1342" x2="1952.5" y2="1347"/><line x1="1959.5" y1="1342" x2="1959.5" y2="1347"/><line x1="1967.5" y1="1342" x2="1967.5" y2="1347"/><line x1="1975.5" y1="1342" x2="1975.5" y2="1347"/><line x1="1982.5" y1="1342" x2="1982.5" y2="1347"/><line x1="1990.5" y1="1342" x2="1990.5" y2="1347"/><line x1="1998.5" y1="1342" x2="1998.5" y2="1347"/><line x1="2005.5" y1="1342" x2="2005.5" y2="1347"/><line x1="2013.5" y1="1342" x2="2013.5" y2="1347"/><line x1="2021.5" y1="1342" x2="2021.5" y2="1347"/><line x1="2028.5" y1="1342" x2="2028.5" y2="1347"/><line x1="2036.5" y1="1342" x2="2036.5" y2="1347"/><line x1="2044.5" y1="1342" x2="2044.5" y2="1347"/><line x1="2051.5" y1="1342" x2="2051.5" y2="1347"/><line x1="2059.5" y1="1342" x2="2059.5" y2="1347"/><line x1="2067.5" y1="1342" x2="2067.5" y2="1347"/><line x1="2074.5" y1="1342" x2="2074.5" y2="1347"/><line x1="2082.5" y1="1342" x2="2082.5" y2="1347"/><line x1="2090.5" y1="1342" x2="2090.5" y2="1347"/><line x1="2097.5" y1="1342" x2="2097.5" y2="1347"/><line x1="2105.5" y1="1342" x2="2105.5" y2="1347"/><line x1="2113.5" y1="1342" x2="2113.5" y2="1347"/><line x1="2120.5" y1="1342" x2="2120.5" y2="1347"/><line x1="2128.5" y1="1342" x2="2128.5" y2="1347"/><line x1="2135.5" y1="1342" x2="2135.5" y2="1347"/><line x1="2143.5" y1="1342" x2="2143.5" y2="1347"/><line x1="2151.5" y1="1342" x2="2151.5" y2="1347"/></g><g stroke="#808080" stroke-width="1.7" fill="none"><path d="M1118 1217.2 L2151.2 1217.2 L2151.2 1710.2 L1118 1710.2"/></g><g shape-rendering="crispEdges" stroke="#000"><line x1="1112" y1="1710.5" x2="1118" y2="1710.5"/></g><polyline points="1118.5,1414.9 1126.2,1413.3 1133.8,1411.8 1141.5,1410.3 1149.1,1408.8 1156.8,1407.4 1164.4,1406.0 1172.1,1404.6 1179.7,1403.3 1187.4,1402.0 1195.0,1400.7 1202.7,1399.5 1210.3,1398.3 1218.0,1397.1 1225.7,1396.0 1233.3,1394.9 1241.0,1393.8 1248.6,1392.8 1256.3,1391.8 1263.9,1390.8 1271.6,1389.9 1279.2,1389.0 1286.9,1388.1 1294.5,1387.3 1302.2,1386.5 1309.8,1385.7 1317.5,1385.0 1325.2,1384.3 1332.8,1383.6 1340.5,1383.0 1348.1,1382.4 1355.8,1381.8 1363.4,1381.3 1371.1,1380.8 1378.7,1380.3 1386.4,1379.9 1394.0,1379.4 1401.7,1379.1 1409.4,1378.7 1417.0,1378.4 1424.7,1378.2 1432.3,1377.9 1440.0,1377.7 1447.6,1377.5 1455.3,1377.4 1462.9,1377.3 1470.6,1377.2 1478.2,1377.2 1485.9,1377.2 1493.5,1377.2 1501.2,1377.3 1508.9,1377.4 1516.5,1377.5 1524.2,1377.6 1531.8,1377.8 1539.5,1378.1 1547.1,1378.3 1554.8,1378.6 1562.4,1378.9 1570.1,1379.3 1577.7,1379.7 1585.4,1380.1 1593.0,1380.6 1600.7,1381.0 1608.4,1381.6 1616.0,1382.1 1623.7,1382.7 1631.3,1383.3 1639.0,1384.0 1646.6,1384.7 1654.3,1385.4 1661.9,1386.2 1669.6,1386.9 1677.2,1387.8 1684.9,1388.6 1692.5,1389.5 1700.2,1390.4 1707.9,1391.4 1715.5,1392.4 1723.2,1393.4 1730.8,1394.4 1738.5,1395.5 1746.1,1396.6 1753.8,1397.8 1761.4,1399.0 1769.1,1400.2 1776.7,1401.5 1784.4,1402.7 1792.1,1404.1 1799.7,1405.4 1807.4,1406.8 1815.0,1408.2 1822.7,1409.7 1830.3,1411.1 1838.0,1412.7 1845.6,1414.2 1853.3,1415.8 1860.9,1417.4 1868.6,1419.1 1876.2,1420.7 1883.9,1422.5 1891.6,1424.2 1899.2,1426.0 1906.9,1427.8 1914.5,1429.6 1922.2,1431.5 1929.8,1433.4 1937.5,1435.4 1945.1,1437.4 1952.8,1439.4 1960.4,1441.4 1968.1,1443.5 1975.7,1445.6 1983.4,1447.8 1991.1,1449.9 1998.7,1452.2 2006.4,1454.4 2014.0,1456.7 2021.7,1459.0 2029.3,1461.3 2037.0,1463.7 2044.6,1466.1 2052.3,1468.6 2059.9,1471.0 2067.6,1473.6 2075.2,1476.1 2082.9,1478.7 2090.6,1481.3 2098.2,1483.9 2105.9,1486.6 2113.5,1489.3 2121.2,1492.0 2128.8,1494.8 2136.5,1497.6 2144.1,1500.5 2151.8,1503.3" fill="none" stroke="#000088" stroke-width="2.1"/><line x1="1118.5" y1="1218.1" x2="2151.8" y2="1492.3" stroke="#d8000c" stroke-width="2"/><path d="M1118 1217 H1121 V1348.5 L1118 1351 Z" fill="#c1494c"/></svg>
<span style="left:807.5px;width:600px;text-align:center;top:425px;font:normal 20px/20px 'Liberation Sans',sans-serif;color:#000;">0</span>
<span style="left:848.5px;width:600px;text-align:center;top:425px;font:normal 20px/20px 'Liberation Sans',sans-serif;color:#000;">10</span>
<span style="left:890.5px;width:600px;text-align:center;top:425px;font:normal 20px/20px 'Liberation Sans',sans-serif;color:#000;">20</span>
<span style="left:932.5px;width:600px;text-align:center;top:425px;font:normal 20px/20px 'Liberation Sans',sans-serif;color:#000;">30</span>
<span style="left:973.5px;width:600px;text-align:center;top:425px;font:normal 20px/20px 'Liberation Sans',sans-serif;color:#000;">40</span>
<span style="left:1015.5px;width:600px;text-align:center;top:425px;font:normal 20px/20px 'Liberation Sans',sans-serif;color:#000;">50</span>
<span style="left:1057.5px;width:600px;text-align:center;top:425px;font:normal 20px/20px 'Liberation Sans',sans-serif;color:#000;">60</span>
<span style="left:1098.5px;width:600px;text-align:center;top:425px;font:normal 20px/20px 'Liberation Sans',sans-serif;color:#000;">70</span>
<span style="left:1140.5px;width:600px;text-align:center;top:425px;font:normal 20px/20px 'Liberation Sans',sans-serif;color:#000;">80</span>
<span style="left:1182.5px;width:600px;text-align:center;top:425px;font:normal 20px/20px 'Liberation Sans',sans-serif;color:#000;">90</span>
<span style="left:1223.5px;width:600px;text-align:center;top:425px;font:normal 20px/20px 'Liberation Sans',sans-serif;color:#000;">100</span>
<span style="left:1265.5px;width:600px;text-align:center;top:425px;font:normal 20px/20px 'Liberation Sans',sans-serif;color:#000;">110</span>
<span style="left:1307.5px;width:600px;text-align:center;top:425px;font:normal 20px/20px 'Liberation Sans',sans-serif;color:#000;">120</span>
<span style="left:1348.5px;width:600px;text-align:center;top:425px;font:normal 20px/20px 'Liberation Sans',sans-serif;color:#000;">130</span>
<span style="left:1390.5px;width:600px;text-align:center;top:425px;font:normal 20px/20px 'Liberation Sans',sans-serif;color:#000;">140</span>
<span style="left:1432.5px;width:600px;text-align:center;top:425px;font:normal 20px/20px 'Liberation Sans',sans-serif;color:#000;">150</span>
<span style="left:1473.5px;width:600px;text-align:center;top:425px;font:normal 20px/20px 'Liberation Sans',sans-serif;color:#000;">160</span>
<span style="left:1515.5px;width:600px;text-align:center;top:425px;font:normal 20px/20px 'Liberation Sans',sans-serif;color:#000;">170</span>
<span style="left:1557.5px;width:600px;text-align:center;top:425px;font:normal 20px/20px 'Liberation Sans',sans-serif;color:#000;">180</span>
<span style="left:1598.5px;width:600px;text-align:center;top:425px;font:normal 20px/20px 'Liberation Sans',sans-serif;color:#000;">190</span>
<span style="left:1640.5px;width:600px;text-align:center;top:425px;font:normal 20px/20px 'Liberation Sans',sans-serif;color:#000;">200</span>
<span style="left:1682.5px;width:600px;text-align:center;top:425px;font:normal 20px/20px 'Liberation Sans',sans-serif;color:#000;">210</span>
<span style="left:1723.5px;width:600px;text-align:center;top:425px;font:normal 20px/20px 'Liberation Sans',sans-serif;color:#000;">220</span>
<span style="left:1765.5px;width:600px;text-align:center;top:425px;font:normal 20px/20px 'Liberation Sans',sans-serif;color:#000;">230</span>
<span style="left:1807.5px;width:600px;text-align:center;top:425px;font:normal 20px/20px 'Liberation Sans',sans-serif;color:#000;">240</span>
<span style="left:1849.5px;width:600px;text-align:center;top:425px;font:normal 20px/20px 'Liberation Sans',sans-serif;color:#000;">250</span>
<span style="left:490px;width:600px;text-align:right;top:475px;font:normal 20px/20px 'Liberation Sans',sans-serif;color:#000;">2</span>
<span style="left:490px;width:600px;text-align:right;top:530px;font:normal 20px/20px 'Liberation Sans',sans-serif;color:#000;">1</span>
<span style="left:490px;width:600px;text-align:right;top:585px;font:normal 20px/20px 'Liberation Sans',sans-serif;color:#000;">0</span>
<span style="left:490px;width:600px;text-align:right;top:639px;font:normal 20px/20px 'Liberation Sans',sans-serif;color:#000;">-1</span>
<span style="left:490px;width:600px;text-align:right;top:694px;font:normal 20px/20px 'Liberation Sans',sans-serif;color:#000;">-2</span>
<span style="left:490px;width:600px;text-align:right;top:748px;font:normal 20px/20px 'Liberation Sans',sans-serif;color:#000;">-3</span>
<span style="left:490px;width:600px;text-align:right;top:803px;font:normal 20px/20px 'Liberation Sans',sans-serif;color:#000;">-4</span>
<span style="left:490px;width:600px;text-align:right;top:857px;font:normal 20px/20px 'Liberation Sans',sans-serif;color:#000;">-5</span>
<span style="left:490px;width:600px;text-align:right;top:912px;font:normal 20px/20px 'Liberation Sans',sans-serif;color:#000;">-6</span>
<span style="left:490px;width:600px;text-align:right;top:967px;font:normal 20px/20px 'Liberation Sans',sans-serif;color:#000;">-7</span>
<span style="left:818.5px;width:600px;text-align:center;top:1184px;font:normal 20px/20px 'Liberation Sans',sans-serif;color:#000;">0</span>
<span style="left:856.5px;width:600px;text-align:center;top:1184px;font:normal 20px/20px 'Liberation Sans',sans-serif;color:#000;">5</span>
<span style="left:894.5px;width:600px;text-align:center;top:1184px;font:normal 20px/20px 'Liberation Sans',sans-serif;color:#000;">10</span>
<span style="left:932.5px;width:600px;text-align:center;top:1184px;font:normal 20px/20px 'Liberation Sans',sans-serif;color:#000;">15</span>
<span style="left:971.5px;width:600px;text-align:center;top:1184px;font:normal 20px/20px 'Liberation Sans',sans-serif;color:#000;">20</span>
<span style="left:1009.5px;width:600px;text-align:center;top:1184px;font:normal 20px/20px 'Liberation Sans',sans-serif;color:#000;">25</span>
<span style="left:1047.5px;width:600px;text-align:center;top:1184px;font:normal 20px/20px 'Liberation Sans',sans-serif;color:#000;">30</span>
<span style="left:1085.5px;width:600px;text-align:center;top:1184px;font:normal 20px/20px 'Liberation Sans',sans-serif;color:#000;">35</span>
<span style="left:1124.5px;width:600px;text-align:center;top:1184px;font:normal 20px/20px 'Liberation Sans',sans-serif;color:#000;">40</span>
<span style="left:1162.5px;width:600px;text-align:center;top:1184px;font:normal 20px/20px 'Liberation Sans',sans-serif;color:#000;">45</span>
<span style="left:1200.5px;width:600px;text-align:center;top:1184px;font:normal 20px/20px 'Liberation Sans',sans-serif;color:#000;">50</span>
<span style="left:1238.5px;width:600px;text-align:center;top:1184px;font:normal 20px/20px 'Liberation Sans',sans-serif;color:#000;">55</span>
<span style="left:1277.5px;width:600px;text-align:center;top:1184px;font:normal 20px/20px 'Liberation Sans',sans-serif;color:#000;">60</span>
<span style="left:1315.5px;width:600px;text-align:center;top:1184px;font:normal 20px/20px 'Liberation Sans',sans-serif;color:#000;">65</span>
<span style="left:1353.5px;width:600px;text-align:center;top:1184px;font:normal 20px/20px 'Liberation Sans',sans-serif;color:#000;">70</span>
<span style="left:1392.5px;width:600px;text-align:center;top:1184px;font:normal 20px/20px 'Liberation Sans',sans-serif;color:#000;">75</span>
<span style="left:1430.5px;width:600px;text-align:center;top:1184px;font:normal 20px/20px 'Liberation Sans',sans-serif;color:#000;">80</span>
<span style="left:1468.5px;width:600px;text-align:center;top:1184px;font:normal 20px/20px 'Liberation Sans',sans-serif;color:#000;">85</span>
<span style="left:1506.5px;width:600px;text-align:center;top:1184px;font:normal 20px/20px 'Liberation Sans',sans-serif;color:#000;">90</span>
<span style="left:1545.5px;width:600px;text-align:center;top:1184px;font:normal 20px/20px 'Liberation Sans',sans-serif;color:#000;">95</span>
<span style="left:1583.5px;width:600px;text-align:center;top:1184px;font:normal 20px/20px 'Liberation Sans',sans-serif;color:#000;">100</span>
<span style="left:1621.5px;width:600px;text-align:center;top:1184px;font:normal 20px/20px 'Liberation Sans',sans-serif;color:#000;">105</span>
<span style="left:1659.5px;width:600px;text-align:center;top:1184px;font:normal 20px/20px 'Liberation Sans',sans-serif;color:#000;">110</span>
<span style="left:1698.5px;width:600px;text-align:center;top:1184px;font:normal 20px/20px 'Liberation Sans',sans-serif;color:#000;">115</span>
<span style="left:1736.5px;width:600px;text-align:center;top:1184px;font:normal 20px/20px 'Liberation Sans',sans-serif;color:#000;">120</span>
<span style="left:1774.5px;width:600px;text-align:center;top:1184px;font:normal 20px/20px 'Liberation Sans',sans-serif;color:#000;">125</span>
<span style="left:1813.5px;width:600px;text-align:center;top:1184px;font:normal 20px/20px 'Liberation Sans',sans-serif;color:#000;">130</span>
<span style="left:1851.5px;width:600px;text-align:center;top:1184px;font:normal 20px/20px 'Liberation Sans',sans-serif;color:#000;">135</span>
<span style="left:501px;width:600px;text-align:right;top:1207px;font:normal 20px/20px 'Liberation Sans',sans-serif;color:#000;">5</span>
<span style="left:501px;width:600px;text-align:right;top:1233px;font:normal 20px/20px 'Liberation Sans',sans-serif;color:#000;">4</span>
<span style="left:501px;width:600px;text-align:right;top:1259px;font:normal 20px/20px 'Liberation Sans',sans-serif;color:#000;">3</span>
<span style="left:501px;width:600px;text-align:right;top:1285px;font:normal 20px/20px 'Liberation Sans',sans-serif;color:#000;">2</span>
<span style="left:501px;width:600px;text-align:right;top:1311px;font:normal 20px/20px 'Liberation Sans',sans-serif;color:#000;">1</span>
<span style="left:501px;width:600px;text-align:right;top:1337px;font:normal 20px/20px 'Liberation Sans',sans-serif;color:#000;">0</span>
<span style="left:501px;width:600px;text-align:right;top:1363px;font:normal 20px/20px 'Liberation Sans',sans-serif;color:#000;">-1</span>
<span style="left:501px;width:600px;text-align:right;top:1389px;font:normal 20px/20px 'Liberation Sans',sans-serif;color:#000;">-2</span>
<span style="left:501px;width:600px;text-align:right;top:1415px;font:normal 20px/20px 'Liberation Sans',sans-serif;color:#000;">-3</span>
<span style="left:501px;width:600px;text-align:right;top:1441px;font:normal 20px/20px 'Liberation Sans',sans-serif;color:#000;">-4</span>
<span style="left:501px;width:600px;text-align:right;top:1467px;font:normal 20px/20px 'Liberation Sans',sans-serif;color:#000;">-5</span>
<span style="left:501px;width:600px;text-align:right;top:1493px;font:normal 20px/20px 'Liberation Sans',sans-serif;color:#000;">-6</span>
<span style="left:501px;width:600px;text-align:right;top:1519px;font:normal 20px/20px 'Liberation Sans',sans-serif;color:#000;">-7</span>
<span style="left:501px;width:600px;text-align:right;top:1545px;font:normal 20px/20px 'Liberation Sans',sans-serif;color:#000;">-8</span>
<span style="left:501px;width:600px;text-align:right;top:1571px;font:normal 20px/20px 'Liberation Sans',sans-serif;color:#000;">-9</span>
<span style="left:501px;width:600px;text-align:right;top:1597px;font:normal 20px/20px 'Liberation Sans',sans-serif;color:#000;">-10</span>
<span style="left:501px;width:600px;text-align:right;top:1623px;font:normal 20px/20px 'Liberation Sans',sans-serif;color:#000;">-11</span>
<span style="left:501px;width:600px;text-align:right;top:1648px;font:normal 20px/20px 'Liberation Sans',sans-serif;color:#000;">-12</span>
<span style="left:501px;width:600px;text-align:right;top:1674px;font:normal 20px/20px 'Liberation Sans',sans-serif;color:#000;">-13</span>
<span style="left:501px;width:600px;text-align:right;top:1700px;font:normal 20px/20px 'Liberation Sans',sans-serif;color:#000;">-14</span>
<span style="top:344px;font:normal bold 24px/24px 'Liberation Sans',sans-serif;color:#000;left:1542.82px;transform:scaleX(0.9859);transform-origin:0 0;">Polar Plot</span>
<span style="top:1079px;font:normal bold 24px/24px 'Liberation Sans',sans-serif;color:#000;left:1544.22px;transform:scaleX(0.9878);transform-origin:0 0;">Polar Plot</span>
<span style="top:998px;font:normal bold 20px/20px 'Liberation Sans',sans-serif;color:#000;left:1549.31px;transform:scaleX(0.9797);transform-origin:0 0;">Airspeed (km/hr)</span>
<span style="top:1732px;font:normal bold 20px/20px 'Liberation Sans',sans-serif;color:#000;left:1558.91px;transform:scaleX(0.9815);transform-origin:0 0;">Airspeed (knots)</span>
<span style="left:1055.6px;top:720.3px;font:bold 20px/20px 'Liberation Sans',sans-serif;transform-origin:0 0;transform:rotate(-90deg) translate(-46.44px,-17px) scaleX(0.9751)">Sink (m/s)</span>
<span style="left:1055.6px;top:1469px;font:bold 20px/20px 'Liberation Sans',sans-serif;transform-origin:0 0;transform:rotate(-90deg) translate(-55.44px,-17px) scaleX(0.9726)">Sink (knots)</span>
<div style="left:2193px;top:293px;width:28px;height:1504px;background:#e6e6e6;"></div>
<div style="left:2195px;top:319px;width:23px;height:1455px;background:#dcdcdc;"></div>
<div style="left:2194px;top:294px;width:23px;height:23px;border:1px solid #dadada;background:#fff"></div>
<svg style="left:2201px;top:302px;" width="11" height="6" viewBox="0 0 11 6"><path d="M0 6 L5.5 0 L11 6 Z" fill="#8a8a8a"/></svg>
<div style="left:2194px;top:319px;width:23px;height:338px;border:1px solid #c9c9c9;background:#fff"></div>
<div style="left:2194px;top:1774px;width:23px;height:22px;border:1px solid #dadada;background:#fff"></div>
<svg style="left:2201px;top:1783px;" width="11" height="6" viewBox="0 0 11 6"><path d="M0 0 L5.5 6 L11 0 Z" fill="#777"/></svg>
<div style="left:1px;top:1796px;width:2221px;height:35px;background:#e6e6e6;"></div>
<div style="left:1px;top:1796px;width:2221px;height:1px;background:#b9b9b9"></div>
<div style="left:1px;top:1830px;width:2221px;height:1px;background:#c9c9c9"></div>
<div style="left:120px;top:1797px;width:89px;height:28px;background:#fff;"></div>
<div style="left:119px;top:1797px;width:1px;height:29px;background:#b9b9b9"></div>
<div style="left:209px;top:1797px;width:1px;height:29px;background:#b9b9b9"></div>
<div style="left:119px;top:1825px;width:91px;height:2px;background:#217346"></div>
<span style="top:1801px;font:normal bold 20.5px/20.5px 'Liberation Sans',sans-serif;color:#217346;left:131.02px;transform:scaleX(0.9591);transform-origin:0 0;">Sheet1</span>
<span style="top:1801px;font:normal normal 20.5px/20.5px 'Liberation Sans',sans-serif;color:#444;left:221.06px;transform:scaleX(0.9365);transform-origin:0 0;">Sheet2</span>
<span style="top:1801px;font:normal normal 20.5px/20.5px 'Liberation Sans',sans-serif;color:#444;left:310.47px;transform:scaleX(0.9270);transform-origin:0 0;">Sheet3</span>
<div style="left:297px;top:1800px;width:1px;height:25px;background:#ababab"></div>
<div style="left:385px;top:1800px;width:1px;height:25px;background:#ababab"></div>
<svg style="left:424px;top:1801px;" width="24" height="24" viewBox="0 0 24 24"><circle cx="12" cy="12" r="10.3" fill="none" stroke="#7a7a7a" stroke-width="1.4"/><path d="M12 6.5 V17.5 M6.5 12 H17.5" stroke="#7a7a7a" stroke-width="1.6"/></svg>
<svg style="left:30px;top:1807px;" width="7" height="12" viewBox="0 0 7 12"><path d="M6.5 0 V12 L0 6 Z" fill="#c3c3c3"/></svg>
<svg style="left:65px;top:1807px;" width="7" height="12" viewBox="0 0 7 12"><path d="M0.5 0 V12 L7 6 Z" fill="#c3c3c3"/></svg>
<div style="left:1330px;top:1806px;width:3px;height:3px;background:#a9a9a9;"></div>
<div style="left:1330px;top:1812px;width:3px;height:3px;background:#a9a9a9;"></div>
<div style="left:1330px;top:1818px;width:3px;height:3px;background:#a9a9a9;"></div>
<div style="left:1350px;top:1800px;width:23px;height:23px;border:1px solid #dadada;background:#fff"></div>
<svg style="left:1359px;top:1806px;" width="7" height="12" viewBox="0 0 7 12"><path d="M6.5 0 V12 L0 6 Z" fill="#777"/></svg>
<div style="left:1375px;top:1800px;width:745px;height:23px;border:1px solid #c9c9c9;background:#fff"></div>
<div style="left:2122px;top:1801px;width:46px;height:24px;background:#dcdcdc;"></div>
<div style="left:2168px;top:1800px;width:23px;height:23px;border:1px solid #dadada;background:#fff"></div>
<svg style="left:2178px;top:1806px;" width="7" height="12" viewBox="0 0 7 12"><path d="M0.5 0 V12 L7 6 Z" fill="#777"/></svg>
<div style="left:1px;top:1831px;width:2221px;height:32px;background:#f1f1f1;"></div>
<span style="top:1839px;font:normal normal 16px/16px 'Liberation Sans',sans-serif;color:#444;left:7.85px;transform:scaleX(0.9222);transform-origin:0 0;">Ready</span>
<div style="left:1815px;top:1831px;width:45px;height:32px;background:#c8c8c8;"></div>
<svg style="left:1827px;top:1837px;" width="21" height="20" viewBox="0 0 21 20"><g fill="none" stroke="#777" stroke-width="1.1"><rect x="1" y="1" width="18.5" height="18"/><path d="M1 7 H19.5 M1 13 H19.5 M7.2 1 V19 M13.4 1 V19"/></g></svg>
<svg style="left:1872px;top:1837px;" width="21" height="20" viewBox="0 0 21 20"><g fill="none" stroke="#777" stroke-width="1.1"><rect x="1" y="1" width="18.5" height="18"/><rect x="5.5" y="5" width="9.5" height="10.5"/><path d="M8 8.2 H12.5 M8 10.3 H12.5 M8 12.4 H12.5"/></g></svg>
<svg style="left:1917px;top:1837px;" width="21" height="20" viewBox="0 0 21 20"><g fill="none" stroke="#777" stroke-width="1.1"><rect x="1" y="1" width="18.5" height="18"/><path d="M1 11 H12 V1 M7 1 V7"/></g></svg>
<div style="left:1956px;top:1845px;width:11px;height:2px;background:#555;"></div>
<div style="left:1972px;top:1845px;width:150px;height:1px;background:#a0a0a0;"></div>
<div style="left:2044px;top:1838px;width:6px;height:16px;background:#666;"></div>
<div style="left:2128px;top:1845px;width:13px;height:2px;background:#555;"></div>
<div style="left:2133.5px;top:1839px;width:2px;height:14px;background:#555;"></div>
<span style="top:1839px;font:normal normal 16px/16px 'Liberation Sans',sans-serif;color:#555;left:2157.77px;transform:scaleX(0.9809);transform-origin:0 0;">100%</span>
<div style="left:0px;top:0px;width:1px;height:1864px;background:#217346;"></div>
<div style="left:2221px;top:96px;width:2px;height:1768px;background:#217346;"></div>
<div style="left:0px;top:1862px;width:2223px;height:1px;background:#7fb096;"></div>
<div style="left:0px;top:1863px;width:2223px;height:1px;background:#217346;"></div>
<div style="left:2218px;top:228px;width:3px;height:1603px;background:#ececec;"></div></body></html>
